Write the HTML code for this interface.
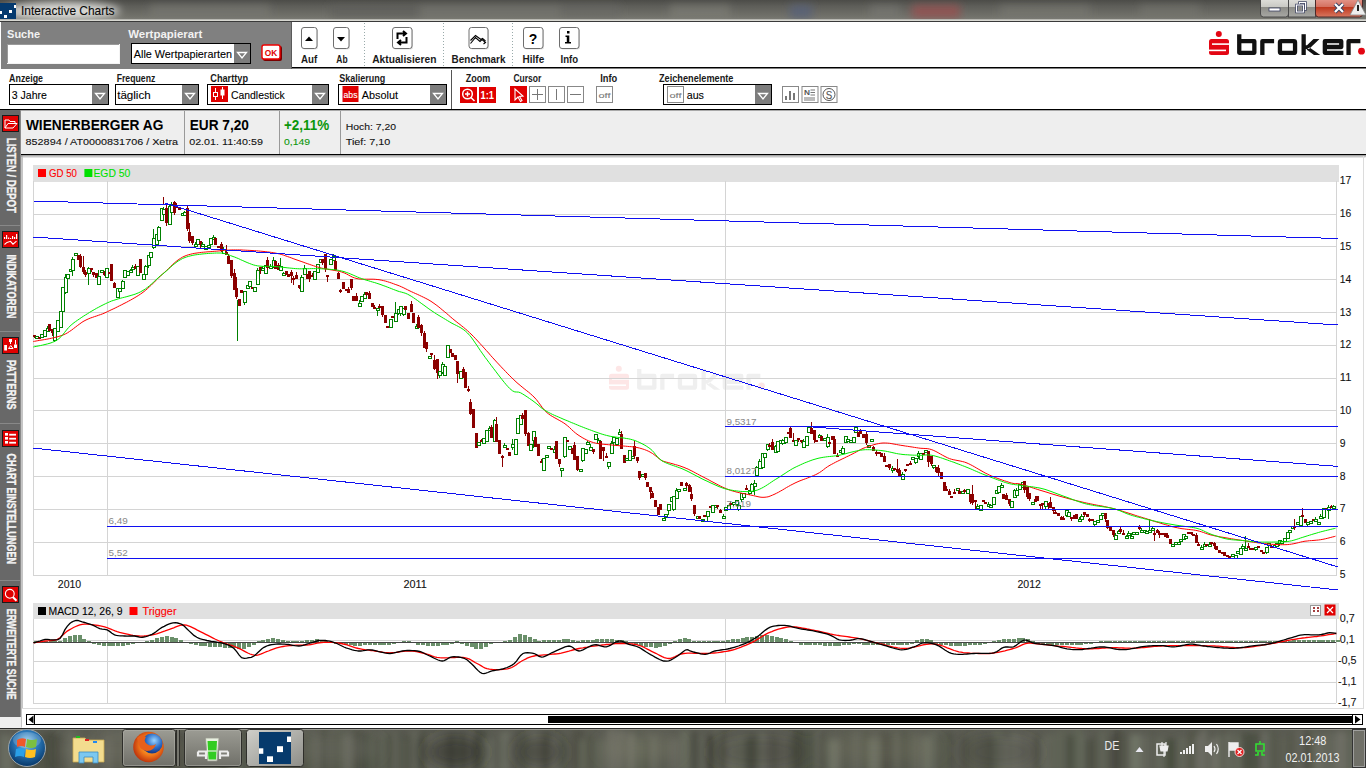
<!DOCTYPE html>
<html><head><meta charset="utf-8"><title>Interactive Charts</title>
<style>html,body{margin:0;padding:0;overflow:hidden;background:#fff;width:1366px;height:768px}
svg{display:block} text{font-family:"Liberation Sans", sans-serif;}</style></head>
<body><svg width="1366" height="768" viewBox="0 0 1366 768" font-family='"Liberation Sans", sans-serif'>
<defs>
<linearGradient id="tb" x1="0" y1="0" x2="0" y2="1">
 <stop offset="0" stop-color="#4c4c48"/><stop offset="0.3" stop-color="#5e5e59"/><stop offset="0.8" stop-color="#72726b"/><stop offset="1" stop-color="#80807a"/>
</linearGradient>
<linearGradient id="task" x1="0" y1="0" x2="0" y2="1">
 <stop offset="0" stop-color="#6e6e66"/><stop offset="0.15" stop-color="#55554d"/><stop offset="1" stop-color="#45453e"/>
</linearGradient>
<filter id="blur8"><feGaussianBlur stdDeviation="8"/></filter>
<clipPath id="tclip"><rect x="0" y="728" width="1366" height="40"/></clipPath>
<clipPath id="tbclip"><rect x="0" y="0" width="1366" height="19"/></clipPath>
<filter id="blur3"><feGaussianBlur stdDeviation="3"/></filter>
<filter id="blur4"><feGaussianBlur stdDeviation="4"/></filter>
<linearGradient id="btnhi" x1="0" y1="0" x2="0" y2="1">
 <stop offset="0" stop-color="#e4e4e0"/><stop offset="0.5" stop-color="#c9c9c4"/><stop offset="0.52" stop-color="#8d8d88"/><stop offset="1" stop-color="#a8a8a4"/>
</linearGradient>
<linearGradient id="closeg" x1="0" y1="0" x2="0" y2="1">
 <stop offset="0" stop-color="#e8a095"/><stop offset="0.5" stop-color="#d4705f"/><stop offset="0.52" stop-color="#c0391f"/><stop offset="1" stop-color="#d8775f"/>
</linearGradient>
<radialGradient id="orb" cx="0.5" cy="0.35" r="0.6">
 <stop offset="0" stop-color="#9fd3f0"/><stop offset="0.5" stop-color="#2a78b8"/><stop offset="1" stop-color="#0b3f73"/>
</radialGradient>
<radialGradient id="globe" cx="0.6" cy="0.35" r="0.6"><stop offset="0" stop-color="#9ad4ff"/><stop offset="0.6" stop-color="#2d6fc8"/><stop offset="1" stop-color="#1a3c8a"/></radialGradient>
<radialGradient id="ff" cx="0.55" cy="0.45" r="0.55">
 <stop offset="0" stop-color="#ffd23a"/><stop offset="0.6" stop-color="#f0771a"/><stop offset="1" stop-color="#c0380e"/>
</radialGradient>
<linearGradient id="tbtn" x1="0" y1="0" x2="0" y2="1">
 <stop offset="0" stop-color="#9c9c94"/><stop offset="1" stop-color="#6f6f68"/>
</linearGradient>
<linearGradient id="tbtn2" x1="0" y1="0" x2="1" y2="1">
 <stop offset="0" stop-color="#cfcfca"/><stop offset="1" stop-color="#8e8e88"/>
</linearGradient>
</defs>
<rect x="0" y="0" width="1366" height="21" fill="url(#tb)" />
<g filter="url(#blur4)">
<rect x="150" y="5" width="120" height="13" fill="#7a7a74" opacity="0.6"/>
<rect x="330" y="5" width="90" height="13" fill="#5e5e5a" opacity="0.6"/>
<rect x="420" y="5" width="140" height="13" fill="#777772" opacity="0.6"/>
<rect x="560" y="5" width="60" height="13" fill="#6a6a66" opacity="0.5"/>
<rect x="670" y="5" width="60" height="13" fill="#86867e" opacity="0.5"/>
<rect x="790" y="5" width="22" height="13" fill="#55607a" opacity="0.8"/>
<rect x="870" y="5" width="30" height="13" fill="#7c7c78" opacity="0.5"/>
<rect x="912" y="5" width="48" height="13" fill="#9a5050" opacity="0.8"/>
<rect x="1000" y="5" width="90" height="13" fill="#7e7e76" opacity="0.5"/>
<rect x="1140" y="5" width="60" height="13" fill="#77776f" opacity="0.5"/>
<ellipse cx="62" cy="11" rx="58" ry="9" fill="#e8e8e4" opacity="0.9"/>
</g>
<rect x="0" y="19" width="1366" height="1" fill="#b8b8b2" />
<rect x="0" y="20" width="1366" height="1" fill="#d8d8d2" />
<rect x="0" y="21" width="1366" height="1" fill="#3a3a3a" />
<rect x="0" y="3" width="16" height="16" fill="#053a6e" />
<rect x="14" y="5" width="2" height="3" fill="#fff" />
<rect x="0" y="11" width="2" height="3" fill="#fff" />
<rect x="9" y="10" width="3" height="3" fill="#fff" />
<rect x="4" y="15" width="3" height="3" fill="#fff" />
<text x="21.0" y="14.6" font-size="12.06" fill="#0a0a0a" stroke="#0a0a0a" stroke-width="0.1" textLength="93.5" lengthAdjust="spacingAndGlyphs" >Interactive Charts</text>
<g>
<rect x="1260.5" y="-3" width="28" height="20" rx="3" fill="url(#btnhi)" stroke="#4a4a4a"/>
<rect x="1288.5" y="-3" width="27" height="20" fill="url(#btnhi)" stroke="#4a4a4a"/>
<rect x="1315.5" y="-3" width="47" height="20" rx="3" fill="url(#closeg)" stroke="#4a2a2a"/>
<rect x="1269" y="8" width="11" height="3" fill="#fff" stroke="#3a4060" stroke-width="0.8"/>
<rect x="1299.5" y="2.5" width="6" height="7" fill="none" stroke="#3a4060" stroke-width="2.5"/>
<rect x="1299.5" y="2.5" width="6" height="7" fill="none" stroke="#fff" stroke-width="1.1"/>
<rect x="1296.5" y="5" width="7" height="7" fill="#a0a09c" stroke="#3a4060" stroke-width="2.5"/>
<rect x="1296.5" y="5" width="7" height="7" fill="none" stroke="#fff" stroke-width="1.1"/>
<rect x="1298.5" y="7" width="3" height="3" fill="#8a8a86"/>
<path d="M1335,4 L1343,12 M1343,4 L1335,12" stroke="#3a4060" stroke-width="4"/>
<path d="M1335,4 L1343,12 M1343,4 L1335,12" stroke="#fff" stroke-width="2.2"/>
<path d="M1358,0 L1366,15 L1350,15 Z" fill="#eee" stroke="#888" stroke-width="0.8"/>
<rect x="1357" y="5" width="2" height="6" fill="#222" />
</g>
<rect x="0" y="22" width="1366" height="88" fill="#ffffff" />
<rect x="1" y="22" width="291" height="47" fill="#808080" />
<rect x="291" y="22" width="1" height="47" fill="#5a5a5a" />
<rect x="292" y="67" width="1074" height="1.5" fill="#000" />
<text x="7.1" y="37.8" font-size="10.76" font-weight="bold" fill="#f2f2f2" textLength="32.9" lengthAdjust="spacingAndGlyphs" >Suche</text>
<text x="128.2" y="37.8" font-size="10.76" font-weight="bold" fill="#f2f2f2" textLength="74.2" lengthAdjust="spacingAndGlyphs" >Wertpapierart</text>
<rect x="7" y="44" width="113" height="20" fill="#f4f4f4" />
<rect x="7" y="44" width="112" height="1" fill="#9a9a9a" />
<rect x="7" y="44" width="1" height="19" fill="#9a9a9a" />
<rect x="8" y="45" width="111" height="18" fill="#ffffff" />
<rect x="131" y="43" width="120" height="21" fill="#000" />
<rect x="132" y="44" width="102" height="19" fill="#fff" />
<rect x="234" y="44" width="16" height="19" fill="#7d7d7d" />
<path d="M237.5,52.5 L246.5,52.5 L242,58 Z" fill="none" stroke="#fff" stroke-width="1.3"/>
<text x="133.8" y="57.6" font-size="11.63" fill="#000" stroke="#000" stroke-width="0.1" textLength="98.2" lengthAdjust="spacingAndGlyphs" >Alle Wertpapierarten</text>
<rect x="263" y="46" width="19" height="15" rx="2" fill="#7a0000"/>
<rect x="262" y="45" width="18" height="14" rx="2" fill="#fff" stroke="#e00" stroke-width="1.4"/>
<text x="264.8" y="56.0" font-size="9.45" font-weight="bold" fill="#e00000" textLength="12.5" lengthAdjust="spacingAndGlyphs" >OK</text>
<rect x="302.5" y="28.5" width="15.5" height="21" rx="2.5" fill="#d8d8d8" opacity="0.8"/>
<rect x="301.5" y="27.5" width="15.5" height="21" rx="2.5" fill="#fff" stroke="#6e6e6e"/>
<rect x="334.5" y="28.5" width="15.5" height="21" rx="2.5" fill="#d8d8d8" opacity="0.8"/>
<rect x="333.5" y="27.5" width="15.5" height="21" rx="2.5" fill="#fff" stroke="#6e6e6e"/>
<rect x="393.5" y="28.5" width="19.5" height="21" rx="2.5" fill="#d8d8d8" opacity="0.8"/>
<rect x="392.5" y="27.5" width="19.5" height="21" rx="2.5" fill="#fff" stroke="#6e6e6e"/>
<rect x="470.0" y="28.5" width="19.0" height="21" rx="2.5" fill="#d8d8d8" opacity="0.8"/>
<rect x="469.0" y="27.5" width="19.0" height="21" rx="2.5" fill="#fff" stroke="#6e6e6e"/>
<rect x="524.5" y="28.5" width="19.5" height="21" rx="2.5" fill="#d8d8d8" opacity="0.8"/>
<rect x="523.5" y="27.5" width="19.5" height="21" rx="2.5" fill="#fff" stroke="#6e6e6e"/>
<rect x="560.5" y="28.5" width="19.5" height="21" rx="2.5" fill="#d8d8d8" opacity="0.8"/>
<rect x="559.5" y="27.5" width="19.5" height="21" rx="2.5" fill="#fff" stroke="#6e6e6e"/>
<path d="M305,41 L313,41 L309,36.5 Z" fill="#000"/>
<path d="M337,37 L345,37 L341,41.5 Z" fill="#000"/>
<path d="M397.5,39 L397.5,33.5 L405,33.5 M403,31 L406,33.5 L403,36 M406.5,37 L406.5,42.5 L399,42.5 M401,40 L398,42.5 L401,45" fill="none" stroke="#000" stroke-width="2"/>
<path d="M470.5,43.5 L475.5,37.5 L480,41.5 L482,39.5 L485.5,42.5 L483.5,44" fill="none" stroke="#000" stroke-width="1.1"/>
<path d="M470.5,40.5 L475.5,35.5 L481,39.5 L482.5,38.5 L485.5,41" fill="none" stroke="#000" stroke-width="1.1"/>
<text x="533" y="44" font-size="14" font-weight="bold" fill="#000" text-anchor="middle" font-family='"Liberation Sans", sans-serif'>?</text>
<rect x="567" y="31" width="2.5" height="2.5" fill="#000"/><path d="M565.5,35.5 L569.3,35.5 L569.3,42 L571,42 L571,43.5 L565,43.5 L565,42 L566.8,42 L566.8,37 L565.5,37 Z" fill="#000"/>
<line x1="364.5" y1="23" x2="364.5" y2="67" stroke="#9aa" stroke-width="1" stroke-dasharray="1,2"/>
<line x1="443.5" y1="23" x2="443.5" y2="67" stroke="#9aa" stroke-width="1" stroke-dasharray="1,2"/>
<line x1="512.5" y1="23" x2="512.5" y2="67" stroke="#9aa" stroke-width="1" stroke-dasharray="1,2"/>
<text x="301.0" y="62.8" font-size="11.19" font-weight="bold" fill="#1a1a1a" textLength="16.2" lengthAdjust="spacingAndGlyphs" >Auf</text>
<text x="336.3" y="62.8" font-size="11.19" font-weight="bold" fill="#1a1a1a" textLength="11.3" lengthAdjust="spacingAndGlyphs" >Ab</text>
<text x="372.2" y="62.8" font-size="11.19" font-weight="bold" fill="#1a1a1a" textLength="64.2" lengthAdjust="spacingAndGlyphs" >Aktualisieren</text>
<text x="451.5" y="62.8" font-size="11.19" font-weight="bold" fill="#1a1a1a" textLength="53.9" lengthAdjust="spacingAndGlyphs" >Benchmark</text>
<text x="522.6" y="62.8" font-size="11.19" font-weight="bold" fill="#1a1a1a" textLength="21.6" lengthAdjust="spacingAndGlyphs" >Hilfe</text>
<text x="560.6" y="62.8" font-size="11.19" font-weight="bold" fill="#1a1a1a" textLength="17.6" lengthAdjust="spacingAndGlyphs" >Info</text>
<g transform="translate(0,0)"><circle cx="1218.8" cy="34" r="3" fill="#e30613"/><rect x="1209" y="39" width="20" height="16" rx="2.5" fill="#e30613"/><rect x="1212" y="43.3" width="17.5" height="1.6" fill="#fff"/><rect x="1208.5" y="49.6" width="17.5" height="1.6" fill="#fff"/><path d="M1239.25,34.2 L1239.25,52.85 L1254.35,52.85 L1254.35,41.15 L1239.25,41.15" fill="none" stroke="#111" stroke-width="4.3" stroke-linejoin="round"/><path d="M1262.3500000000001,55 L1262.3500000000001,41.15 L1274.1,41.15" fill="none" stroke="#111" stroke-width="4.3" stroke-linejoin="round"/><rect x="1279.95" y="41.15" width="15.10000000000009" height="11.7" rx="1.2" fill="none" stroke="#111" stroke-width="4.3"/><path d="M1303.65,34.2 L1303.65,55" fill="none" stroke="#111" stroke-width="4.3"/><path d="M1304,49 L1309,49 L1319.5,39 L1313.5,39 L1307,45.2 L1304,45.2 Z M1309.5,47.5 L1320.3,55 L1314,55 L1306.5,49.5 Z" fill="#111"/><path d="M1343.4,52.85 L1324.8500000000001,52.85 L1324.8500000000001,41.15 L1341.25,41.15 L1341.25,47 L1324.8500000000001,47" fill="none" stroke="#111" stroke-width="4.3" stroke-linejoin="round"/><path d="M1348.5500000000002,55 L1348.5500000000002,41.15 L1360.4,41.15" fill="none" stroke="#111" stroke-width="4.3" stroke-linejoin="round"/><circle cx="1361.5" cy="51.2" r="3.4" fill="#e30613"/></g>
<text x="9.1" y="82.2" font-size="10.17" font-weight="bold" fill="#1a1a1a" textLength="33.9" lengthAdjust="spacingAndGlyphs" >Anzeige</text>
<text x="116.7" y="82.2" font-size="10.17" font-weight="bold" fill="#1a1a1a" textLength="38.6" lengthAdjust="spacingAndGlyphs" >Frequenz</text>
<text x="210.3" y="82.2" font-size="10.17" font-weight="bold" fill="#1a1a1a" textLength="37.7" lengthAdjust="spacingAndGlyphs" >Charttyp</text>
<text x="339.2" y="82.2" font-size="10.17" font-weight="bold" fill="#1a1a1a" textLength="46.1" lengthAdjust="spacingAndGlyphs" >Skalierung</text>
<text x="465.7" y="82.2" font-size="10.17" font-weight="bold" fill="#1a1a1a" textLength="24.6" lengthAdjust="spacingAndGlyphs" >Zoom</text>
<text x="513.4" y="82.2" font-size="10.17" font-weight="bold" fill="#1a1a1a" textLength="27.9" lengthAdjust="spacingAndGlyphs" >Cursor</text>
<text x="600.2" y="82.2" font-size="10.17" font-weight="bold" fill="#1a1a1a" textLength="17.1" lengthAdjust="spacingAndGlyphs" >Info</text>
<text x="659.0" y="82.2" font-size="10.17" font-weight="bold" fill="#1a1a1a" textLength="74.4" lengthAdjust="spacingAndGlyphs" >Zeichenelemente</text>
<rect x="9" y="84" width="100" height="21" fill="#000" />
<rect x="10" y="85" width="98" height="19" fill="#fff" />
<rect x="92" y="85" width="16" height="19" fill="#7d7d7d" />
<path d="M95.5,93.5 L104.5,93.5 L100.0,99 Z" fill="none" stroke="#fff" stroke-width="1.3"/>
<text x="11.7" y="99.2" font-size="11.63" fill="#000" stroke="#000" stroke-width="0.1" textLength="35.2" lengthAdjust="spacingAndGlyphs" >3 Jahre</text>
<rect x="115" y="84" width="84" height="21" fill="#000" />
<rect x="116" y="85" width="82" height="19" fill="#fff" />
<rect x="182" y="85" width="16" height="19" fill="#7d7d7d" />
<path d="M185.5,93.5 L194.5,93.5 L190.0,99 Z" fill="none" stroke="#fff" stroke-width="1.3"/>
<text x="117.2" y="99.2" font-size="11.63" fill="#000" stroke="#000" stroke-width="0.1" textLength="33.5" lengthAdjust="spacingAndGlyphs" >täglich</text>
<rect x="207" y="84" width="122" height="21" fill="#000" />
<rect x="208" y="85" width="120" height="19" fill="#fff" />
<rect x="312" y="85" width="16" height="19" fill="#7d7d7d" />
<path d="M315.5,93.5 L324.5,93.5 L320.0,99 Z" fill="none" stroke="#fff" stroke-width="1.3"/>
<text x="230.9" y="99.2" font-size="11.63" fill="#000" stroke="#000" stroke-width="0.1" textLength="53.9" lengthAdjust="spacingAndGlyphs" >Candlestick</text>
<rect x="338" y="84" width="109" height="21" fill="#000" />
<rect x="339" y="85" width="107" height="19" fill="#fff" />
<rect x="430" y="85" width="16" height="19" fill="#7d7d7d" />
<path d="M433.5,93.5 L442.5,93.5 L438.0,99 Z" fill="none" stroke="#fff" stroke-width="1.3"/>
<text x="361.8" y="99.2" font-size="11.63" fill="#000" stroke="#000" stroke-width="0.1" textLength="36.2" lengthAdjust="spacingAndGlyphs" >Absolut</text>
<rect x="663" y="84" width="109" height="21" fill="#000" />
<rect x="664" y="85" width="107" height="19" fill="#fff" />
<rect x="755" y="85" width="16" height="19" fill="#7d7d7d" />
<path d="M758.5,93.5 L767.5,93.5 L763.0,99 Z" fill="none" stroke="#fff" stroke-width="1.3"/>
<text x="686.7" y="99.2" font-size="11.63" fill="#000" stroke="#000" stroke-width="0.1" textLength="17.3" lengthAdjust="spacingAndGlyphs" >aus</text>
<rect x="211" y="86" width="17" height="16" fill="#e00000" />
<path d="M215.5,88 L215.5,100 M222.5,87 L222.5,99" stroke="#fff" stroke-width="1"/>
<rect x="213.5" y="92.5" width="4" height="4" fill="#e00000" stroke="#fff"/><rect x="220.5" y="89.5" width="4" height="6" fill="#fff"/>
<rect x="342.5" y="86" width="16" height="16" fill="#e00000" />
<text x="343.5" y="98.0" font-size="8.72" fill="#fff" stroke="#fff" stroke-width="0.1" textLength="14.0" lengthAdjust="spacingAndGlyphs" >abs</text>
<rect x="451" y="70" width="1" height="39" fill="#555" />
<rect x="460" y="87" width="17" height="16" fill="#e00000" />
<circle cx="467.5" cy="94" r="4.8" fill="none" stroke="#fff" stroke-width="1.5"/><path d="M465,94 L470,94 M467.5,91.5 L467.5,96.5 M471,97.5 L474.5,101" stroke="#fff" stroke-width="1.5"/>
<rect x="479" y="87" width="17" height="16" fill="#e00000" />
<text x="480.5" y="98.5" font-size="10.17" font-weight="bold" fill="#fff" textLength="13.5" lengthAdjust="spacingAndGlyphs" >1:1</text>
<rect x="510" y="86" width="17" height="17" fill="#e00000" />
<path d="M515,89 L515,100 L518,97 L520.5,101.5 L522,100.5 L519.5,96.5 L523,96 Z" fill="none" stroke="#fff" stroke-width="1.1"/>
<rect x="529.5" y="86.5" width="16" height="16" fill="#fff" stroke="#888"/>
<rect x="548.5" y="86.5" width="16" height="16" fill="#fff" stroke="#888"/>
<rect x="567.5" y="86.5" width="16" height="16" fill="#fff" stroke="#888"/>
<path d="M537.5,89 L537.5,100 M532,94.5 L543,94.5" stroke="#777" stroke-width="1"/>
<path d="M556.5,89 L556.5,100" stroke="#777" stroke-width="1"/>
<path d="M570,94.5 L581,94.5" stroke="#777" stroke-width="1"/>
<rect x="596.5" y="86.5" width="16" height="16" fill="#fff" stroke="#888"/>
<text x="598.5" y="97.5" font-size="7.99" fill="#777" stroke="#777" stroke-width="0.1" textLength="12.0" lengthAdjust="spacingAndGlyphs" >off</text>
<rect x="667.5" y="86.5" width="16" height="16" fill="#fff" stroke="#888"/>
<text x="669.5" y="97.5" font-size="7.99" fill="#777" stroke="#777" stroke-width="0.1" textLength="12.0" lengthAdjust="spacingAndGlyphs" >off</text>
<rect x="782.5" y="86.5" width="16" height="16" fill="#fff" stroke="#888"/>
<rect x="802.0" y="86.5" width="16" height="16" fill="#fff" stroke="#888"/>
<rect x="821.0" y="86.5" width="16" height="16" fill="#fff" stroke="#888"/>
<path d="M786,100 L786,96 M790,100 L790,91 M794,100 L794,93" stroke="#555" stroke-width="1.6"/>
<path d="M804,98 L815,98 M804,100 L815,100" stroke="#555" stroke-width="0.8"/>
<text x="804.0" y="95.0" font-size="7.99" font-weight="bold" fill="#555" textLength="6.0" lengthAdjust="spacingAndGlyphs" >N</text>
<path d="M810.5,90 L815,90 M810.5,92.5 L815,92.5 M810.5,95 L815,95" stroke="#555" stroke-width="0.8"/>
<circle cx="829" cy="94.5" r="6" fill="none" stroke="#555" stroke-width="1"/>
<text x="825.8" y="98.5" font-size="10.90" fill="#555" stroke="#555" stroke-width="0.1" textLength="6.5" lengthAdjust="spacingAndGlyphs" >S</text>
<rect x="21" y="109" width="1345" height="1.6" fill="#000" />
<rect x="0" y="109" width="21" height="1" fill="#000" />
<rect x="21" y="110.5" width="1345" height="44" fill="#eeeeee" />
<rect x="21" y="154" width="1345" height="1.5" fill="#000" />
<rect x="184" y="111" width="1" height="43" fill="#999" />
<rect x="279" y="111" width="1" height="43" fill="#999" />
<rect x="340" y="111" width="1" height="43" fill="#999" />
<text x="25.9" y="130.0" font-size="14.10" font-weight="bold" fill="#000" textLength="137.5" lengthAdjust="spacingAndGlyphs" >WIENERBERGER AG</text>
<text x="25.6" y="144.9" font-size="9.59" fill="#111" stroke="#111" stroke-width="0.1" textLength="152.4" lengthAdjust="spacingAndGlyphs" >852894 / AT0000831706 / Xetra</text>
<text x="189.7" y="129.7" font-size="13.81" font-weight="bold" fill="#000" textLength="59.3" lengthAdjust="spacingAndGlyphs" >EUR 7,20</text>
<text x="189.2" y="144.6" font-size="9.59" fill="#111" stroke="#111" stroke-width="0.1" textLength="73.8" lengthAdjust="spacingAndGlyphs" >02.01. 11:40:59</text>
<text x="284.0" y="129.7" font-size="13.81" font-weight="bold" fill="#0a960a" textLength="45.3" lengthAdjust="spacingAndGlyphs" >+2,11%</text>
<text x="284.0" y="144.6" font-size="9.59" fill="#0a960a" stroke="#0a960a" stroke-width="0.1" textLength="26.0" lengthAdjust="spacingAndGlyphs" >0,149</text>
<text x="345.7" y="129.9" font-size="9.74" fill="#111" stroke="#111" stroke-width="0.1" textLength="50.3" lengthAdjust="spacingAndGlyphs" >Hoch: 7,20</text>
<text x="345.7" y="144.6" font-size="9.59" fill="#111" stroke="#111" stroke-width="0.1" textLength="44.6" lengthAdjust="spacingAndGlyphs" >Tief: 7,10</text>
<rect x="0" y="110" width="21" height="607" fill="#686868" />
<rect x="20" y="110" width="1" height="607" fill="#8a8a8a" />
<rect x="0" y="717" width="21" height="11" fill="#efefef" />
<rect x="0" y="225" width="20" height="1" fill="#888" />
<rect x="0" y="331" width="20" height="1" fill="#888" />
<rect x="0" y="423" width="20" height="1" fill="#888" />
<rect x="0" y="580" width="20" height="1" fill="#888" />
<rect x="2" y="115" width="17" height="17" fill="#1a1a1a" />
<rect x="3" y="116" width="15" height="15" fill="#e00000" />
<rect x="2" y="231" width="17" height="17" fill="#1a1a1a" />
<rect x="3" y="232" width="15" height="15" fill="#e00000" />
<rect x="2" y="337" width="17" height="17" fill="#1a1a1a" />
<rect x="3" y="338" width="15" height="15" fill="#e00000" />
<rect x="2" y="430" width="17" height="17" fill="#1a1a1a" />
<rect x="3" y="431" width="15" height="15" fill="#e00000" />
<rect x="2" y="586" width="17" height="17" fill="#1a1a1a" />
<rect x="3" y="587" width="15" height="15" fill="#e00000" />
<path d="M5,120 L9,120 L10,121.5 L15,121.5 L15,123 M5,120 L5,128 L13,128 L17,123.5 L8,123.5 L5,128" fill="none" stroke="#fff" stroke-width="1"/>
<rect x="4" y="237" width="1.2" height="2" fill="#fff" />
<rect x="6" y="235" width="1.2" height="4" fill="#fff" />
<rect x="8" y="237.5" width="1.2" height="1.5" fill="#fff" />
<rect x="10" y="238" width="1.2" height="1" fill="#fff" />
<rect x="12" y="236" width="1.2" height="3" fill="#fff" />
<rect x="14" y="237" width="1.2" height="2" fill="#fff" />
<rect x="16" y="234" width="1.2" height="5" fill="#fff" />
<path d="M4.5,244.5 L7,242.4 L10.5,241.3 L13,244.2 L16.5,241.2" fill="none" stroke="#fff" stroke-width="1.1"/>
<rect x="4.2" y="345" width="2.8" height="5.5" fill="#fff"/><rect x="9" y="339" width="3" height="3" fill="#fff"/><rect x="10" y="342" width="1" height="2" fill="#fff"/><path d="M8.5,348.5 L13,348.5 L10.75,345.5 Z" fill="none" stroke="#fff" stroke-width="1"/><rect x="15" y="340" width="1" height="4.5" fill="#fff"/><rect x="14" y="344.5" width="3" height="3.5" fill="#fff"/>
<rect x="5" y="433" width="3" height="2.6" fill="#fff" />
<rect x="9.2" y="433.8" width="6.8" height="1.8" fill="#fff" />
<rect x="5" y="437" width="3" height="2.6" fill="#fff" />
<rect x="9.2" y="437.8" width="6.8" height="1.8" fill="#fff" />
<rect x="5" y="441" width="3" height="2.6" fill="#fff" />
<rect x="9.2" y="441.8" width="6.8" height="1.8" fill="#fff" />
<circle cx="9.8" cy="593.8" r="4.4" fill="none" stroke="#fff" stroke-width="1.1"/><path d="M12.8,597 L16.5,600.7" stroke="#fff" stroke-width="2"/>
<text transform="translate(6.9,175.3) rotate(90)" x="0" y="0" font-size="11.92" font-weight="bold" fill="#f4f4f4" stroke="#f4f4f4" stroke-width="0.35" text-anchor="middle" textLength="75.0" lengthAdjust="spacingAndGlyphs">LISTEN / DEPOT</text>
<text transform="translate(6.9,286.4) rotate(90)" x="0" y="0" font-size="11.92" font-weight="bold" fill="#f4f4f4" stroke="#f4f4f4" stroke-width="0.35" text-anchor="middle" textLength="64.0" lengthAdjust="spacingAndGlyphs">INDIKATOREN</text>
<text transform="translate(6.9,384.7) rotate(90)" x="0" y="0" font-size="11.92" font-weight="bold" fill="#f4f4f4" stroke="#f4f4f4" stroke-width="0.35" text-anchor="middle" textLength="50.0" lengthAdjust="spacingAndGlyphs">PATTERNS</text>
<text transform="translate(6.9,508.7) rotate(90)" x="0" y="0" font-size="11.92" font-weight="bold" fill="#f4f4f4" stroke="#f4f4f4" stroke-width="0.35" text-anchor="middle" textLength="110.6" lengthAdjust="spacingAndGlyphs">CHART EINSTELLUNGEN</text>
<text transform="translate(6.9,654.2) rotate(90)" x="0" y="0" font-size="11.92" font-weight="bold" fill="#f4f4f4" stroke="#f4f4f4" stroke-width="0.35" text-anchor="middle" textLength="90.8" lengthAdjust="spacingAndGlyphs">ERWEITERTE SUCHE</text>
<rect x="21" y="155.5" width="1345" height="572.5" fill="#ffffff" />
<rect x="21" y="155.5" width="1345" height="1" fill="#8c8c8c" />
<rect x="21.5" y="155.5" width="1" height="572" fill="#8c8c8c" />
<rect x="22.5" y="156.5" width="1343" height="1" fill="#c8c8c8" />
<rect x="1363" y="156" width="1" height="552" fill="#dcdcdc" />
<rect x="22" y="708" width="1342" height="1" fill="#dcdcdc" />
<g shape-rendering="crispEdges">
<rect x="33" y="165" width="1306" height="17" fill="#e0e0e0" />
<rect x="33" y="603" width="1306" height="16" fill="#e0e0e0" />
</g>
<g transform="translate(-600,334.8)"><circle cx="1218.8" cy="34" r="3" fill="#fde6e6"/><rect x="1209" y="39" width="20" height="16" rx="2.5" fill="#fde6e6"/><rect x="1212" y="43.3" width="17.5" height="1.6" fill="#fff"/><rect x="1208.5" y="49.6" width="17.5" height="1.6" fill="#fff"/><path d="M1239.25,34.2 L1239.25,52.85 L1254.35,52.85 L1254.35,41.15 L1239.25,41.15" fill="none" stroke="#efefef" stroke-width="4.3" stroke-linejoin="round"/><path d="M1262.3500000000001,55 L1262.3500000000001,41.15 L1274.1,41.15" fill="none" stroke="#efefef" stroke-width="4.3" stroke-linejoin="round"/><rect x="1279.95" y="41.15" width="15.10000000000009" height="11.7" rx="1.2" fill="none" stroke="#efefef" stroke-width="4.3"/><path d="M1303.65,34.2 L1303.65,55" fill="none" stroke="#efefef" stroke-width="4.3"/><path d="M1304,49 L1309,49 L1319.5,39 L1313.5,39 L1307,45.2 L1304,45.2 Z M1309.5,47.5 L1320.3,55 L1314,55 L1306.5,49.5 Z" fill="#efefef"/><path d="M1343.4,52.85 L1324.8500000000001,52.85 L1324.8500000000001,41.15 L1341.25,41.15 L1341.25,47 L1324.8500000000001,47" fill="none" stroke="#efefef" stroke-width="4.3" stroke-linejoin="round"/><path d="M1348.5500000000002,55 L1348.5500000000002,41.15 L1360.4,41.15" fill="none" stroke="#efefef" stroke-width="4.3" stroke-linejoin="round"/><circle cx="1361.5" cy="51.2" r="3.4" fill="#fde6e6"/></g>
<g shape-rendering="crispEdges">
<rect x="33" y="542" width="1303" height="1" fill="#d4d4d4" />
<rect x="33" y="509" width="1303" height="1" fill="#d4d4d4" />
<rect x="33" y="476" width="1303" height="1" fill="#d4d4d4" />
<rect x="33" y="443" width="1303" height="1" fill="#d4d4d4" />
<rect x="33" y="410" width="1303" height="1" fill="#d4d4d4" />
<rect x="33" y="378" width="1303" height="1" fill="#d4d4d4" />
<rect x="33" y="345" width="1303" height="1" fill="#d4d4d4" />
<rect x="33" y="312" width="1303" height="1" fill="#d4d4d4" />
<rect x="33" y="279" width="1303" height="1" fill="#d4d4d4" />
<rect x="33" y="246" width="1303" height="1" fill="#d4d4d4" />
<rect x="33" y="214" width="1303" height="1" fill="#d4d4d4" />
<rect x="33" y="181" width="1" height="395" fill="#d4d4d4" />
<rect x="1335.5" y="181" width="1" height="395" fill="#d4d4d4" />
<rect x="107" y="181" width="1" height="395" fill="#d4d4d4" />
<rect x="725" y="181" width="1" height="395" fill="#d4d4d4" />
<rect x="33" y="575" width="1303" height="1" fill="#d4d4d4" />
<rect x="33" y="639.5" width="1303" height="1" fill="#d4d4d4" />
<rect x="33" y="660.5" width="1303" height="1" fill="#d4d4d4" />
<rect x="33" y="681.5" width="1303" height="1" fill="#d4d4d4" />
<rect x="33" y="702.5" width="1303" height="1" fill="#d4d4d4" />
<rect x="33" y="619" width="1" height="84" fill="#d4d4d4" />
<rect x="1335.5" y="619" width="1" height="84" fill="#d4d4d4" />
<rect x="107" y="619" width="1" height="84" fill="#d4d4d4" />
<rect x="725" y="619" width="1" height="84" fill="#d4d4d4" />
</g>
<rect x="38" y="169" width="8" height="8" fill="#ff0000" />
<text x="49.0" y="177.0" font-size="10.17" fill="#ff0000" stroke="#ff0000" stroke-width="0.1" textLength="28.0" lengthAdjust="spacingAndGlyphs" >GD 50</text>
<rect x="84.4" y="169" width="8" height="8" fill="#00e000" />
<text x="93.4" y="177.0" font-size="10.17" fill="#00e000" stroke="#00e000" stroke-width="0.1" textLength="37.0" lengthAdjust="spacingAndGlyphs" >EGD 50</text>
<rect x="38" y="607" width="8" height="8" fill="#000" />
<text x="48.5" y="614.8" font-size="10.17" fill="#000" stroke="#000" stroke-width="0.1" textLength="74.0" lengthAdjust="spacingAndGlyphs" >MACD 12, 26, 9</text>
<rect x="129.5" y="607" width="8" height="8" fill="#ff0000" />
<text x="142.5" y="614.8" font-size="10.17" fill="#ff0000" stroke="#ff0000" stroke-width="0.1" textLength="34.0" lengthAdjust="spacingAndGlyphs" >Trigger</text>
<text x="1339.8" y="578.0" font-size="10.76" fill="#111" stroke="#111" stroke-width="0.1" textLength="5.8" lengthAdjust="spacingAndGlyphs" >5</text>
<text x="1339.8" y="545.2" font-size="10.76" fill="#111" stroke="#111" stroke-width="0.1" textLength="5.8" lengthAdjust="spacingAndGlyphs" >6</text>
<text x="1339.8" y="512.4" font-size="10.76" fill="#111" stroke="#111" stroke-width="0.1" textLength="5.8" lengthAdjust="spacingAndGlyphs" >7</text>
<text x="1339.8" y="479.6" font-size="10.76" fill="#111" stroke="#111" stroke-width="0.1" textLength="5.8" lengthAdjust="spacingAndGlyphs" >8</text>
<text x="1339.8" y="446.8" font-size="10.76" fill="#111" stroke="#111" stroke-width="0.1" textLength="5.8" lengthAdjust="spacingAndGlyphs" >9</text>
<text x="1339.8" y="414.0" font-size="10.76" fill="#111" stroke="#111" stroke-width="0.1" textLength="11.5" lengthAdjust="spacingAndGlyphs" >10</text>
<text x="1339.8" y="381.2" font-size="10.76" fill="#111" stroke="#111" stroke-width="0.1" textLength="11.5" lengthAdjust="spacingAndGlyphs" >11</text>
<text x="1339.8" y="348.4" font-size="10.76" fill="#111" stroke="#111" stroke-width="0.1" textLength="11.5" lengthAdjust="spacingAndGlyphs" >12</text>
<text x="1339.8" y="315.6" font-size="10.76" fill="#111" stroke="#111" stroke-width="0.1" textLength="11.5" lengthAdjust="spacingAndGlyphs" >13</text>
<text x="1339.8" y="282.8" font-size="10.76" fill="#111" stroke="#111" stroke-width="0.1" textLength="11.5" lengthAdjust="spacingAndGlyphs" >14</text>
<text x="1339.8" y="250.0" font-size="10.76" fill="#111" stroke="#111" stroke-width="0.1" textLength="11.5" lengthAdjust="spacingAndGlyphs" >15</text>
<text x="1339.8" y="217.2" font-size="10.76" fill="#111" stroke="#111" stroke-width="0.1" textLength="11.5" lengthAdjust="spacingAndGlyphs" >16</text>
<text x="1339.8" y="184.4" font-size="10.76" fill="#111" stroke="#111" stroke-width="0.1" textLength="11.5" lengthAdjust="spacingAndGlyphs" >17</text>
<text x="1339.8" y="622.2" font-size="10.76" fill="#111" stroke="#111" stroke-width="0.1" >0,7</text>
<text x="1339.8" y="643.2" font-size="10.76" fill="#111" stroke="#111" stroke-width="0.1" >0,1</text>
<text x="1338.0" y="664.2" font-size="10.76" fill="#111" stroke="#111" stroke-width="0.1" >-0,5</text>
<text x="1338.0" y="685.2" font-size="10.76" fill="#111" stroke="#111" stroke-width="0.1" >-1,1</text>
<text x="1338.0" y="706.2" font-size="10.76" fill="#111" stroke="#111" stroke-width="0.1" >-1,7</text>
<text x="57.8" y="587.7" font-size="11.05" fill="#111" stroke="#111" stroke-width="0.1" textLength="23.4" lengthAdjust="spacingAndGlyphs" >2010</text>
<text x="403.5" y="587.7" font-size="11.05" fill="#111" stroke="#111" stroke-width="0.1" textLength="23.4" lengthAdjust="spacingAndGlyphs" >2011</text>
<text x="1017.5" y="587.7" font-size="11.05" fill="#111" stroke="#111" stroke-width="0.1" textLength="23.4" lengthAdjust="spacingAndGlyphs" >2012</text>
<g shape-rendering="crispEdges">
<line x1="34.5" y1="335" x2="34.5" y2="338" stroke="#8b0000"/>
<rect x="33" y="335" width="3" height="2" fill="#8b0000"/>
<rect x="35.5" y="336.5" width="3" height="2" fill="#fff" stroke="#008000"/>
<rect x="38" y="337" width="3" height="2" fill="#8b0000"/>
<line x1="41.5" y1="334" x2="41.5" y2="338" stroke="#008000"/>
<rect x="40.5" y="334.5" width="3" height="3" fill="#fff" stroke="#008000"/>
<rect x="43.5" y="330.5" width="3" height="6" fill="#fff" stroke="#008000"/>
<line x1="47.5" y1="326" x2="47.5" y2="331" stroke="#008000"/>
<rect x="46.5" y="328.5" width="3" height="3" fill="#fff" stroke="#008000"/>
<rect x="48" y="324" width="3" height="7" fill="#8b0000"/>
<line x1="52.5" y1="329" x2="52.5" y2="336" stroke="#8b0000"/>
<rect x="51" y="329" width="3" height="4" fill="#8b0000"/>
<line x1="54.5" y1="328" x2="54.5" y2="342" stroke="#008000"/>
<rect x="53.5" y="328.5" width="3" height="12" fill="#fff" stroke="#008000"/>
<rect x="56.5" y="320.5" width="3" height="11" fill="#fff" stroke="#008000"/>
<rect x="59.5" y="311.5" width="3" height="16" fill="#fff" stroke="#008000"/>
<line x1="62.5" y1="287" x2="62.5" y2="319" stroke="#008000"/>
<rect x="61.5" y="287.5" width="3" height="24" fill="#fff" stroke="#008000"/>
<line x1="65.5" y1="274" x2="65.5" y2="294" stroke="#008000"/>
<rect x="64.5" y="277.5" width="3" height="15" fill="#fff" stroke="#008000"/>
<rect x="66.5" y="274.5" width="3" height="4" fill="#fff" stroke="#008000"/>
<rect x="69.5" y="269.5" width="3" height="2" fill="#fff" stroke="#008000"/>
<line x1="72.5" y1="257" x2="72.5" y2="276" stroke="#008000"/>
<rect x="71.5" y="259.5" width="3" height="11" fill="#fff" stroke="#008000"/>
<rect x="74.5" y="253.5" width="3" height="2" fill="#fff" stroke="#008000"/>
<rect x="77" y="255" width="3" height="5" fill="#8b0000"/>
<line x1="80.5" y1="254" x2="80.5" y2="268" stroke="#8b0000"/>
<rect x="79" y="256" width="3" height="11" fill="#8b0000"/>
<line x1="83.5" y1="256" x2="83.5" y2="274" stroke="#8b0000"/>
<rect x="82" y="267" width="3" height="5" fill="#8b0000"/>
<line x1="85.5" y1="270" x2="85.5" y2="277" stroke="#8b0000"/>
<rect x="84" y="272" width="3" height="3" fill="#8b0000"/>
<line x1="88.5" y1="267" x2="88.5" y2="285" stroke="#008000"/>
<rect x="87.5" y="268.5" width="3" height="5" fill="#fff" stroke="#008000"/>
<line x1="91.5" y1="268" x2="91.5" y2="272" stroke="#8b0000"/>
<rect x="90" y="268" width="3" height="2" fill="#8b0000"/>
<line x1="93.5" y1="272" x2="93.5" y2="277" stroke="#8b0000"/>
<rect x="92" y="272" width="3" height="3" fill="#8b0000"/>
<rect x="95" y="273" width="3" height="5" fill="#8b0000"/>
<line x1="98.5" y1="270" x2="98.5" y2="284" stroke="#008000"/>
<rect x="97.5" y="276.5" width="3" height="8" fill="#fff" stroke="#008000"/>
<rect x="100.5" y="270.5" width="3" height="2" fill="#fff" stroke="#008000"/>
<line x1="104.5" y1="271" x2="104.5" y2="276" stroke="#8b0000"/>
<rect x="103" y="272" width="3" height="3" fill="#8b0000"/>
<rect x="105.5" y="268.5" width="3" height="9" fill="#fff" stroke="#008000"/>
<rect x="108" y="272" width="3" height="2" fill="#8b0000"/>
<rect x="110" y="264" width="3" height="17" fill="#8b0000"/>
<line x1="114.5" y1="282" x2="114.5" y2="288" stroke="#8b0000"/>
<rect x="113" y="283" width="3" height="5" fill="#8b0000"/>
<rect x="116.5" y="288.5" width="3" height="9" fill="#fff" stroke="#008000"/>
<rect x="118.5" y="288.5" width="3" height="3" fill="#fff" stroke="#008000"/>
<line x1="122.5" y1="280" x2="122.5" y2="289" stroke="#008000"/>
<rect x="121.5" y="281.5" width="3" height="7" fill="#fff" stroke="#008000"/>
<rect x="123.5" y="270.5" width="3" height="7" fill="#fff" stroke="#008000"/>
<rect x="126.5" y="271.5" width="3" height="4" fill="#fff" stroke="#008000"/>
<line x1="130.5" y1="269" x2="130.5" y2="271" stroke="#008000"/>
<rect x="129.5" y="270.5" width="3" height="2" fill="#fff" stroke="#008000"/>
<line x1="132.5" y1="265" x2="132.5" y2="269" stroke="#008000"/>
<rect x="131.5" y="267.5" width="3" height="2" fill="#fff" stroke="#008000"/>
<line x1="135.5" y1="264" x2="135.5" y2="269" stroke="#8b0000"/>
<rect x="134" y="266" width="3" height="3" fill="#8b0000"/>
<rect x="136.5" y="266.5" width="3" height="9" fill="#fff" stroke="#008000"/>
<rect x="139" y="259" width="3" height="14" fill="#8b0000"/>
<rect x="142.5" y="274.5" width="3" height="5" fill="#fff" stroke="#008000"/>
<line x1="145.5" y1="265" x2="145.5" y2="276" stroke="#008000"/>
<rect x="144.5" y="266.5" width="3" height="8" fill="#fff" stroke="#008000"/>
<line x1="148.5" y1="255" x2="148.5" y2="268" stroke="#008000"/>
<rect x="147.5" y="255.5" width="3" height="10" fill="#fff" stroke="#008000"/>
<rect x="149.5" y="252.5" width="3" height="5" fill="#fff" stroke="#008000"/>
<line x1="153.5" y1="229" x2="153.5" y2="249" stroke="#008000"/>
<rect x="152.5" y="238.5" width="3" height="9" fill="#fff" stroke="#008000"/>
<rect x="155.5" y="234.5" width="3" height="10" fill="#fff" stroke="#008000"/>
<line x1="158.5" y1="226" x2="158.5" y2="243" stroke="#008000"/>
<rect x="157.5" y="227.5" width="3" height="13" fill="#fff" stroke="#008000"/>
<line x1="161.5" y1="208" x2="161.5" y2="221" stroke="#008000"/>
<rect x="160.5" y="208.5" width="3" height="12" fill="#fff" stroke="#008000"/>
<line x1="163.5" y1="207" x2="163.5" y2="214" stroke="#008000"/>
<rect x="162.5" y="209.5" width="3" height="5" fill="#fff" stroke="#008000"/>
<line x1="166.5" y1="205" x2="166.5" y2="226" stroke="#8b0000"/>
<rect x="165" y="208" width="3" height="15" fill="#8b0000"/>
<line x1="169.5" y1="205" x2="169.5" y2="224" stroke="#008000"/>
<rect x="168.5" y="206.5" width="3" height="18" fill="#fff" stroke="#008000"/>
<line x1="171.5" y1="202" x2="171.5" y2="215" stroke="#008000"/>
<rect x="170.5" y="204.5" width="3" height="8" fill="#fff" stroke="#008000"/>
<line x1="174.5" y1="201" x2="174.5" y2="215" stroke="#8b0000"/>
<rect x="173" y="202" width="3" height="11" fill="#8b0000"/>
<line x1="176.5" y1="203" x2="176.5" y2="206" stroke="#8b0000"/>
<rect x="175" y="206" width="3" height="2" fill="#8b0000"/>
<rect x="178" y="208" width="3" height="2" fill="#8b0000"/>
<line x1="182.5" y1="213" x2="182.5" y2="216" stroke="#008000"/>
<rect x="181.5" y="213.5" width="3" height="2" fill="#fff" stroke="#008000"/>
<line x1="184.5" y1="211" x2="184.5" y2="215" stroke="#008000"/>
<rect x="183.5" y="212.5" width="3" height="3" fill="#fff" stroke="#008000"/>
<line x1="187.5" y1="206" x2="187.5" y2="231" stroke="#8b0000"/>
<rect x="186" y="208" width="3" height="21" fill="#8b0000"/>
<line x1="189.5" y1="223" x2="189.5" y2="243" stroke="#8b0000"/>
<rect x="188" y="232" width="3" height="9" fill="#8b0000"/>
<line x1="192.5" y1="236" x2="192.5" y2="245" stroke="#8b0000"/>
<rect x="191" y="236" width="3" height="7" fill="#8b0000"/>
<line x1="195.5" y1="242" x2="195.5" y2="245" stroke="#008000"/>
<rect x="194.5" y="244.5" width="3" height="2" fill="#fff" stroke="#008000"/>
<rect x="196.5" y="239.5" width="3" height="5" fill="#fff" stroke="#008000"/>
<line x1="200.5" y1="241" x2="200.5" y2="248" stroke="#8b0000"/>
<rect x="199" y="241" width="3" height="4" fill="#8b0000"/>
<line x1="202.5" y1="242" x2="202.5" y2="246" stroke="#008000"/>
<rect x="201.5" y="244.5" width="3" height="2" fill="#fff" stroke="#008000"/>
<rect x="204.5" y="246.5" width="3" height="3" fill="#fff" stroke="#008000"/>
<line x1="208.5" y1="245" x2="208.5" y2="249" stroke="#008000"/>
<rect x="207.5" y="245.5" width="3" height="2" fill="#fff" stroke="#008000"/>
<line x1="210.5" y1="238" x2="210.5" y2="247" stroke="#008000"/>
<rect x="209.5" y="238.5" width="3" height="6" fill="#fff" stroke="#008000"/>
<line x1="213.5" y1="235" x2="213.5" y2="239" stroke="#008000"/>
<rect x="212.5" y="237.5" width="3" height="2" fill="#fff" stroke="#008000"/>
<rect x="214" y="238" width="3" height="7" fill="#8b0000"/>
<rect x="217" y="246" width="3" height="2" fill="#8b0000"/>
<line x1="221.5" y1="242" x2="221.5" y2="252" stroke="#8b0000"/>
<rect x="220" y="244" width="3" height="7" fill="#8b0000"/>
<line x1="223.5" y1="247" x2="223.5" y2="253" stroke="#008000"/>
<rect x="222.5" y="249.5" width="3" height="4" fill="#fff" stroke="#008000"/>
<line x1="226.5" y1="245" x2="226.5" y2="255" stroke="#8b0000"/>
<rect x="225" y="252" width="3" height="3" fill="#8b0000"/>
<line x1="228.5" y1="254" x2="228.5" y2="264" stroke="#8b0000"/>
<rect x="227" y="256" width="3" height="8" fill="#8b0000"/>
<line x1="231.5" y1="260" x2="231.5" y2="278" stroke="#8b0000"/>
<rect x="230" y="260" width="3" height="16" fill="#8b0000"/>
<line x1="234.5" y1="269" x2="234.5" y2="290" stroke="#8b0000"/>
<rect x="233" y="273" width="3" height="17" fill="#8b0000"/>
<line x1="236.5" y1="277" x2="236.5" y2="299" stroke="#8b0000"/>
<rect x="235" y="288" width="3" height="9" fill="#8b0000"/>
<rect x="238" y="299" width="3" height="7" fill="#8b0000"/>
<rect x="240" y="290" width="3" height="3" fill="#8b0000"/>
<line x1="244.5" y1="291" x2="244.5" y2="305" stroke="#008000"/>
<rect x="243.5" y="291.5" width="3" height="11" fill="#fff" stroke="#008000"/>
<rect x="246.5" y="285.5" width="3" height="3" fill="#fff" stroke="#008000"/>
<rect x="248.5" y="281.5" width="3" height="5" fill="#fff" stroke="#008000"/>
<rect x="251" y="287" width="3" height="2" fill="#8b0000"/>
<line x1="254.5" y1="287" x2="254.5" y2="292" stroke="#008000"/>
<rect x="253.5" y="287.5" width="3" height="4" fill="#fff" stroke="#008000"/>
<line x1="257.5" y1="268" x2="257.5" y2="284" stroke="#008000"/>
<rect x="256.5" y="270.5" width="3" height="14" fill="#fff" stroke="#008000"/>
<line x1="260.5" y1="267" x2="260.5" y2="274" stroke="#8b0000"/>
<rect x="259" y="267" width="3" height="4" fill="#8b0000"/>
<line x1="262.5" y1="266" x2="262.5" y2="271" stroke="#008000"/>
<rect x="261.5" y="268.5" width="3" height="2" fill="#fff" stroke="#008000"/>
<rect x="264.5" y="265.5" width="3" height="8" fill="#fff" stroke="#008000"/>
<line x1="267.5" y1="257" x2="267.5" y2="270" stroke="#8b0000"/>
<rect x="266" y="260" width="3" height="8" fill="#8b0000"/>
<line x1="270.5" y1="264" x2="270.5" y2="267" stroke="#008000"/>
<rect x="269.5" y="266.5" width="3" height="2" fill="#fff" stroke="#008000"/>
<line x1="273.5" y1="257" x2="273.5" y2="267" stroke="#008000"/>
<rect x="272.5" y="260.5" width="3" height="7" fill="#fff" stroke="#008000"/>
<rect x="274" y="261" width="3" height="8" fill="#8b0000"/>
<line x1="278.5" y1="263" x2="278.5" y2="270" stroke="#8b0000"/>
<rect x="277" y="265" width="3" height="5" fill="#8b0000"/>
<line x1="280.5" y1="258" x2="280.5" y2="270" stroke="#008000"/>
<rect x="279.5" y="266.5" width="3" height="4" fill="#fff" stroke="#008000"/>
<line x1="283.5" y1="272" x2="283.5" y2="276" stroke="#008000"/>
<rect x="282.5" y="273.5" width="3" height="2" fill="#fff" stroke="#008000"/>
<rect x="285" y="271" width="3" height="4" fill="#8b0000"/>
<rect x="287" y="274" width="3" height="3" fill="#8b0000"/>
<line x1="291.5" y1="270" x2="291.5" y2="283" stroke="#8b0000"/>
<rect x="290" y="272" width="3" height="4" fill="#8b0000"/>
<line x1="293.5" y1="276" x2="293.5" y2="285" stroke="#8b0000"/>
<rect x="292" y="278" width="3" height="2" fill="#8b0000"/>
<line x1="296.5" y1="272" x2="296.5" y2="279" stroke="#8b0000"/>
<rect x="295" y="275" width="3" height="4" fill="#8b0000"/>
<line x1="299.5" y1="285" x2="299.5" y2="289" stroke="#8b0000"/>
<rect x="298" y="285" width="3" height="3" fill="#8b0000"/>
<line x1="301.5" y1="275" x2="301.5" y2="291" stroke="#008000"/>
<rect x="300.5" y="277.5" width="3" height="14" fill="#fff" stroke="#008000"/>
<line x1="304.5" y1="265" x2="304.5" y2="275" stroke="#008000"/>
<rect x="303.5" y="268.5" width="3" height="6" fill="#fff" stroke="#008000"/>
<rect x="306" y="274" width="3" height="5" fill="#8b0000"/>
<line x1="309.5" y1="271" x2="309.5" y2="282" stroke="#8b0000"/>
<rect x="308" y="271" width="3" height="8" fill="#8b0000"/>
<line x1="312.5" y1="273" x2="312.5" y2="275" stroke="#8b0000"/>
<rect x="311" y="275" width="3" height="2" fill="#8b0000"/>
<rect x="313.5" y="271.5" width="3" height="8" fill="#fff" stroke="#008000"/>
<rect x="316.5" y="264.5" width="3" height="8" fill="#fff" stroke="#008000"/>
<rect x="319.5" y="259.5" width="3" height="3" fill="#fff" stroke="#008000"/>
<line x1="322.5" y1="259" x2="322.5" y2="265" stroke="#8b0000"/>
<rect x="321" y="259" width="3" height="4" fill="#8b0000"/>
<line x1="325.5" y1="254" x2="325.5" y2="272" stroke="#8b0000"/>
<rect x="324" y="254" width="3" height="15" fill="#8b0000"/>
<line x1="327.5" y1="275" x2="327.5" y2="282" stroke="#8b0000"/>
<rect x="326" y="275" width="3" height="2" fill="#8b0000"/>
<rect x="329.5" y="259.5" width="3" height="5" fill="#fff" stroke="#008000"/>
<line x1="333.5" y1="254" x2="333.5" y2="260" stroke="#008000"/>
<rect x="332.5" y="256.5" width="3" height="4" fill="#fff" stroke="#008000"/>
<line x1="335.5" y1="259" x2="335.5" y2="270" stroke="#8b0000"/>
<rect x="334" y="261" width="3" height="9" fill="#8b0000"/>
<line x1="338.5" y1="272" x2="338.5" y2="279" stroke="#8b0000"/>
<rect x="337" y="273" width="3" height="6" fill="#8b0000"/>
<line x1="340.5" y1="289" x2="340.5" y2="293" stroke="#8b0000"/>
<rect x="339" y="290" width="3" height="2" fill="#8b0000"/>
<rect x="342" y="282" width="3" height="7" fill="#8b0000"/>
<rect x="345" y="289" width="3" height="2" fill="#8b0000"/>
<line x1="348.5" y1="287" x2="348.5" y2="293" stroke="#8b0000"/>
<rect x="347" y="289" width="3" height="4" fill="#8b0000"/>
<line x1="351.5" y1="279" x2="351.5" y2="290" stroke="#8b0000"/>
<rect x="350" y="279" width="3" height="9" fill="#8b0000"/>
<rect x="352" y="296" width="3" height="5" fill="#8b0000"/>
<line x1="356.5" y1="293" x2="356.5" y2="301" stroke="#8b0000"/>
<rect x="355" y="296" width="3" height="5" fill="#8b0000"/>
<line x1="359.5" y1="300" x2="359.5" y2="306" stroke="#008000"/>
<rect x="358.5" y="303.5" width="3" height="3" fill="#fff" stroke="#008000"/>
<line x1="361.5" y1="296" x2="361.5" y2="302" stroke="#008000"/>
<rect x="360.5" y="296.5" width="3" height="5" fill="#fff" stroke="#008000"/>
<line x1="364.5" y1="292" x2="364.5" y2="298" stroke="#008000"/>
<rect x="363.5" y="294.5" width="3" height="4" fill="#fff" stroke="#008000"/>
<line x1="366.5" y1="292" x2="366.5" y2="296" stroke="#8b0000"/>
<rect x="365" y="292" width="3" height="3" fill="#8b0000"/>
<line x1="369.5" y1="291" x2="369.5" y2="299" stroke="#8b0000"/>
<rect x="368" y="293" width="3" height="6" fill="#8b0000"/>
<rect x="371" y="303" width="3" height="4" fill="#8b0000"/>
<line x1="374.5" y1="305" x2="374.5" y2="309" stroke="#8b0000"/>
<rect x="373" y="307" width="3" height="2" fill="#8b0000"/>
<line x1="377.5" y1="308" x2="377.5" y2="316" stroke="#008000"/>
<rect x="376.5" y="308.5" width="3" height="2" fill="#fff" stroke="#008000"/>
<line x1="379.5" y1="304" x2="379.5" y2="307" stroke="#8b0000"/>
<rect x="378" y="306" width="3" height="2" fill="#8b0000"/>
<line x1="382.5" y1="306" x2="382.5" y2="317" stroke="#8b0000"/>
<rect x="381" y="306" width="3" height="9" fill="#8b0000"/>
<rect x="384" y="315" width="3" height="8" fill="#8b0000"/>
<rect x="386" y="326" width="3" height="2" fill="#8b0000"/>
<rect x="389.5" y="319.5" width="3" height="8" fill="#fff" stroke="#008000"/>
<rect x="391" y="316" width="3" height="2" fill="#8b0000"/>
<line x1="395.5" y1="302" x2="395.5" y2="321" stroke="#008000"/>
<rect x="394.5" y="313.5" width="3" height="8" fill="#fff" stroke="#008000"/>
<line x1="398.5" y1="309" x2="398.5" y2="315" stroke="#008000"/>
<rect x="397.5" y="309.5" width="3" height="4" fill="#fff" stroke="#008000"/>
<line x1="400.5" y1="306" x2="400.5" y2="316" stroke="#008000"/>
<rect x="399.5" y="306.5" width="3" height="7" fill="#fff" stroke="#008000"/>
<line x1="403.5" y1="308" x2="403.5" y2="316" stroke="#008000"/>
<rect x="402.5" y="308.5" width="3" height="6" fill="#fff" stroke="#008000"/>
<rect x="404" y="306" width="3" height="4" fill="#8b0000"/>
<rect x="407" y="313" width="3" height="6" fill="#8b0000"/>
<line x1="411.5" y1="301" x2="411.5" y2="312" stroke="#8b0000"/>
<rect x="410" y="304" width="3" height="8" fill="#8b0000"/>
<rect x="412" y="313" width="3" height="10" fill="#8b0000"/>
<line x1="416.5" y1="324" x2="416.5" y2="328" stroke="#008000"/>
<rect x="415.5" y="326.5" width="3" height="2" fill="#fff" stroke="#008000"/>
<line x1="418.5" y1="315" x2="418.5" y2="328" stroke="#8b0000"/>
<rect x="417" y="317" width="3" height="11" fill="#8b0000"/>
<line x1="421.5" y1="324" x2="421.5" y2="336" stroke="#8b0000"/>
<rect x="420" y="325" width="3" height="8" fill="#8b0000"/>
<line x1="424.5" y1="331" x2="424.5" y2="348" stroke="#8b0000"/>
<rect x="423" y="333" width="3" height="15" fill="#8b0000"/>
<line x1="426.5" y1="342" x2="426.5" y2="352" stroke="#8b0000"/>
<rect x="425" y="342" width="3" height="7" fill="#8b0000"/>
<rect x="428.5" y="356.5" width="3" height="2" fill="#fff" stroke="#008000"/>
<line x1="431.5" y1="353" x2="431.5" y2="357" stroke="#8b0000"/>
<rect x="430" y="353" width="3" height="2" fill="#8b0000"/>
<line x1="434.5" y1="355" x2="434.5" y2="370" stroke="#8b0000"/>
<rect x="433" y="360" width="3" height="9" fill="#8b0000"/>
<line x1="437.5" y1="359" x2="437.5" y2="379" stroke="#8b0000"/>
<rect x="436" y="359" width="3" height="14" fill="#8b0000"/>
<line x1="439.5" y1="371" x2="439.5" y2="378" stroke="#008000"/>
<rect x="438.5" y="371.5" width="3" height="4" fill="#fff" stroke="#008000"/>
<line x1="442.5" y1="362" x2="442.5" y2="374" stroke="#008000"/>
<rect x="441.5" y="364.5" width="3" height="8" fill="#fff" stroke="#008000"/>
<line x1="444.5" y1="366" x2="444.5" y2="376" stroke="#008000"/>
<rect x="443.5" y="366.5" width="3" height="9" fill="#fff" stroke="#008000"/>
<rect x="446.5" y="345.5" width="3" height="12" fill="#fff" stroke="#008000"/>
<rect x="449" y="349" width="3" height="4" fill="#8b0000"/>
<rect x="451" y="353" width="3" height="4" fill="#8b0000"/>
<rect x="454" y="355" width="3" height="5" fill="#8b0000"/>
<line x1="457.5" y1="361" x2="457.5" y2="383" stroke="#8b0000"/>
<rect x="456" y="361" width="3" height="13" fill="#8b0000"/>
<rect x="459.5" y="371.5" width="3" height="7" fill="#fff" stroke="#008000"/>
<line x1="463.5" y1="367" x2="463.5" y2="378" stroke="#8b0000"/>
<rect x="462" y="369" width="3" height="9" fill="#8b0000"/>
<rect x="464" y="372" width="3" height="16" fill="#8b0000"/>
<line x1="468.5" y1="386" x2="468.5" y2="392" stroke="#8b0000"/>
<rect x="467" y="389" width="3" height="2" fill="#8b0000"/>
<line x1="470.5" y1="399" x2="470.5" y2="415" stroke="#8b0000"/>
<rect x="469" y="402" width="3" height="12" fill="#8b0000"/>
<rect x="472" y="409" width="3" height="19" fill="#8b0000"/>
<rect x="475" y="433" width="3" height="15" fill="#8b0000"/>
<line x1="478.5" y1="442" x2="478.5" y2="446" stroke="#008000"/>
<rect x="477.5" y="442.5" width="3" height="3" fill="#fff" stroke="#008000"/>
<line x1="481.5" y1="439" x2="481.5" y2="441" stroke="#8b0000"/>
<rect x="480" y="440" width="3" height="2" fill="#8b0000"/>
<rect x="482.5" y="438.5" width="3" height="5" fill="#fff" stroke="#008000"/>
<rect x="485.5" y="430.5" width="3" height="11" fill="#fff" stroke="#008000"/>
<line x1="489.5" y1="426" x2="489.5" y2="429" stroke="#008000"/>
<rect x="488.5" y="428.5" width="3" height="2" fill="#fff" stroke="#008000"/>
<line x1="491.5" y1="425" x2="491.5" y2="438" stroke="#8b0000"/>
<rect x="490" y="427" width="3" height="11" fill="#8b0000"/>
<line x1="494.5" y1="419" x2="494.5" y2="441" stroke="#008000"/>
<rect x="493.5" y="420.5" width="3" height="21" fill="#fff" stroke="#008000"/>
<line x1="496.5" y1="417" x2="496.5" y2="442" stroke="#8b0000"/>
<rect x="495" y="424" width="3" height="18" fill="#8b0000"/>
<rect x="498" y="440" width="3" height="14" fill="#8b0000"/>
<line x1="502.5" y1="455" x2="502.5" y2="467" stroke="#8b0000"/>
<rect x="501" y="456" width="3" height="2" fill="#8b0000"/>
<line x1="504.5" y1="443" x2="504.5" y2="448" stroke="#008000"/>
<rect x="503.5" y="445.5" width="3" height="2" fill="#fff" stroke="#008000"/>
<rect x="506" y="448" width="3" height="2" fill="#8b0000"/>
<rect x="508" y="452" width="3" height="4" fill="#8b0000"/>
<line x1="512.5" y1="439" x2="512.5" y2="450" stroke="#008000"/>
<rect x="511.5" y="444.5" width="3" height="3" fill="#fff" stroke="#008000"/>
<rect x="514.5" y="439.5" width="3" height="15" fill="#fff" stroke="#008000"/>
<rect x="516.5" y="418.5" width="3" height="15" fill="#fff" stroke="#008000"/>
<rect x="519.5" y="415.5" width="3" height="9" fill="#fff" stroke="#008000"/>
<line x1="522.5" y1="413" x2="522.5" y2="419" stroke="#8b0000"/>
<rect x="521" y="415" width="3" height="4" fill="#8b0000"/>
<line x1="525.5" y1="410" x2="525.5" y2="436" stroke="#8b0000"/>
<rect x="524" y="410" width="3" height="24" fill="#8b0000"/>
<line x1="528.5" y1="432" x2="528.5" y2="446" stroke="#8b0000"/>
<rect x="527" y="433" width="3" height="13" fill="#8b0000"/>
<rect x="529.5" y="444.5" width="3" height="6" fill="#fff" stroke="#008000"/>
<line x1="533.5" y1="431" x2="533.5" y2="448" stroke="#008000"/>
<rect x="532.5" y="431.5" width="3" height="9" fill="#fff" stroke="#008000"/>
<rect x="534" y="437" width="3" height="10" fill="#8b0000"/>
<rect x="537" y="444" width="3" height="12" fill="#8b0000"/>
<line x1="541.5" y1="459" x2="541.5" y2="462" stroke="#8b0000"/>
<rect x="540" y="461" width="3" height="2" fill="#8b0000"/>
<rect x="542.5" y="458.5" width="3" height="12" fill="#fff" stroke="#008000"/>
<rect x="545.5" y="455.5" width="3" height="2" fill="#fff" stroke="#008000"/>
<rect x="547.5" y="446.5" width="3" height="2" fill="#fff" stroke="#008000"/>
<rect x="550" y="448" width="3" height="2" fill="#8b0000"/>
<line x1="554.5" y1="446" x2="554.5" y2="452" stroke="#008000"/>
<rect x="553.5" y="449.5" width="3" height="3" fill="#fff" stroke="#008000"/>
<rect x="555" y="441" width="3" height="18" fill="#8b0000"/>
<line x1="559.5" y1="459" x2="559.5" y2="467" stroke="#8b0000"/>
<rect x="558" y="459" width="3" height="5" fill="#8b0000"/>
<line x1="561.5" y1="468" x2="561.5" y2="477" stroke="#008000"/>
<rect x="560.5" y="468.5" width="3" height="2" fill="#fff" stroke="#008000"/>
<line x1="564.5" y1="437" x2="564.5" y2="458" stroke="#008000"/>
<rect x="563.5" y="437.5" width="3" height="19" fill="#fff" stroke="#008000"/>
<rect x="566" y="440" width="3" height="2" fill="#8b0000"/>
<rect x="568.5" y="446.5" width="3" height="3" fill="#fff" stroke="#008000"/>
<rect x="571" y="448" width="3" height="6" fill="#8b0000"/>
<line x1="574.5" y1="442" x2="574.5" y2="460" stroke="#8b0000"/>
<rect x="573" y="445" width="3" height="15" fill="#8b0000"/>
<line x1="577.5" y1="456" x2="577.5" y2="471" stroke="#8b0000"/>
<rect x="576" y="456" width="3" height="14" fill="#8b0000"/>
<rect x="579.5" y="469.5" width="3" height="2" fill="#fff" stroke="#008000"/>
<line x1="582.5" y1="448" x2="582.5" y2="462" stroke="#008000"/>
<rect x="581.5" y="448.5" width="3" height="12" fill="#fff" stroke="#008000"/>
<line x1="585.5" y1="449" x2="585.5" y2="454" stroke="#008000"/>
<rect x="584.5" y="449.5" width="3" height="4" fill="#fff" stroke="#008000"/>
<line x1="587.5" y1="441" x2="587.5" y2="444" stroke="#008000"/>
<rect x="586.5" y="442.5" width="3" height="2" fill="#fff" stroke="#008000"/>
<line x1="590.5" y1="444" x2="590.5" y2="450" stroke="#008000"/>
<rect x="589.5" y="447.5" width="3" height="3" fill="#fff" stroke="#008000"/>
<line x1="593.5" y1="449" x2="593.5" y2="454" stroke="#8b0000"/>
<rect x="592" y="449" width="3" height="3" fill="#8b0000"/>
<line x1="595.5" y1="434" x2="595.5" y2="440" stroke="#008000"/>
<rect x="594.5" y="434.5" width="3" height="5" fill="#fff" stroke="#008000"/>
<line x1="598.5" y1="438" x2="598.5" y2="443" stroke="#008000"/>
<rect x="597.5" y="440.5" width="3" height="3" fill="#fff" stroke="#008000"/>
<rect x="599" y="441" width="3" height="18" fill="#8b0000"/>
<line x1="603.5" y1="447" x2="603.5" y2="461" stroke="#8b0000"/>
<rect x="602" y="447" width="3" height="4" fill="#8b0000"/>
<line x1="606.5" y1="453" x2="606.5" y2="458" stroke="#8b0000"/>
<rect x="605" y="456" width="3" height="2" fill="#8b0000"/>
<line x1="608.5" y1="462" x2="608.5" y2="469" stroke="#008000"/>
<rect x="607.5" y="462.5" width="3" height="4" fill="#fff" stroke="#008000"/>
<line x1="611.5" y1="441" x2="611.5" y2="453" stroke="#008000"/>
<rect x="610.5" y="443.5" width="3" height="10" fill="#fff" stroke="#008000"/>
<rect x="612.5" y="437.5" width="3" height="5" fill="#fff" stroke="#008000"/>
<line x1="616.5" y1="438" x2="616.5" y2="446" stroke="#008000"/>
<rect x="615.5" y="438.5" width="3" height="6" fill="#fff" stroke="#008000"/>
<line x1="619.5" y1="429" x2="619.5" y2="432" stroke="#008000"/>
<rect x="618.5" y="432.5" width="3" height="2" fill="#fff" stroke="#008000"/>
<line x1="621.5" y1="431" x2="621.5" y2="449" stroke="#8b0000"/>
<rect x="620" y="434" width="3" height="15" fill="#8b0000"/>
<rect x="623" y="455" width="3" height="8" fill="#8b0000"/>
<rect x="625.5" y="458.5" width="3" height="2" fill="#fff" stroke="#008000"/>
<rect x="628.5" y="450.5" width="3" height="10" fill="#fff" stroke="#008000"/>
<rect x="631.5" y="456.5" width="3" height="2" fill="#fff" stroke="#008000"/>
<line x1="634.5" y1="441" x2="634.5" y2="459" stroke="#8b0000"/>
<rect x="633" y="446" width="3" height="10" fill="#8b0000"/>
<line x1="637.5" y1="457" x2="637.5" y2="463" stroke="#8b0000"/>
<rect x="636" y="457" width="3" height="4" fill="#8b0000"/>
<line x1="639.5" y1="471" x2="639.5" y2="480" stroke="#8b0000"/>
<rect x="638" y="471" width="3" height="7" fill="#8b0000"/>
<line x1="642.5" y1="474" x2="642.5" y2="477" stroke="#008000"/>
<rect x="641.5" y="474.5" width="3" height="2" fill="#fff" stroke="#008000"/>
<line x1="645.5" y1="473" x2="645.5" y2="480" stroke="#8b0000"/>
<rect x="644" y="473" width="3" height="5" fill="#8b0000"/>
<rect x="646" y="482" width="3" height="5" fill="#8b0000"/>
<line x1="650.5" y1="487" x2="650.5" y2="499" stroke="#8b0000"/>
<rect x="649" y="487" width="3" height="5" fill="#8b0000"/>
<line x1="652.5" y1="491" x2="652.5" y2="498" stroke="#8b0000"/>
<rect x="651" y="493" width="3" height="5" fill="#8b0000"/>
<rect x="654" y="500" width="3" height="7" fill="#8b0000"/>
<rect x="657" y="507" width="3" height="8" fill="#8b0000"/>
<rect x="659" y="504" width="3" height="6" fill="#8b0000"/>
<rect x="662.5" y="518.5" width="3" height="2" fill="#fff" stroke="#008000"/>
<line x1="665.5" y1="514" x2="665.5" y2="519" stroke="#008000"/>
<rect x="664.5" y="514.5" width="3" height="3" fill="#fff" stroke="#008000"/>
<line x1="668.5" y1="504" x2="668.5" y2="515" stroke="#008000"/>
<rect x="667.5" y="504.5" width="3" height="6" fill="#fff" stroke="#008000"/>
<rect x="670.5" y="497.5" width="3" height="4" fill="#fff" stroke="#008000"/>
<line x1="673.5" y1="496" x2="673.5" y2="511" stroke="#008000"/>
<rect x="672.5" y="496.5" width="3" height="13" fill="#fff" stroke="#008000"/>
<line x1="676.5" y1="488" x2="676.5" y2="498" stroke="#008000"/>
<rect x="675.5" y="490.5" width="3" height="8" fill="#fff" stroke="#008000"/>
<rect x="677.5" y="489.5" width="3" height="2" fill="#fff" stroke="#008000"/>
<rect x="680" y="482" width="3" height="4" fill="#8b0000"/>
<rect x="683.5" y="488.5" width="3" height="2" fill="#fff" stroke="#008000"/>
<line x1="686.5" y1="482" x2="686.5" y2="488" stroke="#8b0000"/>
<rect x="685" y="483" width="3" height="3" fill="#8b0000"/>
<line x1="689.5" y1="484" x2="689.5" y2="492" stroke="#8b0000"/>
<rect x="688" y="485" width="3" height="7" fill="#8b0000"/>
<line x1="691.5" y1="487" x2="691.5" y2="501" stroke="#8b0000"/>
<rect x="690" y="494" width="3" height="5" fill="#8b0000"/>
<line x1="694.5" y1="505" x2="694.5" y2="516" stroke="#8b0000"/>
<rect x="693" y="505" width="3" height="9" fill="#8b0000"/>
<rect x="696.5" y="516.5" width="3" height="2" fill="#fff" stroke="#008000"/>
<rect x="698" y="516" width="3" height="3" fill="#8b0000"/>
<rect x="701.5" y="519.5" width="3" height="2" fill="#fff" stroke="#008000"/>
<rect x="703" y="515" width="3" height="2" fill="#8b0000"/>
<line x1="707.5" y1="511" x2="707.5" y2="521" stroke="#008000"/>
<rect x="706.5" y="511.5" width="3" height="5" fill="#fff" stroke="#008000"/>
<rect x="709" y="506" width="3" height="2" fill="#8b0000"/>
<line x1="712.5" y1="505" x2="712.5" y2="513" stroke="#008000"/>
<rect x="711.5" y="505.5" width="3" height="7" fill="#fff" stroke="#008000"/>
<rect x="714.5" y="505.5" width="3" height="2" fill="#fff" stroke="#008000"/>
<line x1="717.5" y1="505" x2="717.5" y2="509" stroke="#8b0000"/>
<rect x="716" y="505" width="3" height="2" fill="#8b0000"/>
<line x1="720.5" y1="509" x2="720.5" y2="513" stroke="#8b0000"/>
<rect x="719" y="510" width="3" height="3" fill="#8b0000"/>
<line x1="723.5" y1="514" x2="723.5" y2="519" stroke="#008000"/>
<rect x="722.5" y="516.5" width="3" height="2" fill="#fff" stroke="#008000"/>
<rect x="724.5" y="507.5" width="3" height="3" fill="#fff" stroke="#008000"/>
<rect x="727.5" y="505.5" width="3" height="4" fill="#fff" stroke="#008000"/>
<line x1="730.5" y1="501" x2="730.5" y2="505" stroke="#8b0000"/>
<rect x="729" y="503" width="3" height="2" fill="#8b0000"/>
<line x1="733.5" y1="502" x2="733.5" y2="506" stroke="#008000"/>
<rect x="732.5" y="502.5" width="3" height="2" fill="#fff" stroke="#008000"/>
<line x1="736.5" y1="500" x2="736.5" y2="506" stroke="#008000"/>
<rect x="735.5" y="500.5" width="3" height="4" fill="#fff" stroke="#008000"/>
<line x1="738.5" y1="505" x2="738.5" y2="511" stroke="#008000"/>
<rect x="737.5" y="505.5" width="3" height="4" fill="#fff" stroke="#008000"/>
<line x1="741.5" y1="493" x2="741.5" y2="502" stroke="#008000"/>
<rect x="740.5" y="493.5" width="3" height="6" fill="#fff" stroke="#008000"/>
<line x1="743.5" y1="493" x2="743.5" y2="499" stroke="#008000"/>
<rect x="742.5" y="493.5" width="3" height="4" fill="#fff" stroke="#008000"/>
<line x1="746.5" y1="485" x2="746.5" y2="490" stroke="#8b0000"/>
<rect x="745" y="488" width="3" height="2" fill="#8b0000"/>
<line x1="749.5" y1="490" x2="749.5" y2="495" stroke="#008000"/>
<rect x="748.5" y="490.5" width="3" height="3" fill="#fff" stroke="#008000"/>
<line x1="751.5" y1="483" x2="751.5" y2="491" stroke="#008000"/>
<rect x="750.5" y="484.5" width="3" height="7" fill="#fff" stroke="#008000"/>
<line x1="754.5" y1="480" x2="754.5" y2="495" stroke="#008000"/>
<rect x="753.5" y="483.5" width="3" height="3" fill="#fff" stroke="#008000"/>
<line x1="756.5" y1="466" x2="756.5" y2="475" stroke="#008000"/>
<rect x="755.5" y="467.5" width="3" height="8" fill="#fff" stroke="#008000"/>
<line x1="759.5" y1="459" x2="759.5" y2="468" stroke="#008000"/>
<rect x="758.5" y="461.5" width="3" height="7" fill="#fff" stroke="#008000"/>
<line x1="762.5" y1="453" x2="762.5" y2="469" stroke="#008000"/>
<rect x="761.5" y="453.5" width="3" height="14" fill="#fff" stroke="#008000"/>
<rect x="763.5" y="453.5" width="3" height="4" fill="#fff" stroke="#008000"/>
<line x1="767.5" y1="444" x2="767.5" y2="451" stroke="#008000"/>
<rect x="766.5" y="444.5" width="3" height="5" fill="#fff" stroke="#008000"/>
<line x1="769.5" y1="443" x2="769.5" y2="447" stroke="#8b0000"/>
<rect x="768" y="445" width="3" height="2" fill="#8b0000"/>
<line x1="772.5" y1="439" x2="772.5" y2="450" stroke="#8b0000"/>
<rect x="771" y="442" width="3" height="8" fill="#8b0000"/>
<line x1="775.5" y1="445" x2="775.5" y2="452" stroke="#008000"/>
<rect x="774.5" y="446.5" width="3" height="6" fill="#fff" stroke="#008000"/>
<rect x="776.5" y="441.5" width="3" height="10" fill="#fff" stroke="#008000"/>
<rect x="779.5" y="440.5" width="3" height="3" fill="#fff" stroke="#008000"/>
<line x1="782.5" y1="439" x2="782.5" y2="445" stroke="#008000"/>
<rect x="781.5" y="440.5" width="3" height="3" fill="#fff" stroke="#008000"/>
<line x1="785.5" y1="437" x2="785.5" y2="444" stroke="#008000"/>
<rect x="784.5" y="437.5" width="3" height="5" fill="#fff" stroke="#008000"/>
<rect x="787" y="432" width="3" height="2" fill="#8b0000"/>
<line x1="790.5" y1="427" x2="790.5" y2="438" stroke="#8b0000"/>
<rect x="789" y="428" width="3" height="10" fill="#8b0000"/>
<line x1="793.5" y1="433" x2="793.5" y2="441" stroke="#8b0000"/>
<rect x="792" y="440" width="3" height="2" fill="#8b0000"/>
<rect x="794.5" y="440.5" width="3" height="5" fill="#fff" stroke="#008000"/>
<line x1="798.5" y1="438" x2="798.5" y2="442" stroke="#8b0000"/>
<rect x="797" y="438" width="3" height="2" fill="#8b0000"/>
<line x1="801.5" y1="440" x2="801.5" y2="443" stroke="#8b0000"/>
<rect x="800" y="440" width="3" height="2" fill="#8b0000"/>
<line x1="803.5" y1="439" x2="803.5" y2="448" stroke="#008000"/>
<rect x="802.5" y="441.5" width="3" height="6" fill="#fff" stroke="#008000"/>
<rect x="805.5" y="436.5" width="3" height="9" fill="#fff" stroke="#008000"/>
<rect x="807.5" y="427.5" width="3" height="5" fill="#fff" stroke="#008000"/>
<line x1="811.5" y1="422" x2="811.5" y2="434" stroke="#8b0000"/>
<rect x="810" y="428" width="3" height="6" fill="#8b0000"/>
<line x1="814.5" y1="430" x2="814.5" y2="443" stroke="#8b0000"/>
<rect x="813" y="430" width="3" height="10" fill="#8b0000"/>
<rect x="815" y="440" width="3" height="2" fill="#8b0000"/>
<line x1="819.5" y1="434" x2="819.5" y2="437" stroke="#008000"/>
<rect x="818.5" y="435.5" width="3" height="2" fill="#fff" stroke="#008000"/>
<rect x="820" y="436" width="3" height="5" fill="#8b0000"/>
<rect x="823.5" y="438.5" width="3" height="2" fill="#fff" stroke="#008000"/>
<line x1="827.5" y1="434" x2="827.5" y2="448" stroke="#008000"/>
<rect x="826.5" y="437.5" width="3" height="9" fill="#fff" stroke="#008000"/>
<rect x="828" y="442" width="3" height="2" fill="#8b0000"/>
<rect x="831" y="436" width="3" height="4" fill="#8b0000"/>
<line x1="834.5" y1="436" x2="834.5" y2="454" stroke="#8b0000"/>
<rect x="833" y="439" width="3" height="15" fill="#8b0000"/>
<line x1="837.5" y1="453" x2="837.5" y2="456" stroke="#8b0000"/>
<rect x="836" y="455" width="3" height="2" fill="#8b0000"/>
<rect x="839.5" y="450.5" width="3" height="2" fill="#fff" stroke="#008000"/>
<line x1="842.5" y1="446" x2="842.5" y2="453" stroke="#008000"/>
<rect x="841.5" y="448.5" width="3" height="5" fill="#fff" stroke="#008000"/>
<rect x="844.5" y="436.5" width="3" height="6" fill="#fff" stroke="#008000"/>
<rect x="846.5" y="439.5" width="3" height="2" fill="#fff" stroke="#008000"/>
<rect x="849.5" y="440.5" width="3" height="2" fill="#fff" stroke="#008000"/>
<rect x="852.5" y="437.5" width="3" height="5" fill="#fff" stroke="#008000"/>
<line x1="855.5" y1="426" x2="855.5" y2="432" stroke="#008000"/>
<rect x="854.5" y="427.5" width="3" height="5" fill="#fff" stroke="#008000"/>
<rect x="857" y="432" width="3" height="5" fill="#8b0000"/>
<line x1="860.5" y1="429" x2="860.5" y2="434" stroke="#8b0000"/>
<rect x="859" y="431" width="3" height="3" fill="#8b0000"/>
<rect x="862" y="434" width="3" height="4" fill="#8b0000"/>
<line x1="866.5" y1="432" x2="866.5" y2="445" stroke="#8b0000"/>
<rect x="865" y="434" width="3" height="9" fill="#8b0000"/>
<rect x="867.5" y="445.5" width="3" height="2" fill="#fff" stroke="#008000"/>
<rect x="870.5" y="439.5" width="3" height="2" fill="#fff" stroke="#008000"/>
<line x1="873.5" y1="446" x2="873.5" y2="451" stroke="#8b0000"/>
<rect x="872" y="447" width="3" height="4" fill="#8b0000"/>
<line x1="876.5" y1="450" x2="876.5" y2="456" stroke="#8b0000"/>
<rect x="875" y="452" width="3" height="2" fill="#8b0000"/>
<rect x="878" y="452" width="3" height="2" fill="#8b0000"/>
<rect x="880" y="453" width="3" height="4" fill="#8b0000"/>
<line x1="884.5" y1="453" x2="884.5" y2="462" stroke="#8b0000"/>
<rect x="883" y="456" width="3" height="6" fill="#8b0000"/>
<rect x="885" y="465" width="3" height="2" fill="#8b0000"/>
<line x1="889.5" y1="464" x2="889.5" y2="470" stroke="#8b0000"/>
<rect x="888" y="464" width="3" height="4" fill="#8b0000"/>
<line x1="892.5" y1="466" x2="892.5" y2="473" stroke="#008000"/>
<rect x="891.5" y="468.5" width="3" height="2" fill="#fff" stroke="#008000"/>
<rect x="893" y="468" width="3" height="2" fill="#8b0000"/>
<line x1="897.5" y1="459" x2="897.5" y2="473" stroke="#8b0000"/>
<rect x="896" y="469" width="3" height="3" fill="#8b0000"/>
<line x1="899.5" y1="468" x2="899.5" y2="476" stroke="#8b0000"/>
<rect x="898" y="470" width="3" height="6" fill="#8b0000"/>
<line x1="902.5" y1="472" x2="902.5" y2="479" stroke="#008000"/>
<rect x="901.5" y="474.5" width="3" height="5" fill="#fff" stroke="#008000"/>
<line x1="905.5" y1="469" x2="905.5" y2="472" stroke="#8b0000"/>
<rect x="904" y="469" width="3" height="2" fill="#8b0000"/>
<rect x="906" y="464" width="3" height="2" fill="#8b0000"/>
<line x1="910.5" y1="461" x2="910.5" y2="463" stroke="#8b0000"/>
<rect x="909" y="463" width="3" height="2" fill="#8b0000"/>
<line x1="912.5" y1="457" x2="912.5" y2="460" stroke="#008000"/>
<rect x="911.5" y="457.5" width="3" height="2" fill="#fff" stroke="#008000"/>
<line x1="915.5" y1="458" x2="915.5" y2="464" stroke="#008000"/>
<rect x="914.5" y="458.5" width="3" height="4" fill="#fff" stroke="#008000"/>
<line x1="918.5" y1="451" x2="918.5" y2="459" stroke="#008000"/>
<rect x="917.5" y="453.5" width="3" height="3" fill="#fff" stroke="#008000"/>
<rect x="919.5" y="453.5" width="3" height="6" fill="#fff" stroke="#008000"/>
<rect x="922" y="453" width="3" height="2" fill="#8b0000"/>
<rect x="924.5" y="450.5" width="3" height="2" fill="#fff" stroke="#008000"/>
<line x1="928.5" y1="451" x2="928.5" y2="467" stroke="#8b0000"/>
<rect x="927" y="451" width="3" height="11" fill="#8b0000"/>
<line x1="931.5" y1="456" x2="931.5" y2="466" stroke="#8b0000"/>
<rect x="930" y="456" width="3" height="8" fill="#8b0000"/>
<line x1="933.5" y1="465" x2="933.5" y2="469" stroke="#008000"/>
<rect x="932.5" y="465.5" width="3" height="2" fill="#fff" stroke="#008000"/>
<line x1="936.5" y1="467" x2="936.5" y2="473" stroke="#8b0000"/>
<rect x="935" y="467" width="3" height="5" fill="#8b0000"/>
<line x1="938.5" y1="465" x2="938.5" y2="476" stroke="#8b0000"/>
<rect x="937" y="468" width="3" height="5" fill="#8b0000"/>
<rect x="940" y="472" width="3" height="7" fill="#8b0000"/>
<rect x="943" y="482" width="3" height="9" fill="#8b0000"/>
<line x1="946.5" y1="486" x2="946.5" y2="489" stroke="#8b0000"/>
<rect x="945" y="489" width="3" height="2" fill="#8b0000"/>
<line x1="949.5" y1="489" x2="949.5" y2="495" stroke="#8b0000"/>
<rect x="948" y="491" width="3" height="4" fill="#8b0000"/>
<rect x="950" y="496" width="3" height="2" fill="#8b0000"/>
<line x1="954.5" y1="489" x2="954.5" y2="492" stroke="#8b0000"/>
<rect x="953" y="492" width="3" height="2" fill="#8b0000"/>
<rect x="956.5" y="488.5" width="3" height="2" fill="#fff" stroke="#008000"/>
<line x1="959.5" y1="488" x2="959.5" y2="494" stroke="#8b0000"/>
<rect x="958" y="491" width="3" height="3" fill="#8b0000"/>
<rect x="961.5" y="491.5" width="3" height="2" fill="#fff" stroke="#008000"/>
<line x1="964.5" y1="489" x2="964.5" y2="493" stroke="#8b0000"/>
<rect x="963" y="490" width="3" height="2" fill="#8b0000"/>
<rect x="966.5" y="489.5" width="3" height="4" fill="#fff" stroke="#008000"/>
<line x1="970.5" y1="494" x2="970.5" y2="504" stroke="#8b0000"/>
<rect x="969" y="494" width="3" height="8" fill="#8b0000"/>
<line x1="972.5" y1="485" x2="972.5" y2="505" stroke="#8b0000"/>
<rect x="971" y="494" width="3" height="9" fill="#8b0000"/>
<line x1="975.5" y1="500" x2="975.5" y2="510" stroke="#8b0000"/>
<rect x="974" y="500" width="3" height="2" fill="#8b0000"/>
<line x1="977.5" y1="504" x2="977.5" y2="507" stroke="#008000"/>
<rect x="976.5" y="506.5" width="3" height="2" fill="#fff" stroke="#008000"/>
<line x1="980.5" y1="505" x2="980.5" y2="511" stroke="#008000"/>
<rect x="979.5" y="505.5" width="3" height="5" fill="#fff" stroke="#008000"/>
<rect x="982" y="500" width="3" height="2" fill="#8b0000"/>
<rect x="984" y="502" width="3" height="2" fill="#8b0000"/>
<line x1="988.5" y1="502" x2="988.5" y2="504" stroke="#008000"/>
<rect x="987.5" y="504.5" width="3" height="2" fill="#fff" stroke="#008000"/>
<rect x="989.5" y="505.5" width="3" height="2" fill="#fff" stroke="#008000"/>
<rect x="992.5" y="497.5" width="3" height="7" fill="#fff" stroke="#008000"/>
<rect x="995.5" y="490.5" width="3" height="3" fill="#fff" stroke="#008000"/>
<line x1="998.5" y1="486" x2="998.5" y2="494" stroke="#008000"/>
<rect x="997.5" y="486.5" width="3" height="6" fill="#fff" stroke="#008000"/>
<line x1="1001.5" y1="483" x2="1001.5" y2="486" stroke="#008000"/>
<rect x="1000.5" y="485.5" width="3" height="2" fill="#fff" stroke="#008000"/>
<rect x="1002" y="494" width="3" height="5" fill="#8b0000"/>
<line x1="1006.5" y1="493" x2="1006.5" y2="500" stroke="#8b0000"/>
<rect x="1005" y="495" width="3" height="5" fill="#8b0000"/>
<line x1="1009.5" y1="499" x2="1009.5" y2="506" stroke="#8b0000"/>
<rect x="1008" y="499" width="3" height="5" fill="#8b0000"/>
<rect x="1010.5" y="501.5" width="3" height="6" fill="#fff" stroke="#008000"/>
<line x1="1014.5" y1="489" x2="1014.5" y2="497" stroke="#008000"/>
<rect x="1013.5" y="490.5" width="3" height="7" fill="#fff" stroke="#008000"/>
<line x1="1016.5" y1="488" x2="1016.5" y2="497" stroke="#008000"/>
<rect x="1015.5" y="490.5" width="3" height="5" fill="#fff" stroke="#008000"/>
<rect x="1018.5" y="484.5" width="3" height="5" fill="#fff" stroke="#008000"/>
<rect x="1021.5" y="482.5" width="3" height="5" fill="#fff" stroke="#008000"/>
<line x1="1024.5" y1="481" x2="1024.5" y2="493" stroke="#8b0000"/>
<rect x="1023" y="481" width="3" height="9" fill="#8b0000"/>
<line x1="1027.5" y1="487" x2="1027.5" y2="499" stroke="#8b0000"/>
<rect x="1026" y="487" width="3" height="10" fill="#8b0000"/>
<line x1="1029.5" y1="493" x2="1029.5" y2="501" stroke="#8b0000"/>
<rect x="1028" y="493" width="3" height="6" fill="#8b0000"/>
<rect x="1031.5" y="502.5" width="3" height="2" fill="#fff" stroke="#008000"/>
<line x1="1035.5" y1="496" x2="1035.5" y2="502" stroke="#8b0000"/>
<rect x="1034" y="499" width="3" height="3" fill="#8b0000"/>
<rect x="1036" y="496" width="3" height="5" fill="#8b0000"/>
<line x1="1040.5" y1="504" x2="1040.5" y2="509" stroke="#8b0000"/>
<rect x="1039" y="504" width="3" height="2" fill="#8b0000"/>
<line x1="1042.5" y1="503" x2="1042.5" y2="510" stroke="#8b0000"/>
<rect x="1041" y="503" width="3" height="2" fill="#8b0000"/>
<line x1="1045.5" y1="501" x2="1045.5" y2="509" stroke="#008000"/>
<rect x="1044.5" y="501.5" width="3" height="5" fill="#fff" stroke="#008000"/>
<line x1="1048.5" y1="503" x2="1048.5" y2="510" stroke="#8b0000"/>
<rect x="1047" y="503" width="3" height="2" fill="#8b0000"/>
<line x1="1050.5" y1="497" x2="1050.5" y2="508" stroke="#8b0000"/>
<rect x="1049" y="502" width="3" height="6" fill="#8b0000"/>
<line x1="1053.5" y1="507" x2="1053.5" y2="514" stroke="#8b0000"/>
<rect x="1052" y="507" width="3" height="4" fill="#8b0000"/>
<line x1="1055.5" y1="510" x2="1055.5" y2="513" stroke="#8b0000"/>
<rect x="1054" y="512" width="3" height="2" fill="#8b0000"/>
<rect x="1057" y="513" width="3" height="3" fill="#8b0000"/>
<line x1="1061.5" y1="516" x2="1061.5" y2="520" stroke="#8b0000"/>
<rect x="1060" y="517" width="3" height="3" fill="#8b0000"/>
<line x1="1063.5" y1="516" x2="1063.5" y2="519" stroke="#8b0000"/>
<rect x="1062" y="518" width="3" height="2" fill="#8b0000"/>
<line x1="1066.5" y1="510" x2="1066.5" y2="517" stroke="#008000"/>
<rect x="1065.5" y="510.5" width="3" height="5" fill="#fff" stroke="#008000"/>
<rect x="1067.5" y="512.5" width="3" height="4" fill="#fff" stroke="#008000"/>
<line x1="1071.5" y1="517" x2="1071.5" y2="521" stroke="#8b0000"/>
<rect x="1070" y="517" width="3" height="2" fill="#8b0000"/>
<rect x="1073" y="515" width="3" height="4" fill="#8b0000"/>
<rect x="1075" y="514" width="3" height="5" fill="#8b0000"/>
<line x1="1079.5" y1="517" x2="1079.5" y2="520" stroke="#008000"/>
<rect x="1078.5" y="519.5" width="3" height="2" fill="#fff" stroke="#008000"/>
<line x1="1081.5" y1="514" x2="1081.5" y2="521" stroke="#008000"/>
<rect x="1080.5" y="516.5" width="3" height="3" fill="#fff" stroke="#008000"/>
<line x1="1084.5" y1="512" x2="1084.5" y2="517" stroke="#8b0000"/>
<rect x="1083" y="512" width="3" height="3" fill="#8b0000"/>
<rect x="1086" y="514" width="3" height="3" fill="#8b0000"/>
<line x1="1089.5" y1="518" x2="1089.5" y2="522" stroke="#8b0000"/>
<rect x="1088" y="519" width="3" height="2" fill="#8b0000"/>
<rect x="1091" y="519" width="3" height="2" fill="#8b0000"/>
<line x1="1094.5" y1="521" x2="1094.5" y2="527" stroke="#008000"/>
<rect x="1093.5" y="521.5" width="3" height="3" fill="#fff" stroke="#008000"/>
<rect x="1096.5" y="520.5" width="3" height="2" fill="#fff" stroke="#008000"/>
<rect x="1099.5" y="515.5" width="3" height="4" fill="#fff" stroke="#008000"/>
<line x1="1102.5" y1="513" x2="1102.5" y2="517" stroke="#008000"/>
<rect x="1101.5" y="513.5" width="3" height="2" fill="#fff" stroke="#008000"/>
<line x1="1105.5" y1="513" x2="1105.5" y2="522" stroke="#8b0000"/>
<rect x="1104" y="513" width="3" height="6" fill="#8b0000"/>
<line x1="1107.5" y1="520" x2="1107.5" y2="529" stroke="#8b0000"/>
<rect x="1106" y="520" width="3" height="8" fill="#8b0000"/>
<rect x="1109" y="526" width="3" height="5" fill="#8b0000"/>
<line x1="1113.5" y1="530" x2="1113.5" y2="537" stroke="#8b0000"/>
<rect x="1112" y="530" width="3" height="5" fill="#8b0000"/>
<line x1="1115.5" y1="533" x2="1115.5" y2="539" stroke="#008000"/>
<rect x="1114.5" y="535.5" width="3" height="4" fill="#fff" stroke="#008000"/>
<line x1="1118.5" y1="530" x2="1118.5" y2="533" stroke="#008000"/>
<rect x="1117.5" y="531.5" width="3" height="2" fill="#fff" stroke="#008000"/>
<line x1="1120.5" y1="527" x2="1120.5" y2="533" stroke="#8b0000"/>
<rect x="1119" y="529" width="3" height="3" fill="#8b0000"/>
<line x1="1123.5" y1="530" x2="1123.5" y2="534" stroke="#8b0000"/>
<rect x="1122" y="533" width="3" height="2" fill="#8b0000"/>
<line x1="1126.5" y1="535" x2="1126.5" y2="538" stroke="#008000"/>
<rect x="1125.5" y="536.5" width="3" height="2" fill="#fff" stroke="#008000"/>
<line x1="1128.5" y1="531" x2="1128.5" y2="534" stroke="#008000"/>
<rect x="1127.5" y="533.5" width="3" height="2" fill="#fff" stroke="#008000"/>
<line x1="1131.5" y1="533" x2="1131.5" y2="536" stroke="#008000"/>
<rect x="1130.5" y="536.5" width="3" height="2" fill="#fff" stroke="#008000"/>
<rect x="1132.5" y="532.5" width="3" height="2" fill="#fff" stroke="#008000"/>
<rect x="1135.5" y="532.5" width="3" height="2" fill="#fff" stroke="#008000"/>
<line x1="1139.5" y1="525" x2="1139.5" y2="530" stroke="#8b0000"/>
<rect x="1138" y="527" width="3" height="2" fill="#8b0000"/>
<line x1="1141.5" y1="528" x2="1141.5" y2="530" stroke="#008000"/>
<rect x="1140.5" y="530.5" width="3" height="2" fill="#fff" stroke="#008000"/>
<rect x="1143.5" y="530.5" width="3" height="2" fill="#fff" stroke="#008000"/>
<rect x="1145.5" y="531.5" width="3" height="2" fill="#fff" stroke="#008000"/>
<line x1="1149.5" y1="519" x2="1149.5" y2="531" stroke="#008000"/>
<rect x="1148.5" y="530.5" width="3" height="2" fill="#fff" stroke="#008000"/>
<line x1="1152.5" y1="526" x2="1152.5" y2="531" stroke="#008000"/>
<rect x="1151.5" y="528.5" width="3" height="2" fill="#fff" stroke="#008000"/>
<line x1="1154.5" y1="531" x2="1154.5" y2="541" stroke="#8b0000"/>
<rect x="1153" y="533" width="3" height="2" fill="#8b0000"/>
<line x1="1157.5" y1="529" x2="1157.5" y2="533" stroke="#8b0000"/>
<rect x="1156" y="530" width="3" height="3" fill="#8b0000"/>
<line x1="1159.5" y1="531" x2="1159.5" y2="538" stroke="#8b0000"/>
<rect x="1158" y="533" width="3" height="2" fill="#8b0000"/>
<rect x="1161" y="533" width="3" height="2" fill="#8b0000"/>
<rect x="1164" y="533" width="3" height="4" fill="#8b0000"/>
<line x1="1167.5" y1="533" x2="1167.5" y2="538" stroke="#8b0000"/>
<rect x="1166" y="535" width="3" height="3" fill="#8b0000"/>
<rect x="1169" y="539" width="3" height="5" fill="#8b0000"/>
<rect x="1171.5" y="544.5" width="3" height="2" fill="#fff" stroke="#008000"/>
<rect x="1174.5" y="542.5" width="3" height="2" fill="#fff" stroke="#008000"/>
<line x1="1178.5" y1="542" x2="1178.5" y2="545" stroke="#008000"/>
<rect x="1177.5" y="542.5" width="3" height="2" fill="#fff" stroke="#008000"/>
<rect x="1179.5" y="539.5" width="3" height="2" fill="#fff" stroke="#008000"/>
<rect x="1182.5" y="534.5" width="3" height="5" fill="#fff" stroke="#008000"/>
<rect x="1184.5" y="536.5" width="3" height="2" fill="#fff" stroke="#008000"/>
<rect x="1187" y="532" width="3" height="2" fill="#8b0000"/>
<line x1="1191.5" y1="532" x2="1191.5" y2="535" stroke="#8b0000"/>
<rect x="1190" y="532" width="3" height="2" fill="#8b0000"/>
<rect x="1192" y="534" width="3" height="2" fill="#8b0000"/>
<line x1="1196.5" y1="533" x2="1196.5" y2="543" stroke="#8b0000"/>
<rect x="1195" y="535" width="3" height="8" fill="#8b0000"/>
<line x1="1198.5" y1="542" x2="1198.5" y2="546" stroke="#8b0000"/>
<rect x="1197" y="544" width="3" height="2" fill="#8b0000"/>
<line x1="1201.5" y1="545" x2="1201.5" y2="549" stroke="#008000"/>
<rect x="1200.5" y="547.5" width="3" height="2" fill="#fff" stroke="#008000"/>
<line x1="1204.5" y1="542" x2="1204.5" y2="545" stroke="#008000"/>
<rect x="1203.5" y="544.5" width="3" height="2" fill="#fff" stroke="#008000"/>
<rect x="1205" y="544" width="3" height="2" fill="#8b0000"/>
<line x1="1209.5" y1="542" x2="1209.5" y2="546" stroke="#008000"/>
<rect x="1208.5" y="544.5" width="3" height="2" fill="#fff" stroke="#008000"/>
<line x1="1211.5" y1="542" x2="1211.5" y2="545" stroke="#8b0000"/>
<rect x="1210" y="542" width="3" height="2" fill="#8b0000"/>
<line x1="1214.5" y1="542" x2="1214.5" y2="549" stroke="#8b0000"/>
<rect x="1213" y="543" width="3" height="3" fill="#8b0000"/>
<rect x="1215" y="546" width="3" height="4" fill="#8b0000"/>
<rect x="1218" y="550" width="3" height="3" fill="#8b0000"/>
<rect x="1221" y="552" width="3" height="2" fill="#8b0000"/>
<rect x="1223" y="552" width="3" height="4" fill="#8b0000"/>
<rect x="1226" y="555" width="3" height="2" fill="#8b0000"/>
<rect x="1228" y="556" width="3" height="2" fill="#8b0000"/>
<rect x="1231.5" y="554.5" width="3" height="2" fill="#fff" stroke="#008000"/>
<rect x="1234.5" y="555.5" width="3" height="3" fill="#fff" stroke="#008000"/>
<line x1="1237.5" y1="551" x2="1237.5" y2="554" stroke="#008000"/>
<rect x="1236.5" y="551.5" width="3" height="2" fill="#fff" stroke="#008000"/>
<rect x="1239.5" y="548.5" width="3" height="6" fill="#fff" stroke="#008000"/>
<line x1="1242.5" y1="544" x2="1242.5" y2="548" stroke="#008000"/>
<rect x="1241.5" y="546.5" width="3" height="2" fill="#fff" stroke="#008000"/>
<line x1="1245.5" y1="536" x2="1245.5" y2="550" stroke="#008000"/>
<rect x="1244.5" y="548.5" width="3" height="2" fill="#fff" stroke="#008000"/>
<line x1="1248.5" y1="543" x2="1248.5" y2="547" stroke="#8b0000"/>
<rect x="1247" y="546" width="3" height="2" fill="#8b0000"/>
<rect x="1249" y="548" width="3" height="2" fill="#8b0000"/>
<rect x="1252" y="548" width="3" height="2" fill="#8b0000"/>
<line x1="1255.5" y1="547" x2="1255.5" y2="551" stroke="#008000"/>
<rect x="1254.5" y="547.5" width="3" height="2" fill="#fff" stroke="#008000"/>
<rect x="1257" y="546" width="3" height="2" fill="#8b0000"/>
<rect x="1260" y="550" width="3" height="2" fill="#8b0000"/>
<rect x="1262" y="552" width="3" height="2" fill="#8b0000"/>
<line x1="1266.5" y1="547" x2="1266.5" y2="554" stroke="#008000"/>
<rect x="1265.5" y="547.5" width="3" height="5" fill="#fff" stroke="#008000"/>
<line x1="1268.5" y1="543" x2="1268.5" y2="547" stroke="#008000"/>
<rect x="1267.5" y="543.5" width="3" height="2" fill="#fff" stroke="#008000"/>
<line x1="1271.5" y1="545" x2="1271.5" y2="547" stroke="#8b0000"/>
<rect x="1270" y="546" width="3" height="2" fill="#8b0000"/>
<rect x="1273.5" y="545.5" width="3" height="2" fill="#fff" stroke="#008000"/>
<line x1="1276.5" y1="543" x2="1276.5" y2="547" stroke="#008000"/>
<rect x="1275.5" y="543.5" width="3" height="3" fill="#fff" stroke="#008000"/>
<line x1="1279.5" y1="540" x2="1279.5" y2="546" stroke="#008000"/>
<rect x="1278.5" y="540.5" width="3" height="3" fill="#fff" stroke="#008000"/>
<line x1="1281.5" y1="540" x2="1281.5" y2="542" stroke="#008000"/>
<rect x="1280.5" y="541.5" width="3" height="2" fill="#fff" stroke="#008000"/>
<rect x="1283.5" y="538.5" width="3" height="3" fill="#fff" stroke="#008000"/>
<rect x="1286.5" y="532.5" width="3" height="6" fill="#fff" stroke="#008000"/>
<rect x="1288.5" y="530.5" width="3" height="2" fill="#fff" stroke="#008000"/>
<rect x="1291.5" y="526.5" width="3" height="2" fill="#fff" stroke="#008000"/>
<line x1="1294.5" y1="519" x2="1294.5" y2="530" stroke="#8b0000"/>
<rect x="1293" y="526" width="3" height="2" fill="#8b0000"/>
<line x1="1297.5" y1="522" x2="1297.5" y2="525" stroke="#008000"/>
<rect x="1296.5" y="522.5" width="3" height="2" fill="#fff" stroke="#008000"/>
<line x1="1300.5" y1="516" x2="1300.5" y2="526" stroke="#008000"/>
<rect x="1299.5" y="516.5" width="3" height="9" fill="#fff" stroke="#008000"/>
<line x1="1302.5" y1="508" x2="1302.5" y2="517" stroke="#8b0000"/>
<rect x="1301" y="515" width="3" height="2" fill="#8b0000"/>
<rect x="1304" y="519" width="3" height="4" fill="#8b0000"/>
<line x1="1307.5" y1="522" x2="1307.5" y2="526" stroke="#008000"/>
<rect x="1306.5" y="522.5" width="3" height="2" fill="#fff" stroke="#008000"/>
<rect x="1309.5" y="521.5" width="3" height="2" fill="#fff" stroke="#008000"/>
<rect x="1312" y="519" width="3" height="2" fill="#8b0000"/>
<line x1="1315.5" y1="517" x2="1315.5" y2="519" stroke="#008000"/>
<rect x="1314.5" y="519.5" width="3" height="2" fill="#fff" stroke="#008000"/>
<rect x="1317.5" y="522.5" width="3" height="2" fill="#fff" stroke="#008000"/>
<line x1="1320.5" y1="514" x2="1320.5" y2="518" stroke="#008000"/>
<rect x="1319.5" y="516.5" width="3" height="2" fill="#fff" stroke="#008000"/>
<line x1="1323.5" y1="508" x2="1323.5" y2="519" stroke="#008000"/>
<rect x="1322.5" y="508.5" width="3" height="9" fill="#fff" stroke="#008000"/>
<rect x="1325" y="508" width="3" height="2" fill="#8b0000"/>
<line x1="1328.5" y1="505" x2="1328.5" y2="519" stroke="#008000"/>
<rect x="1327.5" y="507.5" width="3" height="3" fill="#fff" stroke="#008000"/>
<line x1="1331.5" y1="505" x2="1331.5" y2="507" stroke="#8b0000"/>
<rect x="1330" y="506" width="3" height="2" fill="#8b0000"/>
<line x1="1333.5" y1="505" x2="1333.5" y2="510" stroke="#008000"/>
<rect x="1332.5" y="506.5" width="3" height="2" fill="#fff" stroke="#008000"/>
</g>
<g shape-rendering="crispEdges"><line x1="237.5" y1="300" x2="237.5" y2="341" stroke="#008000"/><line x1="163.5" y1="197" x2="163.5" y2="205" stroke="#8b0000"/></g>
<polyline points="33.3,341.5 34.5,341.3 36.1,341.0 37.8,340.7 39.8,340.3 42.0,340.0 44.4,339.6 46.8,339.2 49.3,338.7 51.7,338.2 54.2,337.6 56.6,337.0 58.9,336.4 61.0,335.7 63.0,335.0 65.3,334.0 67.5,332.8 69.5,331.5 71.6,330.1 73.5,328.6 75.4,327.2 77.3,325.7 79.2,324.3 81.1,322.9 83.0,321.6 85.0,320.5 87.0,319.5 88.9,318.7 90.8,317.9 92.7,317.3 94.5,316.6 96.5,316.0 98.4,315.3 100.5,314.6 102.7,313.8 105.0,312.8 107.4,311.7 109.2,310.8 111.1,309.9 113.1,309.0 115.2,308.0 117.4,306.9 119.5,305.8 121.8,304.7 124.0,303.5 126.3,302.4 128.5,301.2 130.7,300.0 132.8,298.8 134.9,297.6 136.9,296.4 138.8,295.2 140.6,294.0 143.0,292.3 145.3,290.5 147.4,288.7 149.4,286.8 151.4,285.0 153.3,283.1 155.1,281.2 157.0,279.4 158.8,277.5 160.7,275.8 162.7,274.0 164.7,272.2 166.6,270.4 168.5,268.6 170.3,266.8 172.2,265.0 174.1,263.2 176.1,261.5 178.1,259.9 180.3,258.5 182.6,257.1 185.0,256.0 186.8,255.3 188.7,254.7 190.7,254.2 192.7,253.7 194.8,253.3 197.0,253.0 199.2,252.7 201.4,252.4 203.6,252.2 205.8,252.0 208.0,251.8 210.1,251.7 212.2,251.5 214.2,251.3 216.2,251.2 218.0,251.0 220.3,250.8 222.4,250.6 224.4,250.4 226.3,250.2 228.2,250.1 230.0,250.0 231.8,249.9 233.7,249.9 235.6,249.9 237.6,249.9 239.7,249.9 242.0,250.0 243.8,250.1 245.8,250.2 247.8,250.3 249.9,250.4 252.0,250.5 254.2,250.7 256.4,250.8 258.6,251.0 260.8,251.2 263.0,251.4 265.2,251.6 267.3,251.9 269.4,252.1 271.3,252.4 273.2,252.7 275.0,253.0 277.4,253.5 279.7,254.0 281.8,254.6 283.8,255.2 285.7,255.9 287.6,256.6 289.4,257.2 291.3,257.9 293.1,258.6 295.0,259.3 297.0,260.0 299.0,260.7 301.1,261.4 303.1,262.1 305.2,262.9 307.2,263.6 309.3,264.3 311.3,265.0 313.4,265.7 315.4,266.4 317.5,267.0 319.5,267.6 321.6,268.1 323.6,268.6 325.8,269.0 327.9,269.3 330.0,269.7 332.1,270.0 334.1,270.4 336.2,270.7 338.1,271.1 339.9,271.5 341.7,272.0 344.2,272.9 346.4,273.9 348.4,275.0 350.3,276.0 352.3,277.1 354.5,277.9 357.0,278.6 358.8,278.9 360.6,279.1 362.6,279.2 364.7,279.2 366.8,279.2 368.9,279.2 371.0,279.2 373.1,279.2 375.2,279.3 377.1,279.5 379.0,279.7 381.2,280.1 383.4,280.6 385.5,281.1 387.5,281.7 389.6,282.4 391.5,283.0 393.4,283.7 395.2,284.4 397.0,285.0 399.4,285.9 401.4,286.8 403.2,287.6 405.2,288.6 407.4,289.7 410.0,291.0 411.7,291.8 413.5,292.6 415.4,293.5 417.3,294.3 419.4,295.3 421.5,296.3 423.6,297.3 425.8,298.4 427.9,299.5 430.0,300.7 432.0,302.0 434.0,303.4 436.1,304.9 438.1,306.4 440.2,308.1 442.2,309.8 444.3,311.5 446.3,313.2 448.3,314.9 450.2,316.6 452.2,318.3 454.0,319.8 456.1,321.5 458.1,323.1 460.0,324.5 461.8,326.0 463.6,327.4 465.5,329.0 467.5,330.7 469.6,332.7 472.0,335.0 473.8,336.8 475.7,338.8 477.7,341.0 479.8,343.3 482.0,345.7 484.2,348.1 486.4,350.6 488.6,353.0 490.7,355.5 492.8,357.8 494.8,360.0 496.7,362.1 498.5,364.0 501.1,366.8 503.5,369.3 505.7,371.6 507.8,373.8 509.8,375.8 511.8,377.8 513.9,379.8 516.0,381.8 518.0,383.6 520.1,385.3 522.1,387.0 524.2,388.7 526.3,390.4 528.4,392.0 530.3,393.6 532.2,395.3 534.0,397.0 536.4,399.6 538.5,402.4 540.5,405.1 542.5,407.8 544.6,410.3 547.0,412.7 548.8,414.1 550.8,415.5 552.8,416.7 554.9,417.9 557.1,419.1 559.2,420.3 561.2,421.4 563.2,422.6 565.0,423.8 567.4,425.7 569.6,427.6 571.6,429.6 573.7,431.5 575.7,433.2 578.0,434.9 580.0,436.2 582.1,437.5 584.2,438.7 586.4,439.8 588.6,440.9 591.0,441.8 593.6,442.6 595.5,443.1 597.5,443.5 599.6,443.8 601.7,444.1 603.9,444.3 606.1,444.5 608.4,444.7 610.6,444.9 612.8,445.1 615.0,445.3 617.0,445.5 619.1,445.7 621.2,445.9 623.3,446.0 625.5,446.2 627.6,446.4 629.6,446.6 631.6,446.7 633.5,447.0 635.3,447.2 637.0,447.5 639.7,448.1 642.1,448.8 644.3,449.5 646.3,450.3 648.2,451.1 650.0,452.0 652.7,453.6 655.1,455.4 657.3,457.2 659.0,458.6 662.0,460.8 663.3,461.2 664.9,461.7 666.7,462.2 668.7,462.7 670.8,463.3 673.1,463.9 675.3,464.6 677.6,465.2 679.9,465.9 682.0,466.7 684.0,467.4 686.1,468.3 688.1,469.1 690.0,470.1 691.9,471.0 693.8,472.0 695.8,473.1 697.7,474.1 699.7,475.2 701.8,476.3 704.0,477.4 705.9,478.4 707.9,479.4 709.9,480.5 711.9,481.6 714.0,482.7 716.1,483.8 718.2,484.9 720.3,486.0 722.4,487.0 724.5,487.9 726.5,488.8 728.5,489.6 730.6,490.4 732.8,491.0 734.9,491.6 737.1,492.2 739.2,492.7 741.3,493.1 743.3,493.6 745.3,493.9 747.1,494.3 748.9,494.7 750.6,495.0 753.4,495.6 755.8,496.2 758.0,496.7 760.0,497.1 762.0,497.3 764.0,497.3 766.2,497.1 768.1,496.8 770.1,496.1 772.3,495.2 775.0,494.0 776.6,493.2 778.4,492.3 780.3,491.2 782.3,490.1 784.3,488.9 786.4,487.6 788.6,486.4 790.7,485.2 792.9,484.1 795.0,483.0 797.0,482.1 799.0,481.2 801.1,480.4 803.2,479.6 805.4,478.8 807.5,478.0 809.6,477.2 811.6,476.4 813.5,475.6 815.3,474.8 817.0,474.0 819.6,472.5 821.7,471.1 823.5,469.7 825.3,468.3 827.4,466.8 830.0,465.2 831.7,464.3 833.6,463.3 835.6,462.2 837.7,461.2 839.9,460.1 842.1,459.0 844.3,458.0 846.4,456.9 848.4,456.0 850.3,455.0 852.0,454.2 854.7,452.8 856.9,451.6 859.0,450.4 860.9,449.4 863.0,448.4 865.4,447.5 867.4,446.8 869.5,446.1 871.7,445.4 873.9,444.7 876.2,444.1 878.5,443.6 880.8,443.2 883.0,443.0 885.2,443.0 887.4,443.1 889.7,443.3 891.9,443.7 894.1,444.1 896.4,444.5 898.6,444.9 900.8,445.3 903.0,445.6 905.3,446.0 907.6,446.3 909.9,446.7 912.2,447.0 914.4,447.4 916.5,447.7 918.5,448.0 920.9,448.3 923.1,448.4 925.1,448.5 927.2,448.6 929.4,449.0 931.8,449.7 933.8,450.5 935.9,451.5 938.1,452.7 940.4,454.0 942.7,455.3 945.0,456.5 947.3,457.7 949.5,458.6 951.7,459.3 953.8,459.8 955.9,460.2 958.0,460.6 960.1,461.0 962.3,461.5 964.6,462.1 967.0,463.0 968.8,463.8 970.8,464.8 972.7,465.8 974.8,467.0 976.8,468.2 978.9,469.4 981.0,470.6 983.1,471.8 985.2,473.0 987.3,474.0 989.3,475.0 991.4,475.9 993.5,476.8 995.7,477.7 997.9,478.5 1000.1,479.3 1002.3,480.1 1004.4,480.8 1006.4,481.4 1008.2,482.0 1009.9,482.6 1011.4,483.0 1014.2,483.6 1015.7,483.6 1017.2,483.5 1020.0,484.0 1021.5,484.4 1023.2,484.9 1025.0,485.4 1027.0,486.1 1029.1,486.7 1031.2,487.4 1033.4,488.1 1035.6,488.8 1037.8,489.5 1039.9,490.2 1042.0,490.8 1044.0,491.4 1046.0,492.0 1048.0,492.6 1050.0,493.3 1052.0,493.9 1054.0,494.5 1056.0,495.1 1058.0,495.7 1060.0,496.3 1062.0,496.8 1064.0,497.4 1066.0,497.9 1068.0,498.5 1070.0,499.0 1071.9,499.5 1073.9,500.0 1075.9,500.5 1077.9,501.0 1080.0,501.5 1082.1,502.0 1084.2,502.5 1086.4,503.0 1088.3,503.4 1090.2,503.8 1092.2,504.2 1094.2,504.6 1096.2,505.0 1098.3,505.4 1100.3,505.7 1102.4,506.1 1104.5,506.6 1106.6,507.0 1108.7,507.5 1110.9,508.0 1113.0,508.5 1115.0,509.0 1116.9,509.6 1118.9,510.1 1120.9,510.7 1122.9,511.4 1124.9,512.0 1126.9,512.6 1129.0,513.3 1131.0,513.9 1133.1,514.6 1135.2,515.3 1137.3,516.0 1139.5,516.6 1141.7,517.3 1143.7,517.9 1145.7,518.5 1147.8,519.2 1150.0,519.9 1152.1,520.6 1154.3,521.3 1156.6,522.0 1158.8,522.6 1161.0,523.3 1163.1,524.0 1165.3,524.6 1167.4,525.2 1169.4,525.8 1171.3,526.4 1173.2,526.9 1175.0,527.3 1177.5,527.8 1179.8,528.3 1182.0,528.7 1184.2,528.9 1186.2,529.2 1188.2,529.4 1190.1,529.6 1191.9,529.8 1193.6,530.0 1195.3,530.3 1197.0,530.6 1199.4,531.2 1201.5,531.8 1203.5,532.5 1205.3,533.2 1207.1,533.8 1209.0,534.4 1211.0,535.0 1212.9,535.4 1214.9,535.9 1216.9,536.2 1218.9,536.6 1220.9,537.0 1223.0,537.3 1225.0,537.7 1227.0,538.0 1229.2,538.4 1231.5,538.8 1233.7,539.1 1235.9,539.5 1238.1,539.8 1240.3,540.2 1242.5,540.5 1244.7,540.8 1246.9,541.2 1249.1,541.5 1251.3,541.9 1253.6,542.2 1255.8,542.5 1258.0,542.8 1260.2,543.1 1262.5,543.4 1264.7,543.6 1267.0,543.9 1269.2,544.1 1271.5,544.3 1273.8,544.4 1276.0,544.5 1278.2,544.6 1280.5,544.7 1282.7,544.7 1284.9,544.7 1287.2,544.6 1289.4,544.4 1291.6,544.1 1293.9,543.7 1296.1,543.2 1298.3,542.7 1300.5,542.1 1302.8,541.6 1305.0,541.2 1307.2,541.0 1309.5,540.7 1311.7,540.6 1314.0,540.4 1316.2,540.2 1318.4,540.0 1320.6,539.7 1322.9,539.3 1325.3,538.8 1327.8,538.2 1330.2,537.6 1332.3,537.0 1334.2,536.6 1335.5,536.2" fill="none" stroke="#ff0000" stroke-width="1.0" />
<polyline points="33.3,347.0 34.6,346.7 36.2,346.4 38.1,346.0 40.3,345.6 42.6,345.1 45.0,344.5 47.5,343.9 50.0,343.2 52.3,342.4 54.5,341.4 56.5,340.4 58.9,338.7 60.9,336.8 62.8,334.7 64.6,332.4 66.5,330.0 68.6,327.5 71.1,325.1 74.0,322.7 75.7,321.5 77.4,320.3 79.3,319.0 81.2,317.7 83.3,316.3 85.4,315.0 87.5,313.7 89.7,312.3 91.9,311.0 94.2,309.7 96.4,308.4 98.7,307.2 100.9,306.0 103.1,304.9 105.3,303.8 107.4,302.8 109.5,301.9 111.6,301.0 113.8,300.3 116.0,299.6 118.2,298.9 120.4,298.3 122.5,297.7 124.7,297.2 126.9,296.6 129.0,296.0 131.1,295.4 133.1,294.8 135.1,294.2 137.0,293.4 138.8,292.7 140.6,291.8 143.0,290.4 145.3,289.0 147.4,287.4 149.4,285.8 151.4,284.1 153.3,282.4 155.1,280.7 157.0,278.9 158.8,277.2 160.7,275.6 162.7,274.0 164.7,272.4 166.6,270.8 168.5,269.1 170.3,267.4 172.2,265.7 174.1,264.1 176.1,262.6 178.1,261.1 180.3,259.8 182.6,258.5 185.0,257.5 186.8,256.9 188.7,256.3 190.8,255.8 192.9,255.3 195.1,254.9 197.4,254.6 199.7,254.3 202.0,254.0 204.2,253.8 206.5,253.6 208.7,253.4 210.8,253.3 212.8,253.2 214.7,253.1 216.4,253.0 218.0,253.0 221.0,253.0 223.4,253.3 225.3,253.7 227.0,254.2 228.7,254.9 230.6,255.6 233.0,256.5 234.8,257.1 236.7,257.9 238.7,258.7 240.7,259.7 242.8,260.6 245.0,261.6 247.1,262.5 249.3,263.4 251.4,264.2 253.4,264.9 255.4,265.4 257.7,265.9 259.9,266.1 262.0,266.3 264.1,266.4 266.3,266.4 268.4,266.3 270.5,266.3 272.7,266.4 275.0,266.5 276.9,266.7 278.9,266.9 280.9,267.1 283.0,267.3 285.0,267.5 287.1,267.8 289.2,268.0 291.2,268.2 293.3,268.4 295.4,268.6 297.4,268.7 299.4,268.8 301.4,268.8 303.4,268.8 305.5,268.8 307.5,268.7 309.5,268.7 311.5,268.6 313.5,268.6 315.5,268.6 317.5,268.6 319.5,268.7 321.5,268.8 323.6,268.9 325.6,269.0 327.7,269.1 329.7,269.3 331.8,269.5 333.8,269.7 335.8,269.9 337.8,270.2 339.8,270.6 341.7,271.0 344.0,271.6 346.3,272.4 348.6,273.2 350.8,274.1 353.1,275.1 355.2,276.0 357.4,277.0 359.5,277.8 361.6,278.6 363.9,279.4 366.1,280.1 368.3,280.7 370.4,281.4 372.5,282.0 374.7,282.6 376.8,283.3 379.0,284.0 381.0,284.7 383.1,285.5 385.1,286.2 387.2,287.0 389.3,287.8 391.3,288.6 393.3,289.4 395.2,290.1 397.0,290.8 399.4,291.6 401.4,292.1 403.2,292.6 405.2,293.2 407.4,294.1 410.0,295.5 411.7,296.5 413.5,297.7 415.5,299.1 417.5,300.5 419.6,302.1 421.8,303.7 423.9,305.2 426.1,306.8 428.1,308.3 430.1,309.7 432.0,311.0 434.4,312.6 436.7,314.1 439.0,315.5 441.2,316.8 443.3,318.1 445.5,319.4 447.6,320.7 449.8,322.0 452.0,323.3 454.2,324.4 456.4,325.5 458.7,326.7 460.9,327.9 463.1,329.3 465.3,331.0 467.5,333.0 469.7,335.4 471.8,338.0 473.8,340.9 475.9,343.9 478.1,347.2 480.3,350.5 482.7,353.9 485.2,357.4 487.0,359.8 489.0,362.5 491.1,365.3 493.3,368.2 495.6,371.2 497.8,374.1 500.0,377.0 502.2,379.8 504.3,382.4 506.2,384.7 508.0,386.7 509.6,388.4 512.6,390.9 514.8,391.9 516.7,392.0 518.5,392.1 520.6,392.8 522.7,394.0 524.9,395.4 527.2,396.9 529.5,398.5 531.8,400.1 534.0,401.7 536.1,403.3 538.0,404.9 539.9,406.6 542.0,408.3 544.3,409.9 547.0,411.6 548.7,412.5 550.5,413.4 552.4,414.4 554.4,415.3 556.5,416.2 558.7,417.1 560.8,418.0 563.0,419.0 565.1,419.9 567.2,420.7 569.3,421.6 571.3,422.5 573.4,423.3 575.5,424.2 577.5,425.0 579.6,425.9 581.7,426.7 583.7,427.5 585.7,428.3 587.7,429.0 589.6,429.7 591.4,430.4 593.8,431.3 596.0,432.1 598.1,432.8 600.1,433.5 602.2,434.2 604.3,434.8 606.5,435.4 609.0,436.0 610.9,436.4 613.0,436.7 615.2,437.0 617.4,437.3 619.7,437.6 622.0,437.8 624.2,438.1 626.4,438.5 628.6,438.8 630.7,439.3 632.6,439.8 635.1,440.6 637.5,441.6 639.8,442.6 642.0,443.7 644.1,444.8 646.2,446.0 648.1,447.3 650.0,448.6 652.2,450.5 654.0,452.5 655.7,454.7 657.5,456.9 659.5,458.9 662.0,460.8 663.6,461.7 665.4,462.6 667.3,463.4 669.3,464.2 671.3,464.9 673.4,465.6 675.6,466.4 677.7,467.1 679.9,467.9 682.0,468.7 684.0,469.6 686.0,470.5 688.0,471.5 690.0,472.5 692.0,473.6 694.0,474.6 696.0,475.7 698.0,476.7 700.0,477.8 702.0,478.8 704.0,479.8 706.0,480.7 708.0,481.6 710.0,482.6 712.0,483.5 714.0,484.4 716.0,485.3 718.0,486.2 720.0,487.0 722.1,487.8 724.2,488.5 726.3,489.1 728.5,489.6 730.4,490.0 732.4,490.3 734.4,490.7 736.5,490.9 738.6,491.2 740.7,491.4 742.8,491.5 745.0,491.6 747.0,491.6 749.1,491.5 751.1,491.3 753.1,491.1 755.0,490.7 757.2,490.1 759.3,489.3 761.4,488.3 763.5,487.2 765.5,486.0 767.5,484.7 769.5,483.4 771.4,482.1 773.3,480.8 775.2,479.6 777.0,478.5 779.2,477.2 781.2,475.9 783.1,474.6 785.1,473.4 786.9,472.1 788.9,470.9 790.8,469.7 792.8,468.5 795.0,467.4 796.8,466.5 798.8,465.6 800.7,464.7 802.7,463.8 804.7,462.9 806.8,462.1 808.8,461.3 810.9,460.5 812.9,459.8 815.0,459.2 817.0,458.6 819.0,458.1 821.1,457.7 823.2,457.3 825.4,457.0 827.5,456.7 829.6,456.5 831.7,456.3 833.6,456.1 835.5,455.8 837.3,455.6 839.0,455.3 841.7,454.7 844.0,454.2 846.0,453.6 848.0,453.0 849.9,452.5 852.0,452.0 854.2,451.5 856.3,451.0 858.4,450.6 860.6,450.2 862.9,449.9 865.4,449.7 867.4,449.7 869.5,449.7 871.7,449.8 873.9,449.9 876.2,450.1 878.5,450.3 880.8,450.5 883.0,450.8 885.2,451.1 887.4,451.5 889.7,452.0 891.9,452.5 894.1,453.0 896.4,453.5 898.6,453.9 900.8,454.2 903.0,454.5 905.3,454.7 907.6,454.8 909.9,455.0 912.2,455.1 914.4,455.2 916.5,455.2 918.5,455.3 920.9,455.3 923.1,455.2 925.1,455.0 927.2,454.9 929.4,455.0 931.8,455.3 933.8,455.7 935.9,456.3 938.1,456.9 940.4,457.6 942.7,458.4 945.0,459.2 947.3,460.0 949.5,460.8 951.7,461.6 953.9,462.3 956.1,463.2 958.2,464.0 960.4,464.8 962.6,465.7 964.8,466.5 967.0,467.4 969.0,468.2 970.9,469.0 972.8,469.8 974.7,470.7 976.7,471.5 978.7,472.4 980.7,473.3 982.8,474.1 985.0,475.0 986.9,475.7 988.9,476.5 991.0,477.3 993.1,478.1 995.2,478.9 997.4,479.7 999.5,480.5 1001.5,481.2 1003.5,481.9 1005.3,482.5 1007.0,483.0 1009.6,483.7 1011.7,484.2 1013.5,484.4 1015.3,484.7 1017.4,484.9 1020.0,485.3 1021.7,485.5 1023.5,485.8 1025.4,486.0 1027.3,486.2 1029.4,486.5 1031.5,486.7 1033.6,487.0 1035.8,487.4 1037.9,487.7 1040.0,488.1 1042.0,488.6 1044.0,489.1 1046.0,489.7 1048.0,490.4 1050.0,491.1 1052.0,491.8 1054.0,492.6 1056.0,493.3 1058.0,494.1 1060.0,494.8 1062.0,495.6 1064.0,496.3 1066.0,497.0 1068.0,497.7 1070.0,498.5 1071.9,499.2 1073.9,500.0 1075.9,500.7 1077.9,501.4 1080.0,502.1 1082.1,502.8 1084.2,503.4 1086.4,504.0 1088.3,504.4 1090.4,504.8 1092.4,505.2 1094.6,505.6 1096.7,505.9 1098.9,506.2 1101.1,506.5 1103.2,506.8 1105.3,507.1 1107.4,507.4 1109.4,507.7 1111.2,508.1 1113.0,508.5 1115.6,509.2 1117.9,510.0 1120.1,510.8 1122.1,511.7 1124.1,512.5 1126.1,513.4 1128.2,514.2 1130.6,515.0 1132.4,515.6 1134.3,516.1 1136.3,516.7 1138.3,517.2 1140.3,517.7 1142.4,518.2 1144.5,518.8 1146.5,519.3 1148.6,519.8 1150.7,520.2 1152.7,520.7 1154.7,521.1 1156.7,521.6 1158.8,522.0 1160.8,522.4 1162.8,522.8 1164.9,523.2 1166.9,523.6 1168.9,523.9 1171.0,524.3 1173.0,524.6 1175.0,525.0 1177.0,525.3 1179.1,525.6 1181.2,525.9 1183.4,526.2 1185.5,526.5 1187.6,526.7 1189.6,527.0 1191.6,527.3 1193.5,527.6 1195.3,528.0 1197.0,528.4 1199.4,529.1 1201.5,529.9 1203.5,530.8 1205.3,531.7 1207.1,532.5 1209.0,533.4 1211.0,534.2 1212.9,534.9 1214.9,535.5 1216.9,536.2 1218.9,536.9 1220.9,537.5 1223.0,538.1 1225.0,538.6 1227.0,539.0 1229.2,539.4 1231.5,539.7 1233.7,539.9 1235.9,540.0 1238.1,540.2 1240.3,540.3 1242.5,540.5 1244.7,540.7 1246.9,541.0 1249.1,541.2 1251.3,541.5 1253.6,541.7 1255.8,541.9 1258.0,542.0 1260.2,542.1 1262.5,542.1 1264.7,542.1 1267.0,542.1 1269.2,542.1 1271.5,542.1 1273.8,542.0 1276.0,542.0 1278.2,542.0 1280.5,541.9 1282.7,541.9 1284.9,541.8 1287.2,541.6 1289.4,541.2 1291.6,540.8 1293.9,540.2 1296.1,539.5 1298.3,538.8 1300.5,538.0 1302.8,537.3 1305.0,536.6 1307.2,535.9 1309.5,535.2 1311.7,534.5 1314.0,533.8 1316.2,533.2 1318.4,532.5 1320.6,531.9 1322.9,531.3 1325.3,530.7 1327.8,530.1 1330.2,529.5 1332.3,529.0 1334.2,528.6 1335.5,528.3" fill="none" stroke="#00ee00" stroke-width="1.0" />
<line x1="33" y1="201" x2="1338" y2="238.5" stroke="#1010f0" stroke-width="1" shape-rendering="crispEdges"/>
<line x1="33" y1="237" x2="1338" y2="325" stroke="#1010f0" stroke-width="1" shape-rendering="crispEdges"/>
<line x1="165" y1="203" x2="1338" y2="567" stroke="#1010f0" stroke-width="1" shape-rendering="crispEdges"/>
<line x1="33" y1="448" x2="1338" y2="590" stroke="#1010f0" stroke-width="1" shape-rendering="crispEdges"/>
<line x1="725" y1="426.5" x2="1338" y2="426.5" stroke="#1010f0" stroke-width="1" shape-rendering="crispEdges"/>
<line x1="806" y1="426.5" x2="1338" y2="466.4" stroke="#1010f0" stroke-width="1" shape-rendering="crispEdges"/>
<line x1="725" y1="476.3" x2="1338" y2="476.3" stroke="#1010f0" stroke-width="1" shape-rendering="crispEdges"/>
<line x1="725" y1="509.4" x2="1338" y2="509.4" stroke="#1010f0" stroke-width="1" shape-rendering="crispEdges"/>
<line x1="107" y1="526.4" x2="1338" y2="526.4" stroke="#1010f0" stroke-width="1" shape-rendering="crispEdges"/>
<line x1="107" y1="558.3" x2="1338" y2="558.3" stroke="#1010f0" stroke-width="1" shape-rendering="crispEdges"/>
<text x="726.4" y="424.5" font-size="9.88" fill="#888" >9,5317</text>
<text x="726.4" y="474.0" font-size="9.88" fill="#888" >8,0127</text>
<text x="726.4" y="507.0" font-size="9.88" fill="#888" >7,019</text>
<text x="108.5" y="524.0" font-size="9.88" fill="#888" >6,49</text>
<text x="108.5" y="556.0" font-size="9.88" fill="#888" >5,52</text>
<g shape-rendering="crispEdges">
<rect x="33" y="642" width="1303" height="1" fill="#444" />
<rect x="34" y="641" width="4" height="1" fill="#6a8f6a" />
<rect x="39" y="641" width="4" height="1" fill="#6a8f6a" />
<rect x="44" y="641" width="4" height="1" fill="#6a8f6a" />
<rect x="49" y="641" width="4" height="1" fill="#6a8f6a" />
<rect x="53" y="641" width="4" height="1" fill="#6a8f6a" />
<rect x="58" y="641" width="4" height="1" fill="#6a8f6a" />
<rect x="63" y="638" width="4" height="4" fill="#6a8f6a" />
<rect x="68" y="636" width="4" height="6" fill="#6a8f6a" />
<rect x="73" y="635" width="4" height="7" fill="#6a8f6a" />
<rect x="78" y="635" width="4" height="7" fill="#6a8f6a" />
<rect x="82" y="639" width="4" height="3" fill="#6a8f6a" />
<rect x="87" y="641" width="4" height="1" fill="#6a8f6a" />
<rect x="92" y="643" width="4" height="1" fill="#6a8f6a" />
<rect x="97" y="643" width="4" height="2" fill="#6a8f6a" />
<rect x="102" y="643" width="4" height="3" fill="#6a8f6a" />
<rect x="107" y="643" width="4" height="3" fill="#6a8f6a" />
<rect x="111" y="643" width="4" height="3" fill="#6a8f6a" />
<rect x="116" y="643" width="4" height="3" fill="#6a8f6a" />
<rect x="121" y="643" width="4" height="3" fill="#6a8f6a" />
<rect x="126" y="643" width="4" height="2" fill="#6a8f6a" />
<rect x="131" y="643" width="4" height="1" fill="#6a8f6a" />
<rect x="145" y="641" width="4" height="1" fill="#6a8f6a" />
<rect x="150" y="640" width="4" height="2" fill="#6a8f6a" />
<rect x="155" y="638" width="4" height="4" fill="#6a8f6a" />
<rect x="160" y="637" width="4" height="5" fill="#6a8f6a" />
<rect x="165" y="636" width="4" height="6" fill="#6a8f6a" />
<rect x="170" y="637" width="4" height="5" fill="#6a8f6a" />
<rect x="174" y="638" width="4" height="4" fill="#6a8f6a" />
<rect x="179" y="640" width="4" height="2" fill="#6a8f6a" />
<rect x="189" y="643" width="4" height="1" fill="#6a8f6a" />
<rect x="194" y="643" width="4" height="2" fill="#6a8f6a" />
<rect x="199" y="643" width="4" height="3" fill="#6a8f6a" />
<rect x="203" y="643" width="4" height="3" fill="#6a8f6a" />
<rect x="208" y="643" width="4" height="4" fill="#6a8f6a" />
<rect x="213" y="643" width="4" height="4" fill="#6a8f6a" />
<rect x="218" y="643" width="4" height="4" fill="#6a8f6a" />
<rect x="223" y="643" width="4" height="5" fill="#6a8f6a" />
<rect x="228" y="643" width="4" height="5" fill="#6a8f6a" />
<rect x="232" y="643" width="4" height="5" fill="#6a8f6a" />
<rect x="237" y="643" width="4" height="6" fill="#6a8f6a" />
<rect x="242" y="643" width="4" height="6" fill="#6a8f6a" />
<rect x="247" y="643" width="4" height="4" fill="#6a8f6a" />
<rect x="252" y="643" width="4" height="2" fill="#6a8f6a" />
<rect x="257" y="641" width="4" height="1" fill="#6a8f6a" />
<rect x="261" y="640" width="4" height="2" fill="#6a8f6a" />
<rect x="266" y="639" width="4" height="3" fill="#6a8f6a" />
<rect x="271" y="638" width="4" height="4" fill="#6a8f6a" />
<rect x="276" y="639" width="4" height="3" fill="#6a8f6a" />
<rect x="281" y="640" width="4" height="2" fill="#6a8f6a" />
<rect x="286" y="641" width="4" height="1" fill="#6a8f6a" />
<rect x="291" y="641" width="4" height="1" fill="#6a8f6a" />
<rect x="295" y="641" width="4" height="1" fill="#6a8f6a" />
<rect x="300" y="641" width="4" height="1" fill="#6a8f6a" />
<rect x="305" y="640" width="4" height="2" fill="#6a8f6a" />
<rect x="310" y="640" width="4" height="2" fill="#6a8f6a" />
<rect x="315" y="639" width="4" height="3" fill="#6a8f6a" />
<rect x="320" y="640" width="4" height="2" fill="#6a8f6a" />
<rect x="324" y="641" width="4" height="1" fill="#6a8f6a" />
<rect x="334" y="643" width="4" height="1" fill="#6a8f6a" />
<rect x="339" y="643" width="4" height="1" fill="#6a8f6a" />
<rect x="344" y="643" width="4" height="2" fill="#6a8f6a" />
<rect x="349" y="643" width="4" height="2" fill="#6a8f6a" />
<rect x="353" y="643" width="4" height="3" fill="#6a8f6a" />
<rect x="358" y="643" width="4" height="3" fill="#6a8f6a" />
<rect x="363" y="643" width="4" height="2" fill="#6a8f6a" />
<rect x="368" y="643" width="4" height="2" fill="#6a8f6a" />
<rect x="373" y="643" width="4" height="2" fill="#6a8f6a" />
<rect x="378" y="643" width="4" height="2" fill="#6a8f6a" />
<rect x="382" y="643" width="4" height="2" fill="#6a8f6a" />
<rect x="387" y="643" width="4" height="2" fill="#6a8f6a" />
<rect x="392" y="643" width="4" height="1" fill="#6a8f6a" />
<rect x="402" y="641" width="4" height="1" fill="#6a8f6a" />
<rect x="407" y="641" width="4" height="1" fill="#6a8f6a" />
<rect x="416" y="643" width="4" height="2" fill="#6a8f6a" />
<rect x="421" y="643" width="4" height="2" fill="#6a8f6a" />
<rect x="426" y="643" width="4" height="3" fill="#6a8f6a" />
<rect x="431" y="643" width="4" height="3" fill="#6a8f6a" />
<rect x="436" y="643" width="4" height="3" fill="#6a8f6a" />
<rect x="441" y="643" width="4" height="2" fill="#6a8f6a" />
<rect x="445" y="643" width="4" height="2" fill="#6a8f6a" />
<rect x="450" y="643" width="4" height="1" fill="#6a8f6a" />
<rect x="455" y="641" width="4" height="1" fill="#6a8f6a" />
<rect x="460" y="643" width="4" height="1" fill="#6a8f6a" />
<rect x="465" y="643" width="4" height="3" fill="#6a8f6a" />
<rect x="470" y="643" width="4" height="4" fill="#6a8f6a" />
<rect x="474" y="643" width="4" height="6" fill="#6a8f6a" />
<rect x="479" y="643" width="4" height="6" fill="#6a8f6a" />
<rect x="484" y="643" width="4" height="4" fill="#6a8f6a" />
<rect x="489" y="643" width="4" height="1" fill="#6a8f6a" />
<rect x="503" y="641" width="4" height="1" fill="#6a8f6a" />
<rect x="508" y="640" width="4" height="2" fill="#6a8f6a" />
<rect x="513" y="637" width="4" height="5" fill="#6a8f6a" />
<rect x="518" y="634" width="4" height="8" fill="#6a8f6a" />
<rect x="523" y="635" width="4" height="7" fill="#6a8f6a" />
<rect x="528" y="637" width="4" height="5" fill="#6a8f6a" />
<rect x="533" y="639" width="4" height="3" fill="#6a8f6a" />
<rect x="537" y="641" width="4" height="1" fill="#6a8f6a" />
<rect x="542" y="640" width="4" height="2" fill="#6a8f6a" />
<rect x="547" y="640" width="4" height="2" fill="#6a8f6a" />
<rect x="552" y="640" width="4" height="2" fill="#6a8f6a" />
<rect x="557" y="640" width="4" height="2" fill="#6a8f6a" />
<rect x="562" y="639" width="4" height="3" fill="#6a8f6a" />
<rect x="566" y="639" width="4" height="3" fill="#6a8f6a" />
<rect x="571" y="640" width="4" height="2" fill="#6a8f6a" />
<rect x="576" y="641" width="4" height="1" fill="#6a8f6a" />
<rect x="581" y="640" width="4" height="2" fill="#6a8f6a" />
<rect x="586" y="640" width="4" height="2" fill="#6a8f6a" />
<rect x="591" y="640" width="4" height="2" fill="#6a8f6a" />
<rect x="595" y="639" width="4" height="3" fill="#6a8f6a" />
<rect x="600" y="639" width="4" height="3" fill="#6a8f6a" />
<rect x="605" y="639" width="4" height="3" fill="#6a8f6a" />
<rect x="610" y="639" width="4" height="3" fill="#6a8f6a" />
<rect x="615" y="640" width="4" height="2" fill="#6a8f6a" />
<rect x="620" y="640" width="4" height="2" fill="#6a8f6a" />
<rect x="624" y="641" width="4" height="1" fill="#6a8f6a" />
<rect x="634" y="643" width="4" height="2" fill="#6a8f6a" />
<rect x="639" y="643" width="4" height="3" fill="#6a8f6a" />
<rect x="644" y="643" width="4" height="4" fill="#6a8f6a" />
<rect x="649" y="643" width="4" height="4" fill="#6a8f6a" />
<rect x="654" y="643" width="4" height="5" fill="#6a8f6a" />
<rect x="658" y="643" width="4" height="4" fill="#6a8f6a" />
<rect x="663" y="643" width="4" height="3" fill="#6a8f6a" />
<rect x="668" y="643" width="4" height="1" fill="#6a8f6a" />
<rect x="673" y="641" width="4" height="1" fill="#6a8f6a" />
<rect x="678" y="639" width="4" height="3" fill="#6a8f6a" />
<rect x="683" y="638" width="4" height="4" fill="#6a8f6a" />
<rect x="687" y="639" width="4" height="3" fill="#6a8f6a" />
<rect x="692" y="641" width="4" height="1" fill="#6a8f6a" />
<rect x="697" y="641" width="4" height="1" fill="#6a8f6a" />
<rect x="702" y="641" width="4" height="1" fill="#6a8f6a" />
<rect x="707" y="641" width="4" height="1" fill="#6a8f6a" />
<rect x="712" y="641" width="4" height="1" fill="#6a8f6a" />
<rect x="716" y="641" width="4" height="1" fill="#6a8f6a" />
<rect x="721" y="641" width="4" height="1" fill="#6a8f6a" />
<rect x="726" y="640" width="4" height="2" fill="#6a8f6a" />
<rect x="731" y="639" width="4" height="3" fill="#6a8f6a" />
<rect x="736" y="639" width="4" height="3" fill="#6a8f6a" />
<rect x="741" y="638" width="4" height="4" fill="#6a8f6a" />
<rect x="745" y="637" width="4" height="5" fill="#6a8f6a" />
<rect x="750" y="637" width="4" height="5" fill="#6a8f6a" />
<rect x="755" y="636" width="4" height="6" fill="#6a8f6a" />
<rect x="760" y="635" width="4" height="7" fill="#6a8f6a" />
<rect x="765" y="635" width="4" height="7" fill="#6a8f6a" />
<rect x="770" y="636" width="4" height="6" fill="#6a8f6a" />
<rect x="775" y="637" width="4" height="5" fill="#6a8f6a" />
<rect x="779" y="638" width="4" height="4" fill="#6a8f6a" />
<rect x="784" y="639" width="4" height="3" fill="#6a8f6a" />
<rect x="789" y="641" width="4" height="1" fill="#6a8f6a" />
<rect x="799" y="643" width="4" height="2" fill="#6a8f6a" />
<rect x="804" y="643" width="4" height="2" fill="#6a8f6a" />
<rect x="808" y="643" width="4" height="2" fill="#6a8f6a" />
<rect x="813" y="643" width="4" height="2" fill="#6a8f6a" />
<rect x="818" y="643" width="4" height="2" fill="#6a8f6a" />
<rect x="823" y="643" width="4" height="3" fill="#6a8f6a" />
<rect x="828" y="643" width="4" height="3" fill="#6a8f6a" />
<rect x="833" y="643" width="4" height="3" fill="#6a8f6a" />
<rect x="837" y="643" width="4" height="3" fill="#6a8f6a" />
<rect x="842" y="643" width="4" height="2" fill="#6a8f6a" />
<rect x="847" y="643" width="4" height="2" fill="#6a8f6a" />
<rect x="852" y="643" width="4" height="1" fill="#6a8f6a" />
<rect x="857" y="643" width="4" height="1" fill="#6a8f6a" />
<rect x="862" y="643" width="4" height="2" fill="#6a8f6a" />
<rect x="866" y="643" width="4" height="2" fill="#6a8f6a" />
<rect x="871" y="643" width="4" height="2" fill="#6a8f6a" />
<rect x="876" y="643" width="4" height="2" fill="#6a8f6a" />
<rect x="881" y="643" width="4" height="2" fill="#6a8f6a" />
<rect x="886" y="643" width="4" height="2" fill="#6a8f6a" />
<rect x="891" y="643" width="4" height="2" fill="#6a8f6a" />
<rect x="896" y="643" width="4" height="2" fill="#6a8f6a" />
<rect x="900" y="643" width="4" height="2" fill="#6a8f6a" />
<rect x="905" y="643" width="4" height="2" fill="#6a8f6a" />
<rect x="910" y="643" width="4" height="1" fill="#6a8f6a" />
<rect x="915" y="640" width="4" height="2" fill="#6a8f6a" />
<rect x="920" y="639" width="4" height="3" fill="#6a8f6a" />
<rect x="925" y="639" width="4" height="3" fill="#6a8f6a" />
<rect x="929" y="640" width="4" height="2" fill="#6a8f6a" />
<rect x="934" y="643" width="4" height="1" fill="#6a8f6a" />
<rect x="939" y="643" width="4" height="2" fill="#6a8f6a" />
<rect x="944" y="643" width="4" height="2" fill="#6a8f6a" />
<rect x="949" y="643" width="4" height="3" fill="#6a8f6a" />
<rect x="954" y="643" width="4" height="3" fill="#6a8f6a" />
<rect x="958" y="643" width="4" height="3" fill="#6a8f6a" />
<rect x="963" y="643" width="4" height="3" fill="#6a8f6a" />
<rect x="968" y="643" width="4" height="2" fill="#6a8f6a" />
<rect x="973" y="643" width="4" height="2" fill="#6a8f6a" />
<rect x="978" y="643" width="4" height="2" fill="#6a8f6a" />
<rect x="983" y="643" width="4" height="1" fill="#6a8f6a" />
<rect x="992" y="641" width="4" height="1" fill="#6a8f6a" />
<rect x="997" y="640" width="4" height="2" fill="#6a8f6a" />
<rect x="1002" y="639" width="4" height="3" fill="#6a8f6a" />
<rect x="1007" y="639" width="4" height="3" fill="#6a8f6a" />
<rect x="1012" y="639" width="4" height="3" fill="#6a8f6a" />
<rect x="1017" y="638" width="4" height="4" fill="#6a8f6a" />
<rect x="1021" y="638" width="4" height="4" fill="#6a8f6a" />
<rect x="1026" y="639" width="4" height="3" fill="#6a8f6a" />
<rect x="1031" y="641" width="4" height="1" fill="#6a8f6a" />
<rect x="1036" y="643" width="4" height="1" fill="#6a8f6a" />
<rect x="1041" y="643" width="4" height="2" fill="#6a8f6a" />
<rect x="1046" y="643" width="4" height="2" fill="#6a8f6a" />
<rect x="1050" y="643" width="4" height="2" fill="#6a8f6a" />
<rect x="1055" y="643" width="4" height="2" fill="#6a8f6a" />
<rect x="1060" y="643" width="4" height="2" fill="#6a8f6a" />
<rect x="1065" y="643" width="4" height="2" fill="#6a8f6a" />
<rect x="1070" y="643" width="4" height="2" fill="#6a8f6a" />
<rect x="1075" y="643" width="4" height="2" fill="#6a8f6a" />
<rect x="1079" y="643" width="4" height="2" fill="#6a8f6a" />
<rect x="1084" y="643" width="4" height="1" fill="#6a8f6a" />
<rect x="1089" y="643" width="4" height="1" fill="#6a8f6a" />
<rect x="1099" y="641" width="4" height="1" fill="#6a8f6a" />
<rect x="1104" y="641" width="4" height="1" fill="#6a8f6a" />
<rect x="1108" y="641" width="4" height="1" fill="#6a8f6a" />
<rect x="1113" y="641" width="4" height="1" fill="#6a8f6a" />
<rect x="1118" y="641" width="4" height="1" fill="#6a8f6a" />
<rect x="1123" y="641" width="4" height="1" fill="#6a8f6a" />
<rect x="1128" y="641" width="4" height="1" fill="#6a8f6a" />
<rect x="1133" y="641" width="4" height="1" fill="#6a8f6a" />
<rect x="1138" y="641" width="4" height="1" fill="#6a8f6a" />
<rect x="1142" y="641" width="4" height="1" fill="#6a8f6a" />
<rect x="1147" y="641" width="4" height="1" fill="#6a8f6a" />
<rect x="1152" y="641" width="4" height="1" fill="#6a8f6a" />
<rect x="1157" y="641" width="4" height="1" fill="#6a8f6a" />
<rect x="1162" y="641" width="4" height="1" fill="#6a8f6a" />
<rect x="1167" y="641" width="4" height="1" fill="#6a8f6a" />
<rect x="1171" y="641" width="4" height="1" fill="#6a8f6a" />
<rect x="1176" y="641" width="4" height="1" fill="#6a8f6a" />
<rect x="1181" y="641" width="4" height="1" fill="#6a8f6a" />
<rect x="1186" y="641" width="4" height="1" fill="#6a8f6a" />
<rect x="1191" y="641" width="4" height="1" fill="#6a8f6a" />
<rect x="1196" y="641" width="4" height="1" fill="#6a8f6a" />
<rect x="1200" y="641" width="4" height="1" fill="#6a8f6a" />
<rect x="1205" y="641" width="4" height="1" fill="#6a8f6a" />
<rect x="1210" y="641" width="4" height="1" fill="#6a8f6a" />
<rect x="1215" y="641" width="4" height="1" fill="#6a8f6a" />
<rect x="1220" y="641" width="4" height="1" fill="#6a8f6a" />
<rect x="1225" y="641" width="4" height="1" fill="#6a8f6a" />
<rect x="1229" y="641" width="4" height="1" fill="#6a8f6a" />
<rect x="1234" y="641" width="4" height="1" fill="#6a8f6a" />
<rect x="1239" y="641" width="4" height="1" fill="#6a8f6a" />
<rect x="1244" y="641" width="4" height="1" fill="#6a8f6a" />
<rect x="1249" y="641" width="4" height="1" fill="#6a8f6a" />
<rect x="1254" y="641" width="4" height="1" fill="#6a8f6a" />
<rect x="1259" y="641" width="4" height="1" fill="#6a8f6a" />
<rect x="1263" y="641" width="4" height="1" fill="#6a8f6a" />
<rect x="1268" y="641" width="4" height="1" fill="#6a8f6a" />
<rect x="1273" y="641" width="4" height="1" fill="#6a8f6a" />
<rect x="1278" y="641" width="4" height="1" fill="#6a8f6a" />
<rect x="1283" y="641" width="4" height="1" fill="#6a8f6a" />
<rect x="1288" y="641" width="4" height="1" fill="#6a8f6a" />
<rect x="1292" y="640" width="4" height="2" fill="#6a8f6a" />
<rect x="1297" y="640" width="4" height="2" fill="#6a8f6a" />
<rect x="1302" y="640" width="4" height="2" fill="#6a8f6a" />
<rect x="1307" y="640" width="4" height="2" fill="#6a8f6a" />
<rect x="1312" y="640" width="4" height="2" fill="#6a8f6a" />
<rect x="1317" y="640" width="4" height="2" fill="#6a8f6a" />
<rect x="1321" y="640" width="4" height="2" fill="#6a8f6a" />
<rect x="1326" y="640" width="4" height="2" fill="#6a8f6a" />
<rect x="1331" y="640" width="4" height="2" fill="#6a8f6a" />
<rect x="1336" y="640" width="4" height="2" fill="#6a8f6a" />
</g>
<polyline points="33.7,642.8 35.2,642.6 37.4,642.2 39.9,641.8 42.5,641.4 45.0,641.0 47.0,640.8 49.1,640.7 51.3,640.5 53.4,640.3 55.5,640.0 57.4,639.3 60.0,637.7 62.3,635.5 64.7,633.2 67.3,631.1 69.3,629.9 71.4,628.7 73.5,627.5 75.7,626.5 77.8,625.6 79.8,624.9 82.3,624.3 84.6,624.1 86.9,624.2 89.7,624.4 91.6,624.6 93.6,624.8 95.8,625.1 98.0,625.5 100.3,625.9 102.5,626.4 104.7,626.9 106.8,627.5 108.8,628.3 110.8,629.1 112.9,630.0 115.0,630.9 117.2,631.7 119.6,632.4 121.6,632.9 123.8,633.4 126.0,633.9 128.4,634.4 130.7,634.9 133.0,635.3 135.3,635.6 137.5,635.8 139.5,636.0 141.9,636.1 144.1,636.0 146.3,635.8 148.3,635.5 150.4,635.2 152.4,634.8 154.5,634.3 156.6,633.8 158.8,633.1 160.9,632.4 163.0,631.6 165.1,630.9 167.3,630.1 169.4,629.4 171.5,628.6 173.7,627.8 175.8,626.9 177.9,626.1 180.0,625.4 182.2,625.0 184.3,624.9 186.4,625.2 188.4,625.8 190.5,626.6 192.5,627.6 194.7,628.7 196.9,629.9 199.3,631.1 201.3,632.1 203.4,633.1 205.7,634.3 207.9,635.4 210.3,636.6 212.6,637.8 214.9,639.0 217.1,640.0 219.2,641.0 221.5,641.9 223.7,642.8 225.9,643.6 228.1,644.3 230.2,645.0 232.3,645.7 234.4,646.5 236.6,647.3 238.8,648.3 241.1,649.4 243.3,650.6 245.6,651.9 247.8,653.0 250.0,654.0 252.1,654.7 254.0,655.2 256.4,655.3 258.5,654.9 260.6,654.2 262.5,653.4 264.5,652.5 266.5,651.7 268.5,651.0 270.5,650.2 272.6,649.4 274.6,648.6 276.7,647.9 278.9,647.3 280.9,646.9 283.0,646.5 285.1,646.2 287.3,645.9 289.5,645.7 291.6,645.5 293.8,645.3 295.9,645.2 298.1,645.1 300.2,645.1 302.4,645.1 304.5,645.0 306.7,645.0 308.8,644.8 310.9,644.5 313.0,644.1 315.1,643.7 317.1,643.2 319.3,642.8 321.4,642.5 323.7,642.3 325.8,642.2 327.9,642.3 330.0,642.3 332.2,642.4 334.5,642.6 336.7,642.8 338.9,643.1 341.1,643.5 343.3,644.0 345.5,644.5 347.7,645.2 349.9,645.9 352.0,646.6 354.2,647.3 356.4,648.0 358.5,648.5 360.6,648.9 362.7,649.3 364.8,649.7 366.9,649.9 369.0,650.2 371.0,650.5 373.0,650.7 375.0,651.0 377.2,651.3 379.2,651.7 381.2,652.0 383.2,652.3 385.3,652.6 387.5,652.7 389.9,652.8 391.9,652.7 394.1,652.6 396.3,652.3 398.7,652.0 401.0,651.7 403.4,651.4 405.6,651.2 407.8,651.0 409.8,651.0 412.2,651.1 414.4,651.4 416.5,651.7 418.6,652.1 420.6,652.5 422.6,653.0 424.7,653.5 426.7,654.0 428.7,654.7 430.6,655.4 432.5,656.1 434.6,656.8 436.9,657.3 439.6,657.7 441.4,657.8 443.3,657.9 445.4,657.9 447.6,657.8 449.9,657.7 452.2,657.6 454.5,657.5 456.7,657.4 458.9,657.4 461.0,657.4 462.8,657.5 464.5,657.7 467.3,658.3 469.6,659.2 471.5,660.2 473.3,661.4 475.1,662.5 477.0,663.5 479.0,664.5 480.9,665.6 482.7,666.8 484.7,667.8 486.9,668.6 489.4,669.2 491.3,669.4 493.5,669.6 495.8,669.7 498.1,669.7 500.6,669.6 502.9,669.4 505.2,669.1 507.4,668.8 509.3,668.4 511.8,667.5 514.0,666.3 516.0,665.0 517.9,663.5 519.8,662.2 521.8,661.0 523.7,660.0 525.5,659.1 527.2,658.2 529.2,657.4 531.4,656.7 534.2,656.0 535.8,655.7 537.7,655.5 539.6,655.3 541.7,655.1 543.9,654.9 546.1,654.8 548.4,654.6 550.6,654.4 552.8,654.2 555.0,654.0 557.1,653.8 559.0,653.5 561.2,653.1 563.2,652.6 565.2,652.1 567.1,651.6 569.0,651.1 570.9,650.5 572.8,650.0 574.8,649.5 576.8,649.0 579.0,648.5 580.9,648.1 582.9,647.8 585.0,647.4 587.2,647.1 589.3,646.7 591.5,646.4 593.7,646.1 595.9,645.8 598.0,645.5 600.1,645.3 602.1,645.0 604.0,644.8 606.5,644.5 608.8,644.3 611.2,644.1 613.4,643.9 615.6,643.7 617.7,643.6 619.8,643.5 621.8,643.5 623.8,643.5 626.2,643.5 628.4,643.6 630.6,643.8 632.6,644.0 634.7,644.3 636.7,644.7 638.8,645.3 640.9,646.0 643.1,646.9 645.2,648.0 647.3,649.1 649.4,650.2 651.6,651.3 653.7,652.3 655.8,653.3 658.0,654.5 660.1,655.6 662.2,656.7 664.3,657.6 666.5,658.2 668.6,658.5 670.7,658.3 672.7,657.7 674.7,656.9 676.7,655.9 678.8,654.9 681.1,654.0 683.6,653.5 685.5,653.3 687.6,653.2 689.8,653.2 692.0,653.2 694.3,653.3 696.6,653.3 698.9,653.4 701.0,653.5 703.1,653.5 705.0,653.5 707.5,653.4 709.7,653.3 711.8,653.2 713.9,653.0 715.8,652.8 717.8,652.6 719.9,652.3 722.0,652.0 724.1,651.7 726.2,651.4 728.2,651.0 730.4,650.5 732.5,650.0 734.8,649.3 736.9,648.6 739.0,647.9 741.1,647.1 743.3,646.2 745.6,645.3 747.8,644.3 750.0,643.3 752.2,642.3 754.4,641.2 756.5,639.9 758.6,638.6 760.8,637.3 763.0,635.9 765.2,634.6 767.4,633.4 769.7,632.4 771.8,631.6 774.0,630.7 776.2,629.9 778.4,629.2 780.6,628.6 782.9,628.0 785.1,627.5 787.4,627.1 789.6,626.9 791.8,626.8 793.9,626.9 796.0,627.0 798.2,627.3 800.3,627.7 802.5,628.1 804.7,628.5 807.1,629.0 809.5,629.4 811.4,629.8 813.4,630.2 815.4,630.6 817.4,631.0 819.5,631.5 821.6,632.0 823.8,632.5 825.9,633.0 828.1,633.5 830.2,634.0 832.3,634.4 834.4,634.8 836.5,635.2 838.6,635.5 840.7,635.8 842.9,636.1 845.0,636.4 847.2,636.7 849.3,637.0 851.4,637.3 853.4,637.6 855.4,637.9 857.4,638.2 859.3,638.6 861.7,639.1 864.0,639.6 866.1,640.2 868.2,640.7 870.3,641.3 872.4,641.9 874.5,642.5 876.8,643.0 879.2,643.6 881.1,644.0 883.1,644.5 885.1,645.0 887.2,645.6 889.3,646.1 891.4,646.6 893.6,647.1 895.7,647.5 897.8,647.9 899.9,648.2 902.0,648.4 904.0,648.5 906.2,648.4 908.4,648.2 910.6,647.9 912.8,647.4 915.0,646.9 917.1,646.4 919.2,645.9 921.2,645.4 923.1,644.9 924.8,644.5 926.5,644.3 929.1,644.0 931.1,643.9 932.9,643.8 934.6,644.0 936.5,644.3 938.9,644.8 940.8,645.3 942.8,646.0 945.0,646.8 947.2,647.8 949.5,648.7 951.9,649.6 954.2,650.5 956.5,651.2 958.8,651.8 961.0,652.2 963.3,652.6 965.6,652.8 967.9,653.0 970.2,653.2 972.4,653.3 974.6,653.4 976.7,653.4 978.7,653.5 981.1,653.6 983.2,653.6 985.2,653.6 987.2,653.6 989.2,653.5 991.3,653.3 993.7,653.0 995.7,652.7 997.9,652.3 1000.2,651.8 1002.6,651.3 1004.9,650.8 1007.3,650.2 1009.5,649.6 1011.7,649.0 1013.6,648.5 1016.2,647.6 1018.5,646.6 1020.6,645.6 1022.6,644.7 1024.7,643.9 1026.8,643.4 1028.9,643.2 1030.8,643.2 1032.7,643.3 1034.7,643.6 1037.2,643.9 1040.2,644.2 1041.8,644.3 1043.6,644.5 1045.6,644.7 1047.6,644.9 1049.8,645.1 1052.0,645.4 1054.2,645.6 1056.5,645.8 1058.7,646.1 1060.9,646.3 1063.0,646.5 1065.1,646.7 1067.0,646.9 1069.3,647.1 1071.6,647.4 1073.7,647.6 1075.8,647.9 1077.9,648.1 1079.9,648.3 1082.0,648.5 1084.0,648.6 1086.2,648.7 1088.4,648.8 1090.3,648.8 1092.3,648.8 1094.3,648.7 1096.3,648.6 1098.4,648.5 1100.4,648.3 1102.5,648.2 1104.6,648.1 1106.6,647.9 1108.6,647.8 1110.6,647.7 1112.5,647.7 1114.7,647.7 1116.9,647.7 1119.0,647.8 1121.0,647.9 1123.1,648.0 1125.1,648.1 1127.2,648.2 1129.4,648.2 1131.6,648.3 1134.0,648.2 1135.9,648.1 1137.8,648.0 1139.8,647.8 1141.9,647.7 1143.9,647.5 1146.0,647.3 1148.1,647.0 1150.3,646.8 1152.4,646.6 1154.5,646.4 1156.6,646.3 1158.7,646.1 1160.8,646.0 1162.9,645.9 1164.9,645.8 1167.0,645.8 1169.0,645.7 1171.1,645.7 1173.2,645.6 1175.2,645.6 1177.3,645.6 1179.4,645.6 1181.4,645.6 1183.5,645.6 1185.5,645.6 1187.6,645.6 1189.7,645.6 1191.7,645.6 1193.8,645.6 1195.8,645.6 1197.9,645.6 1200.0,645.7 1202.0,645.7 1204.1,645.7 1206.2,645.8 1208.2,645.8 1210.3,645.9 1212.3,645.9 1214.4,646.0 1216.5,646.1 1218.5,646.2 1220.6,646.4 1222.6,646.6 1224.7,646.8 1226.8,647.0 1228.8,647.2 1230.9,647.4 1233.0,647.5 1235.0,647.6 1237.1,647.7 1239.1,647.7 1241.2,647.7 1243.3,647.6 1245.4,647.5 1247.5,647.3 1249.6,647.0 1251.8,646.8 1253.9,646.5 1256.0,646.1 1258.1,645.8 1260.2,645.5 1262.2,645.1 1264.2,644.8 1266.1,644.5 1268.0,644.2 1270.4,643.8 1272.8,643.4 1275.1,643.0 1277.3,642.5 1279.5,642.1 1281.7,641.7 1283.7,641.3 1285.7,640.9 1287.6,640.5 1289.4,640.2 1292.1,639.7 1294.4,639.3 1296.4,639.0 1298.4,638.6 1300.5,638.3 1302.8,638.0 1304.7,637.8 1306.6,637.5 1308.6,637.3 1310.6,637.1 1312.6,636.9 1314.7,636.7 1316.8,636.5 1318.9,636.2 1321.1,635.9 1323.6,635.5 1326.1,635.1 1328.6,634.7 1331.0,634.4 1333.1,634.0 1334.9,633.7 1336.3,633.5" fill="none" stroke="#ff0000" stroke-width="1.3" />
<polyline points="33.7,642.8 35.4,642.3 37.8,641.7 40.0,641.0 42.4,640.0 45.0,639.3 47.3,639.4 49.8,639.7 52.4,639.8 55.0,639.8 57.7,639.6 60.0,638.6 62.6,634.6 64.8,629.9 67.2,626.4 69.8,623.6 71.8,622.1 73.9,621.0 76.0,620.4 78.0,620.5 79.9,621.1 82.3,621.9 84.6,622.5 87.2,623.3 89.8,624.1 92.2,624.9 94.9,626.2 97.3,627.5 99.7,628.6 102.2,629.1 104.7,629.3 107.2,629.9 109.6,631.4 111.9,633.3 114.6,634.8 116.4,635.3 118.4,635.6 120.5,635.8 122.6,635.9 124.6,636.0 127.1,636.1 129.7,636.0 132.2,635.9 134.5,636.0 137.1,636.5 139.4,637.1 142.0,637.3 143.8,637.0 145.8,636.6 147.9,636.0 150.0,635.2 152.0,634.3 154.0,633.1 156.0,631.7 157.9,630.2 159.9,628.7 162.0,627.4 164.2,626.3 166.4,625.1 168.7,624.2 170.9,623.4 173.0,622.9 175.4,622.7 177.6,623.0 179.7,623.5 181.8,624.4 184.4,626.3 186.8,628.7 189.3,631.1 191.6,633.3 193.9,635.4 196.8,637.3 198.6,638.1 200.5,638.8 202.5,639.4 204.7,639.9 206.9,640.5 209.2,641.0 211.2,641.4 213.4,641.7 215.6,642.0 217.9,642.3 220.1,642.6 222.1,643.0 224.0,643.5 226.3,644.3 228.5,645.1 230.4,646.1 232.2,647.2 234.0,648.5 236.7,651.6 239.2,655.2 241.6,657.7 244.2,658.4 246.7,658.2 249.0,657.7 251.3,657.4 254.0,656.0 255.7,654.6 257.6,652.8 259.8,650.7 261.9,648.8 264.0,647.3 266.0,646.3 267.9,645.5 269.8,645.0 271.8,644.6 274.0,644.3 275.9,644.1 278.0,644.0 280.1,644.0 282.2,644.1 284.3,644.2 286.4,644.3 288.5,644.5 290.6,644.9 292.7,645.3 294.8,645.7 296.9,645.9 298.8,646.0 300.9,645.8 302.9,645.3 304.7,644.8 306.7,644.1 308.8,643.5 310.7,642.9 312.8,642.3 314.8,641.6 317.0,641.0 319.1,640.5 321.2,640.3 323.3,640.3 325.4,640.5 327.5,640.8 329.5,641.2 331.6,641.7 333.7,642.3 335.8,643.0 337.8,644.0 339.8,645.0 341.9,646.0 343.9,647.0 346.0,647.8 348.1,648.5 350.2,649.2 352.3,649.8 354.4,650.3 356.5,650.7 358.5,651.0 360.9,651.0 363.2,650.7 365.6,650.3 367.8,649.9 370.0,649.8 372.1,650.0 374.1,650.4 376.1,650.9 378.0,651.4 380.0,651.8 382.4,652.3 384.8,652.9 387.3,653.4 389.9,653.5 391.9,653.3 394.0,652.9 396.2,652.4 398.4,651.8 400.5,651.3 402.3,651.0 405.1,650.6 407.3,650.5 409.8,650.5 412.1,650.6 414.6,650.7 417.2,651.0 419.7,651.5 421.7,652.2 423.6,653.0 425.5,654.0 427.5,655.0 429.7,656.0 431.7,656.9 433.7,658.0 435.9,659.0 438.1,660.0 440.1,660.7 442.1,661.0 444.2,660.7 446.2,659.7 448.0,658.5 450.0,657.4 452.1,656.8 454.1,656.7 456.2,656.8 458.5,657.0 460.6,657.4 462.7,657.9 464.5,658.5 467.3,660.0 469.5,661.9 472.0,664.2 473.8,666.0 475.8,668.2 477.9,670.4 480.0,672.3 482.0,673.4 484.0,673.6 485.9,673.2 487.8,672.5 489.8,671.6 492.0,670.9 494.0,670.5 496.0,670.2 498.2,669.8 500.4,669.4 502.5,669.0 504.4,668.4 507.1,667.5 509.6,666.4 512.0,665.1 514.3,663.5 516.5,661.1 518.6,658.2 520.7,655.4 523.0,653.5 525.1,652.8 527.5,652.6 529.9,652.8 532.2,653.1 534.2,653.5 536.8,654.8 539.0,656.5 541.7,657.2 543.4,656.8 545.3,656.1 547.4,655.1 549.5,654.0 551.7,652.8 554.0,651.8 556.0,650.9 558.2,649.9 560.5,648.8 562.8,647.8 565.0,646.9 567.1,646.3 569.0,646.0 571.2,646.5 573.1,647.8 574.9,649.3 576.8,650.5 579.0,651.0 580.9,650.6 583.0,649.8 585.2,648.7 587.5,647.5 589.8,646.3 591.9,645.4 594.0,644.8 596.2,644.7 598.3,645.1 600.4,645.8 602.4,646.4 604.4,646.8 606.4,646.8 608.5,646.2 610.7,645.1 612.8,643.8 614.9,642.5 617.0,641.5 618.9,641.0 621.6,641.2 624.0,642.1 626.4,643.3 628.8,644.3 630.8,644.9 632.8,645.4 634.8,645.9 636.8,646.5 638.8,647.3 641.2,648.6 643.4,650.1 645.9,651.8 648.7,653.5 650.6,654.6 652.8,655.8 655.0,657.1 657.4,658.4 659.6,659.5 661.8,660.4 663.7,661.0 666.5,661.2 668.8,660.8 671.1,659.8 673.6,658.5 675.6,657.3 677.9,655.7 680.2,653.9 682.4,652.2 684.4,650.7 686.0,649.8 687.8,649.6 690.0,651.0 691.6,651.4 693.6,652.0 695.9,652.6 698.4,653.2 700.8,653.8 703.0,654.2 705.0,654.3 707.7,653.9 710.0,653.0 712.2,651.9 714.9,651.0 716.8,650.6 718.8,650.3 720.9,650.0 723.1,649.7 725.4,649.4 727.6,649.0 729.8,648.5 732.0,647.9 734.2,647.3 736.4,646.7 738.5,646.0 740.7,645.2 742.8,644.4 744.8,643.6 747.0,642.6 749.1,641.6 751.2,640.5 753.2,639.3 755.2,638.1 757.2,636.8 759.2,635.3 761.3,633.6 763.3,631.8 765.4,630.1 767.5,628.6 769.7,627.4 771.7,626.7 773.8,626.1 775.9,625.8 778.1,625.5 780.3,625.4 782.5,625.3 784.6,625.4 786.7,625.6 788.9,626.0 791.0,626.4 793.1,627.0 795.2,627.6 797.4,628.1 799.5,628.6 801.6,629.0 803.8,629.3 805.9,629.7 808.0,630.0 810.1,630.3 812.3,630.7 814.4,631.1 816.6,631.6 818.8,632.0 821.1,632.5 823.3,633.1 825.5,633.6 827.5,634.2 829.4,634.8 832.2,636.1 834.7,637.5 836.9,638.8 839.3,639.8 841.3,640.2 843.3,640.4 845.3,640.5 847.3,640.4 849.3,640.3 851.3,640.0 853.3,639.6 855.3,639.1 857.3,638.7 859.3,638.6 861.7,638.9 863.9,639.4 866.4,640.2 869.2,641.0 871.0,641.5 873.0,642.1 875.1,642.7 877.3,643.3 879.5,644.0 881.8,644.7 884.1,645.3 886.2,645.9 888.4,646.6 890.7,647.3 893.0,648.0 895.3,648.7 897.5,649.2 899.6,649.6 901.6,649.8 904.0,649.7 906.2,649.4 908.3,648.8 910.2,648.2 912.1,647.4 914.0,646.8 916.1,646.0 918.1,645.0 919.9,644.0 921.9,643.2 924.0,642.8 925.9,642.7 928.0,642.8 930.0,643.1 932.2,643.5 934.3,644.1 936.4,644.8 938.5,645.8 940.7,647.1 942.8,648.5 944.9,650.0 947.0,651.3 948.9,652.3 951.4,653.3 953.7,653.8 956.0,654.1 958.8,654.3 960.6,654.3 962.6,654.3 964.6,654.1 966.8,654.0 969.0,653.8 971.4,653.6 973.8,653.5 975.9,653.4 978.1,653.4 980.4,653.4 982.9,653.4 985.3,653.4 987.6,653.4 989.9,653.3 991.9,653.1 993.7,652.8 996.9,651.6 999.3,650.0 1001.4,648.4 1003.6,647.3 1005.6,647.0 1007.6,647.0 1009.6,647.2 1011.6,647.2 1013.6,646.8 1015.7,645.7 1017.8,644.1 1019.9,642.4 1022.0,641.0 1024.1,640.2 1026.1,640.2 1028.0,640.8 1029.9,641.7 1032.1,642.7 1034.8,643.4 1036.6,643.7 1038.5,643.9 1040.7,644.2 1042.9,644.4 1045.2,644.6 1047.4,644.8 1049.6,645.1 1051.7,645.3 1053.6,645.6 1056.1,646.1 1058.5,646.7 1060.6,647.3 1062.7,647.9 1064.8,648.4 1067.0,648.8 1069.1,649.1 1071.2,649.4 1073.2,649.6 1075.3,649.7 1077.7,649.7 1080.4,649.6 1082.3,649.5 1084.3,649.2 1086.5,648.9 1088.8,648.5 1091.1,648.2 1093.4,647.8 1095.7,647.5 1097.9,647.2 1099.9,647.0 1101.8,646.9 1104.5,647.0 1107.0,647.3 1109.2,647.7 1111.2,648.2 1113.2,648.7 1115.2,649.0 1117.4,649.3 1119.3,649.5 1121.2,649.7 1123.4,649.7 1126.0,649.6 1127.7,649.4 1129.7,649.1 1131.7,648.7 1133.9,648.3 1136.1,647.9 1138.4,647.4 1140.6,647.0 1142.7,646.7 1144.7,646.4 1146.9,646.2 1149.0,646.0 1151.0,645.8 1153.1,645.7 1155.1,645.6 1157.0,645.6 1158.9,645.6 1160.8,645.6 1163.2,645.7 1165.4,646.0 1167.5,646.4 1169.6,646.7 1171.8,646.9 1174.2,646.9 1176.1,646.7 1178.1,646.4 1180.1,646.0 1182.2,645.5 1184.3,645.1 1186.3,644.7 1188.3,644.3 1190.2,644.2 1192.6,644.2 1194.8,644.5 1196.9,644.8 1199.0,645.2 1201.2,645.7 1203.6,646.0 1205.5,646.2 1207.4,646.5 1209.4,646.7 1211.5,646.9 1213.5,647.2 1215.6,647.4 1217.7,647.5 1219.7,647.7 1221.7,647.8 1223.7,648.0 1225.6,648.1 1227.6,648.2 1229.6,648.3 1231.6,648.3 1233.7,648.3 1235.8,648.2 1237.8,648.0 1239.9,647.8 1242.1,647.5 1244.3,647.2 1246.5,646.8 1248.6,646.5 1250.7,646.2 1252.7,645.9 1254.6,645.6 1257.1,645.3 1259.5,645.1 1261.6,645.0 1263.7,644.8 1265.8,644.5 1268.0,644.2 1270.3,643.7 1272.6,643.2 1274.9,642.6 1277.1,641.9 1279.3,641.3 1281.4,640.7 1283.7,640.0 1285.8,639.4 1287.9,638.7 1289.9,638.1 1292.0,637.5 1294.1,636.9 1296.1,636.3 1298.1,635.7 1300.3,635.2 1302.8,634.8 1304.6,634.7 1306.6,634.7 1308.7,634.7 1310.9,634.8 1313.0,634.8 1315.1,634.9 1317.1,634.9 1318.9,634.8 1321.4,634.5 1323.8,634.0 1325.9,633.4 1327.8,633.0 1329.6,632.7 1332.4,632.8 1334.7,633.2 1336.3,633.5" fill="none" stroke="#000" stroke-width="1.3" />
<rect x="1310.5" y="605.5" width="10" height="10" fill="#fff" stroke="#999"/>
<path d="M1313,608 h2 M1313,611 h2 M1317,608 h2 M1317,611 h2" stroke="#800" stroke-width="1.5"/>
<rect x="1324.5" y="604.5" width="11" height="11" fill="#e00000" />
<path d="M1327,607 L1333,613 M1333,607 L1327,613" stroke="#fff" stroke-width="1.2"/>
<rect x="22" y="709" width="1344" height="19" fill="#ffffff" />
<rect x="26" y="714" width="1337" height="11" fill="#000" />
<rect x="27" y="715" width="1335" height="9" fill="#fff" />
<rect x="548" y="716" width="806" height="7" fill="#000" />
<rect x="27" y="715" width="8" height="9" fill="#fff" />
<path d="M28.5,719.5 L33.5,715.5 L33.5,723.5 Z" fill="#000"/>
<rect x="34" y="715" width="1" height="9" fill="#000" />
<rect x="1352" y="715" width="1" height="9" fill="#000" />
<rect x="1353" y="715" width="9" height="9" fill="#fff" />
<path d="M1360.5,719.5 L1355,715.5 L1355,723.5 Z" fill="#000"/>
<rect x="0" y="728" width="1366" height="40" fill="#5a5b52" />
<g clip-path="url(#tclip)"><g filter="url(#blur3)">
<rect x="0.0" y="734.1" width="7.1" height="37.9" fill="#727568" opacity="0.6"/>
<rect x="6.7" y="735.6" width="4.7" height="36.4" fill="#787b6e" opacity="0.6"/>
<rect x="11.8" y="729.1" width="3.8" height="42.9" fill="#5d5e53" opacity="0.6"/>
<rect x="15.9" y="739.8" width="9.2" height="32.2" fill="#3c4032" opacity="0.6"/>
<rect x="26.8" y="728.2" width="8.9" height="43.8" fill="#4b4f41" opacity="0.6"/>
<rect x="35.0" y="735.2" width="3.5" height="36.8" fill="#4f5045" opacity="0.6"/>
<rect x="38.7" y="730.8" width="5.9" height="41.2" fill="#505446" opacity="0.6"/>
<rect x="43.4" y="735.9" width="3.0" height="36.1" fill="#414437" opacity="0.6"/>
<rect x="45.9" y="731.0" width="8.0" height="41.0" fill="#414637" opacity="0.6"/>
<rect x="54.3" y="734.8" width="7.6" height="37.2" fill="#3a3a30" opacity="0.6"/>
<rect x="59.4" y="728.8" width="4.0" height="43.2" fill="#5c5f52" opacity="0.6"/>
<rect x="61.8" y="739.1" width="9.2" height="32.9" fill="#525348" opacity="0.6"/>
<rect x="67.6" y="728.9" width="6.4" height="43.1" fill="#696c5f" opacity="0.6"/>
<rect x="73.8" y="729.0" width="10.0" height="43.0" fill="#595b4f" opacity="0.6"/>
<rect x="81.8" y="731.0" width="11.7" height="41.0" fill="#46473c" opacity="0.6"/>
<rect x="89.5" y="736.2" width="3.5" height="35.8" fill="#75766b" opacity="0.6"/>
<rect x="92.1" y="735.7" width="7.6" height="36.3" fill="#474a3d" opacity="0.6"/>
<rect x="97.1" y="731.2" width="6.8" height="40.8" fill="#525248" opacity="0.6"/>
<rect x="105.2" y="730.5" width="10.2" height="41.5" fill="#5d5d53" opacity="0.6"/>
<rect x="113.7" y="739.9" width="10.7" height="32.1" fill="#434339" opacity="0.6"/>
<rect x="121.5" y="731.6" width="5.3" height="40.4" fill="#616757" opacity="0.6"/>
<rect x="124.9" y="735.2" width="3.8" height="36.8" fill="#56564c" opacity="0.6"/>
<rect x="128.1" y="734.9" width="7.1" height="37.1" fill="#747a6a" opacity="0.6"/>
<rect x="136.0" y="738.9" width="4.6" height="33.1" fill="#4a4c40" opacity="0.6"/>
<rect x="141.1" y="736.9" width="5.2" height="35.1" fill="#4f5045" opacity="0.6"/>
<rect x="147.2" y="735.2" width="4.8" height="36.8" fill="#686b5e" opacity="0.6"/>
<rect x="151.2" y="739.6" width="3.9" height="32.4" fill="#3b3f31" opacity="0.6"/>
<rect x="154.2" y="737.9" width="9.3" height="34.1" fill="#575a4d" opacity="0.6"/>
<rect x="163.1" y="739.7" width="5.6" height="32.3" fill="#4d5243" opacity="0.6"/>
<rect x="166.9" y="730.5" width="7.3" height="41.5" fill="#404236" opacity="0.6"/>
<rect x="175.3" y="732.9" width="9.7" height="39.1" fill="#3f4135" opacity="0.6"/>
<rect x="182.6" y="734.4" width="3.4" height="37.6" fill="#5b5d51" opacity="0.6"/>
<rect x="186.7" y="739.8" width="3.8" height="32.2" fill="#484b3e" opacity="0.6"/>
<rect x="190.5" y="728.4" width="9.2" height="43.6" fill="#484c3e" opacity="0.6"/>
<rect x="196.1" y="728.3" width="11.2" height="43.7" fill="#5e5e54" opacity="0.6"/>
<rect x="207.1" y="729.6" width="7.3" height="42.4" fill="#5e6054" opacity="0.6"/>
<rect x="211.8" y="728.5" width="7.1" height="43.5" fill="#666b5c" opacity="0.6"/>
<rect x="220.0" y="739.6" width="9.6" height="32.4" fill="#474d3d" opacity="0.6"/>
<rect x="227.8" y="738.5" width="3.8" height="33.5" fill="#737369" opacity="0.6"/>
<rect x="231.0" y="728.2" width="10.1" height="43.8" fill="#767a6c" opacity="0.6"/>
<rect x="241.1" y="728.9" width="6.4" height="43.1" fill="#383c2e" opacity="0.6"/>
<rect x="245.3" y="736.7" width="4.0" height="35.3" fill="#575a4d" opacity="0.6"/>
<rect x="248.7" y="733.6" width="9.6" height="38.4" fill="#717467" opacity="0.6"/>
<rect x="257.5" y="731.7" width="7.7" height="40.3" fill="#78786e" opacity="0.6"/>
<rect x="262.6" y="737.4" width="3.2" height="34.6" fill="#45483b" opacity="0.6"/>
<rect x="265.7" y="731.6" width="7.4" height="40.4" fill="#383a2e" opacity="0.6"/>
<rect x="273.2" y="738.9" width="4.8" height="33.1" fill="#4c5242" opacity="0.6"/>
<rect x="278.0" y="732.9" width="7.0" height="39.1" fill="#55574b" opacity="0.6"/>
<rect x="283.2" y="732.6" width="8.7" height="39.4" fill="#505146" opacity="0.6"/>
<rect x="291.5" y="734.0" width="5.8" height="38.0" fill="#48493e" opacity="0.6"/>
<rect x="297.9" y="737.9" width="10.6" height="34.1" fill="#3f4135" opacity="0.6"/>
<rect x="305.0" y="733.0" width="7.2" height="39.0" fill="#525848" opacity="0.6"/>
<rect x="312.1" y="738.1" width="7.4" height="33.9" fill="#5f6455" opacity="0.6"/>
<rect x="320.9" y="728.4" width="7.1" height="43.6" fill="#404636" opacity="0.6"/>
<rect x="328.9" y="732.3" width="3.4" height="39.7" fill="#5a5e50" opacity="0.6"/>
<rect x="332.2" y="733.5" width="8.1" height="38.5" fill="#484b3e" opacity="0.6"/>
<rect x="337.2" y="729.7" width="10.5" height="42.3" fill="#555b4b" opacity="0.6"/>
<rect x="343.8" y="735.6" width="8.7" height="36.4" fill="#707066" opacity="0.6"/>
<rect x="352.4" y="730.4" width="10.3" height="41.6" fill="#404536" opacity="0.6"/>
<rect x="363.6" y="733.7" width="5.3" height="38.3" fill="#383e2e" opacity="0.6"/>
<rect x="369.1" y="732.1" width="4.6" height="39.9" fill="#595f4f" opacity="0.6"/>
<rect x="373.8" y="738.2" width="7.7" height="33.8" fill="#4b4e41" opacity="0.6"/>
<rect x="381.6" y="732.7" width="5.0" height="39.3" fill="#6b7061" opacity="0.6"/>
<rect x="386.0" y="734.6" width="4.8" height="37.4" fill="#373a2d" opacity="0.6"/>
<rect x="390.7" y="731.9" width="7.5" height="40.1" fill="#626558" opacity="0.6"/>
<rect x="399.6" y="730.9" width="3.9" height="41.1" fill="#46473c" opacity="0.6"/>
<rect x="402.9" y="739.7" width="3.8" height="32.3" fill="#5e6254" opacity="0.6"/>
<rect x="407.3" y="734.1" width="5.4" height="37.9" fill="#393b2f" opacity="0.6"/>
<rect x="410.6" y="731.3" width="6.1" height="40.7" fill="#6c7262" opacity="0.6"/>
<rect x="417.6" y="737.6" width="5.0" height="34.4" fill="#3f4235" opacity="0.6"/>
<rect x="421.1" y="729.8" width="6.0" height="42.2" fill="#484b3e" opacity="0.6"/>
<rect x="426.6" y="734.9" width="9.5" height="37.1" fill="#6f7265" opacity="0.6"/>
<rect x="436.2" y="734.7" width="9.8" height="37.3" fill="#6f7365" opacity="0.6"/>
<rect x="447.0" y="734.2" width="8.1" height="37.8" fill="#4c5042" opacity="0.6"/>
<rect x="456.2" y="738.4" width="5.3" height="33.6" fill="#676d5d" opacity="0.6"/>
<rect x="461.4" y="734.3" width="5.7" height="37.7" fill="#494d3f" opacity="0.6"/>
<rect x="466.8" y="734.0" width="4.8" height="38.0" fill="#7b7b71" opacity="0.6"/>
<rect x="471.4" y="739.0" width="3.2" height="33.0" fill="#3c4032" opacity="0.6"/>
<rect x="474.4" y="729.1" width="11.9" height="42.9" fill="#46493c" opacity="0.6"/>
<rect x="482.7" y="739.0" width="11.4" height="33.0" fill="#717467" opacity="0.6"/>
<rect x="495.0" y="733.9" width="6.6" height="38.1" fill="#56594c" opacity="0.6"/>
<rect x="500.4" y="731.8" width="11.1" height="40.2" fill="#737769" opacity="0.6"/>
<rect x="508.3" y="736.4" width="8.6" height="35.6" fill="#58594e" opacity="0.6"/>
<rect x="518.5" y="728.1" width="3.3" height="43.9" fill="#4a4b40" opacity="0.6"/>
<rect x="521.0" y="734.0" width="9.5" height="38.0" fill="#565a4c" opacity="0.6"/>
<rect x="529.6" y="731.0" width="8.2" height="41.0" fill="#787c6e" opacity="0.6"/>
<rect x="535.5" y="732.5" width="7.8" height="39.5" fill="#6e6e64" opacity="0.6"/>
<rect x="542.1" y="730.5" width="7.8" height="41.5" fill="#4b4f41" opacity="0.6"/>
<rect x="549.7" y="738.2" width="8.7" height="33.8" fill="#7a7b70" opacity="0.6"/>
<rect x="558.2" y="735.5" width="10.7" height="36.5" fill="#54594a" opacity="0.6"/>
<rect x="566.8" y="730.6" width="4.6" height="41.4" fill="#5f6055" opacity="0.6"/>
<rect x="572.4" y="729.6" width="11.0" height="42.4" fill="#48493e" opacity="0.6"/>
<rect x="579.5" y="739.3" width="6.5" height="32.7" fill="#6e7464" opacity="0.6"/>
<rect x="585.6" y="735.5" width="9.3" height="36.5" fill="#505346" opacity="0.6"/>
<rect x="595.6" y="739.6" width="3.9" height="32.4" fill="#646a5a" opacity="0.6"/>
<rect x="598.2" y="740.0" width="7.6" height="32.0" fill="#626658" opacity="0.6"/>
<rect x="606.5" y="728.3" width="10.2" height="43.7" fill="#74746a" opacity="0.6"/>
<rect x="617.3" y="730.3" width="8.5" height="41.7" fill="#74756a" opacity="0.6"/>
<rect x="623.0" y="739.1" width="4.6" height="32.9" fill="#4b4d41" opacity="0.6"/>
<rect x="626.0" y="737.2" width="3.6" height="34.8" fill="#727268" opacity="0.6"/>
<rect x="628.9" y="733.2" width="7.2" height="38.8" fill="#787a6e" opacity="0.6"/>
<rect x="635.8" y="730.4" width="3.1" height="41.6" fill="#3c4232" opacity="0.6"/>
<rect x="638.4" y="739.1" width="6.2" height="32.9" fill="#66695c" opacity="0.6"/>
<rect x="644.4" y="738.7" width="3.9" height="33.3" fill="#383a2e" opacity="0.6"/>
<rect x="648.6" y="735.2" width="9.3" height="36.8" fill="#6a6e60" opacity="0.6"/>
<rect x="657.0" y="738.9" width="11.8" height="33.1" fill="#585a4e" opacity="0.6"/>
<rect x="669.4" y="738.8" width="10.0" height="33.2" fill="#6a6b60" opacity="0.6"/>
<rect x="680.7" y="730.2" width="9.3" height="41.8" fill="#6e7464" opacity="0.6"/>
<rect x="687.4" y="733.6" width="4.7" height="38.4" fill="#626458" opacity="0.6"/>
<rect x="690.2" y="731.3" width="6.2" height="40.7" fill="#3d3e33" opacity="0.6"/>
<rect x="697.5" y="732.9" width="5.7" height="39.1" fill="#525748" opacity="0.6"/>
<rect x="701.6" y="735.7" width="3.7" height="36.3" fill="#787b6e" opacity="0.6"/>
<rect x="705.3" y="735.4" width="9.9" height="36.6" fill="#39392f" opacity="0.6"/>
<rect x="715.6" y="728.6" width="5.3" height="43.4" fill="#6a6e60" opacity="0.6"/>
<rect x="719.4" y="731.0" width="6.4" height="41.0" fill="#434539" opacity="0.6"/>
<rect x="726.7" y="739.6" width="8.0" height="32.4" fill="#787b6e" opacity="0.6"/>
<rect x="734.2" y="735.7" width="12.0" height="36.3" fill="#6f7565" opacity="0.6"/>
<rect x="745.3" y="739.2" width="9.0" height="32.8" fill="#3c3f32" opacity="0.6"/>
<rect x="751.6" y="733.9" width="7.2" height="38.1" fill="#4c5242" opacity="0.6"/>
<rect x="758.6" y="731.4" width="3.5" height="40.6" fill="#76796c" opacity="0.6"/>
<rect x="761.5" y="733.8" width="5.8" height="38.2" fill="#7a7c70" opacity="0.6"/>
<rect x="766.0" y="728.2" width="11.4" height="43.8" fill="#5c5c52" opacity="0.6"/>
<rect x="774.5" y="737.1" width="3.4" height="34.9" fill="#4b4e41" opacity="0.6"/>
<rect x="777.3" y="735.0" width="11.1" height="37.0" fill="#69695f" opacity="0.6"/>
<rect x="788.7" y="736.6" width="5.9" height="35.4" fill="#535649" opacity="0.6"/>
<rect x="793.1" y="729.2" width="9.8" height="42.8" fill="#3c4032" opacity="0.6"/>
<rect x="803.8" y="730.9" width="11.2" height="41.1" fill="#494f3f" opacity="0.6"/>
<rect x="815.2" y="729.4" width="3.5" height="42.6" fill="#6c6f62" opacity="0.6"/>
<rect x="819.1" y="732.4" width="6.2" height="39.6" fill="#4a4a40" opacity="0.6"/>
<rect x="823.3" y="735.0" width="6.8" height="37.0" fill="#585d4e" opacity="0.6"/>
<rect x="829.1" y="740.0" width="10.0" height="32.0" fill="#7a8070" opacity="0.6"/>
<rect x="840.8" y="729.4" width="9.6" height="42.6" fill="#55584b" opacity="0.6"/>
<rect x="851.7" y="731.3" width="10.1" height="40.7" fill="#64665a" opacity="0.6"/>
<rect x="861.9" y="731.3" width="8.1" height="40.7" fill="#4f5445" opacity="0.6"/>
<rect x="867.9" y="739.0" width="11.6" height="33.0" fill="#777c6d" opacity="0.6"/>
<rect x="881.0" y="731.3" width="3.4" height="40.7" fill="#3e3e34" opacity="0.6"/>
<rect x="883.8" y="734.5" width="8.6" height="37.5" fill="#44453a" opacity="0.6"/>
<rect x="889.4" y="730.8" width="3.8" height="41.2" fill="#4b4f41" opacity="0.6"/>
<rect x="893.9" y="732.1" width="7.4" height="39.9" fill="#64655a" opacity="0.6"/>
<rect x="900.4" y="729.4" width="4.2" height="42.6" fill="#404636" opacity="0.6"/>
<rect x="905.0" y="733.1" width="8.6" height="38.9" fill="#525548" opacity="0.6"/>
<rect x="911.5" y="735.8" width="10.3" height="36.2" fill="#66675c" opacity="0.6"/>
<rect x="923.8" y="737.0" width="5.9" height="35.0" fill="#7d8373" opacity="0.6"/>
<rect x="930.6" y="729.2" width="6.8" height="42.8" fill="#666a5c" opacity="0.6"/>
<rect x="938.3" y="734.8" width="3.7" height="37.2" fill="#414437" opacity="0.6"/>
<rect x="941.6" y="737.3" width="9.2" height="34.7" fill="#5d6353" opacity="0.6"/>
<rect x="947.5" y="731.6" width="4.9" height="40.4" fill="#414637" opacity="0.6"/>
<rect x="952.6" y="730.6" width="9.2" height="41.4" fill="#5b5c51" opacity="0.6"/>
<rect x="961.8" y="736.5" width="5.9" height="35.5" fill="#46483c" opacity="0.6"/>
<rect x="967.4" y="734.4" width="11.3" height="37.6" fill="#5a5d50" opacity="0.6"/>
<rect x="980.9" y="739.6" width="7.1" height="32.4" fill="#535649" opacity="0.6"/>
<rect x="988.3" y="737.9" width="7.6" height="34.1" fill="#414337" opacity="0.6"/>
<rect x="993.0" y="730.3" width="9.1" height="41.7" fill="#686e5e" opacity="0.6"/>
<rect x="1001.5" y="738.0" width="10.2" height="34.0" fill="#7c7d72" opacity="0.6"/>
<rect x="1011.1" y="731.4" width="4.6" height="40.6" fill="#717767" opacity="0.6"/>
<rect x="1013.9" y="734.8" width="7.6" height="37.2" fill="#7c7d72" opacity="0.6"/>
<rect x="1022.9" y="735.0" width="8.9" height="37.0" fill="#6d6d63" opacity="0.6"/>
<rect x="1029.8" y="731.3" width="7.9" height="40.7" fill="#616157" opacity="0.6"/>
<rect x="1035.1" y="735.8" width="5.8" height="36.2" fill="#3a3f30" opacity="0.6"/>
<rect x="1038.9" y="736.5" width="10.3" height="35.5" fill="#6d6e63" opacity="0.6"/>
<rect x="1048.2" y="733.5" width="11.2" height="38.5" fill="#626858" opacity="0.6"/>
<rect x="1057.2" y="729.6" width="10.3" height="42.4" fill="#616657" opacity="0.6"/>
<rect x="1066.4" y="735.4" width="10.2" height="36.6" fill="#404536" opacity="0.6"/>
<rect x="1072.8" y="728.0" width="9.8" height="44.0" fill="#636959" opacity="0.6"/>
<rect x="1080.9" y="735.7" width="3.8" height="36.3" fill="#727668" opacity="0.6"/>
<rect x="1084.4" y="739.1" width="9.4" height="32.9" fill="#45483b" opacity="0.6"/>
<rect x="1095.2" y="732.5" width="5.2" height="39.5" fill="#4b5041" opacity="0.6"/>
<rect x="1098.8" y="731.5" width="4.8" height="40.5" fill="#6d7163" opacity="0.6"/>
<rect x="1104.6" y="729.4" width="3.5" height="42.6" fill="#5e6354" opacity="0.6"/>
<rect x="1108.1" y="737.0" width="10.0" height="35.0" fill="#4d4d43" opacity="0.6"/>
<rect x="1114.1" y="729.3" width="7.3" height="42.7" fill="#3b3d31" opacity="0.6"/>
<rect x="1119.4" y="736.6" width="5.0" height="35.4" fill="#55594b" opacity="0.6"/>
<rect x="1124.1" y="732.8" width="5.0" height="39.2" fill="#4e5044" opacity="0.6"/>
<rect x="1129.8" y="734.6" width="11.4" height="37.4" fill="#7d8373" opacity="0.6"/>
<rect x="1142.6" y="735.9" width="7.4" height="36.1" fill="#6a6c60" opacity="0.6"/>
<rect x="1150.4" y="728.6" width="3.8" height="43.4" fill="#535649" opacity="0.6"/>
<rect x="1154.9" y="737.5" width="10.2" height="34.5" fill="#686c5e" opacity="0.6"/>
<rect x="1165.7" y="739.1" width="10.1" height="32.9" fill="#3e4334" opacity="0.6"/>
<rect x="1177.2" y="737.6" width="10.9" height="34.4" fill="#66695c" opacity="0.6"/>
<rect x="1188.4" y="729.9" width="8.5" height="42.1" fill="#4b4e41" opacity="0.6"/>
<rect x="1195.1" y="735.6" width="5.3" height="36.4" fill="#797a6f" opacity="0.6"/>
<rect x="1201.4" y="729.8" width="5.4" height="42.2" fill="#7b7b71" opacity="0.6"/>
<rect x="1207.2" y="729.5" width="3.0" height="42.5" fill="#4a5040" opacity="0.6"/>
<rect x="1209.6" y="738.7" width="8.5" height="33.3" fill="#7a7a70" opacity="0.6"/>
<rect x="1218.3" y="734.1" width="3.7" height="37.9" fill="#7c8272" opacity="0.6"/>
<rect x="1220.6" y="729.1" width="4.7" height="42.9" fill="#4f5445" opacity="0.6"/>
<rect x="1225.7" y="734.3" width="4.9" height="37.7" fill="#7c7f72" opacity="0.6"/>
<rect x="1229.1" y="731.7" width="10.5" height="40.3" fill="#5e6054" opacity="0.6"/>
<rect x="1235.9" y="736.6" width="5.8" height="35.4" fill="#727768" opacity="0.6"/>
<rect x="1240.6" y="732.7" width="9.2" height="39.3" fill="#44493a" opacity="0.6"/>
<rect x="1248.6" y="733.3" width="11.7" height="38.7" fill="#464b3c" opacity="0.6"/>
<rect x="1261.7" y="731.5" width="9.4" height="40.5" fill="#737469" opacity="0.6"/>
<rect x="1268.0" y="729.8" width="9.9" height="42.2" fill="#515547" opacity="0.6"/>
<rect x="1277.7" y="737.1" width="11.4" height="34.9" fill="#5d5f53" opacity="0.6"/>
<rect x="1288.4" y="732.5" width="3.8" height="39.5" fill="#4f5045" opacity="0.6"/>
<rect x="1290.9" y="733.6" width="5.8" height="38.4" fill="#5a5e50" opacity="0.6"/>
<rect x="1296.6" y="729.2" width="7.0" height="42.8" fill="#67675d" opacity="0.6"/>
<rect x="1303.4" y="730.3" width="4.2" height="41.7" fill="#4d4e43" opacity="0.6"/>
<rect x="1306.0" y="730.7" width="7.2" height="41.3" fill="#424238" opacity="0.6"/>
<rect x="1311.0" y="728.9" width="4.1" height="43.1" fill="#6b7161" opacity="0.6"/>
<rect x="1315.8" y="735.8" width="6.8" height="36.2" fill="#78796e" opacity="0.6"/>
<rect x="1323.0" y="732.0" width="10.4" height="40.0" fill="#686b5e" opacity="0.6"/>
<rect x="1331.8" y="736.4" width="3.1" height="35.6" fill="#6a6e60" opacity="0.6"/>
<rect x="1335.5" y="731.1" width="10.1" height="40.9" fill="#7a7a70" opacity="0.6"/>
<rect x="1342.8" y="734.7" width="5.8" height="37.3" fill="#6f6f65" opacity="0.6"/>
<rect x="1346.9" y="729.2" width="6.0" height="42.8" fill="#5c6252" opacity="0.6"/>
<rect x="1353.1" y="734.6" width="5.3" height="37.4" fill="#7b7d71" opacity="0.6"/>
<rect x="1357.4" y="736.6" width="7.5" height="35.4" fill="#494d3f" opacity="0.6"/>
</g><g filter="url(#blur8)">
<ellipse cx="120" cy="750" rx="60" ry="18" fill="#77776c" opacity="0.5"/>
<ellipse cx="330" cy="748" rx="50" ry="16" fill="#74746a" opacity="0.4"/>
<ellipse cx="455" cy="752" rx="30" ry="16" fill="#2e2e2a" opacity="0.6"/>
<ellipse cx="540" cy="752" rx="25" ry="16" fill="#34342e" opacity="0.5"/>
<ellipse cx="640" cy="748" rx="40" ry="14" fill="#80806f" opacity="0.35"/>
<ellipse cx="760" cy="752" rx="50" ry="16" fill="#3e3e36" opacity="0.35"/>
<ellipse cx="880" cy="748" rx="60" ry="16" fill="#7a7a68" opacity="0.3"/>
<ellipse cx="1000" cy="752" rx="40" ry="16" fill="#45453c" opacity="0.35"/>
</g></g>
<rect x="0" y="728" width="1366" height="1" fill="#2a2a2a" />
<rect x="0" y="729" width="1366" height="1" fill="#9a9a92" />
<circle cx="27" cy="748" r="18.5" fill="url(#orb)" stroke="#9aa4aa" stroke-width="1"/>
<ellipse cx="27" cy="740" rx="14" ry="8" fill="#ffffff" opacity="0.18"/>
<path d="M17,740 Q21,737 26,739 L25,747 Q21,745 17,747 Z" fill="#f0582a"/>
<path d="M27,739 Q32,741 37,739 L36,747 Q31,749 26,747 Z" fill="#7cc040"/>
<path d="M16,749 Q21,747 25,749 L24,757 Q20,755 15,757 Z" fill="#2aa0e8"/>
<path d="M26,749 Q31,751 36,749 L35,757 Q30,759 25,757 Z" fill="#ffc020"/>
<path d="M73,738 L85,738 L87,740 L104,740 L104,762 L73,762 Z" fill="#f3dc8e" stroke="#c8a850" stroke-width="0.8"/>
<rect x="76" y="736" width="4" height="2" fill="#22bb22" />
<rect x="85" y="739" width="4" height="2" fill="#dd2222" />
<rect x="93" y="741" width="4" height="2" fill="#2288ee" />
<path d="M79,752 L98,752 L98,763 L93,763 L93,757 L84,757 L84,763 L79,763 Z" fill="#7cc8f0" stroke="#3a8ac0" stroke-width="0.8"/>
<rect x="122.5" y="729.5" width="53" height="37" rx="3" fill="url(#tbtn)" stroke="#2e2e2a"/>
<rect x="123.5" y="730.5" width="51" height="35" rx="2" fill="none" stroke="#b0b0a8" stroke-width="0.8" opacity="0.7"/>
<circle cx="148.5" cy="747" r="15.3" fill="url(#ff)"/>
<ellipse cx="152" cy="743.5" rx="10.5" ry="10" fill="url(#globe)"/>
<path d="M137,738 Q141,733 146,737 Q143,741 147,744 Q151,747 156,744 Q154,751 147,751 Q140,750 139,745 Z" fill="#e8601a"/>
<rect x="176" y="730" width="1" height="36" fill="#2e2e2a" />
<rect x="177" y="730" width="2" height="36" fill="#77776f" />
<rect x="179" y="730" width="1" height="36" fill="#2e2e2a" />
<rect x="184.5" y="729.5" width="57" height="37" rx="3" fill="url(#tbtn)" stroke="#2e2e2a"/>
<rect x="185.5" y="730.5" width="55" height="35" rx="2" fill="none" stroke="#b0b0a8" stroke-width="0.8" opacity="0.7"/>
<path d="M205.5,738 L219,738 L217,761 L207.5,761 Z" fill="#e8f0e0" stroke="#9a9a90" stroke-width="0.8"/>
<path d="M207.5,741 L217,741 L216,759.5 L208.5,759.5 Z" fill="#33cc22"/>
<path d="M207,751 L216.5,751" stroke="#e8f0e0" stroke-width="1.2"/>
<path d="M198,751.5 L206,751.5 L206,759 M198,751.5 L198,755.5 L206,755.5 M228,751.5 L220,751.5 L220,759 M228,751.5 L228,755.5 L220,755.5" fill="none" stroke="#ececec" stroke-width="2.2"/>
<rect x="246.5" y="729.5" width="57" height="37" rx="3" fill="url(#tbtn2)" stroke="#2e2e2a"/>
<rect x="259" y="732" width="32" height="32" fill="#063a6c" />
<rect x="287" y="736.5" width="4" height="5.5" fill="#fff" />
<rect x="259" y="748.3" width="4.3" height="5.5" fill="#fff" />
<rect x="277" y="746.2" width="6" height="5.9" fill="#fff" />
<rect x="267" y="756.3" width="6" height="5.7" fill="#fff" />
<text x="1104.5" y="750.2" font-size="12.21" fill="#e8e8e8" stroke="#e8e8e8" stroke-width="0.1" textLength="14.8" lengthAdjust="spacingAndGlyphs" >DE</text>
<path d="M1135.5,752 L1143.5,752 L1139.5,747 Z" fill="#e8e8f0"/>
<rect x="1157" y="744" width="8" height="11" fill="none" stroke="#eee" stroke-width="1.5"/><path d="M1162,742 L1162,746 M1166,742 L1166,746 M1160,746 L1168,746 L1167,751 L1161,751 Z M1164,751 L1164,757" fill="#eee" stroke="#eee" stroke-width="1.2"/>
<rect x="1180" y="752" width="2" height="2" fill="#eee" />
<rect x="1183" y="750" width="2" height="4" fill="#eee" />
<rect x="1186" y="748" width="2" height="6" fill="#eee" />
<rect x="1189" y="746" width="2" height="8" fill="#eee" />
<rect x="1192" y="744" width="2" height="10" fill="#eee" />
<path d="M1205,746 L1208,746 L1212,742 L1212,756 L1208,752 L1205,752 Z" fill="#eee"/><path d="M1214,746 Q1216,749 1214,752 M1216.5,744 Q1220,749 1216.5,754" fill="none" stroke="#eee" stroke-width="1.2"/>
<path d="M1229,742 L1229,757 M1229,743 L1238,743 L1238,750 L1229,750" fill="#eee" stroke="#eee" stroke-width="1.4"/>
<circle cx="1239.5" cy="752" r="4.5" fill="#e02020" stroke="#fff" stroke-width="0.8"/><path d="M1237.5,750 L1241.5,754 M1241.5,750 L1237.5,754" stroke="#fff" stroke-width="1.2"/>
<path d="M1256,744 L1264,744 L1264,751 L1256,751 Z M1260,741 L1260,744 M1255,755 L1258,755 L1258,752 M1262,752 L1262,755 L1265,755" fill="none" stroke="#33dd33" stroke-width="1.6"/>
<text x="1299.1" y="745.2" font-size="13.23" fill="#f0f0f0" textLength="27.3" lengthAdjust="spacingAndGlyphs" >12:48</text>
<text x="1285.6" y="762.0" font-size="12.65" fill="#f0f0f0" textLength="53.9" lengthAdjust="spacingAndGlyphs" >02.01.2013</text>
<rect x="1352.5" y="729.5" width="13" height="38" fill="#707068" stroke="#333" stroke-width="1"/>
<rect x="1353.5" y="730.5" width="11" height="36" fill="none" stroke="#aaa" stroke-width="0.8"/>
</svg></body></html>
